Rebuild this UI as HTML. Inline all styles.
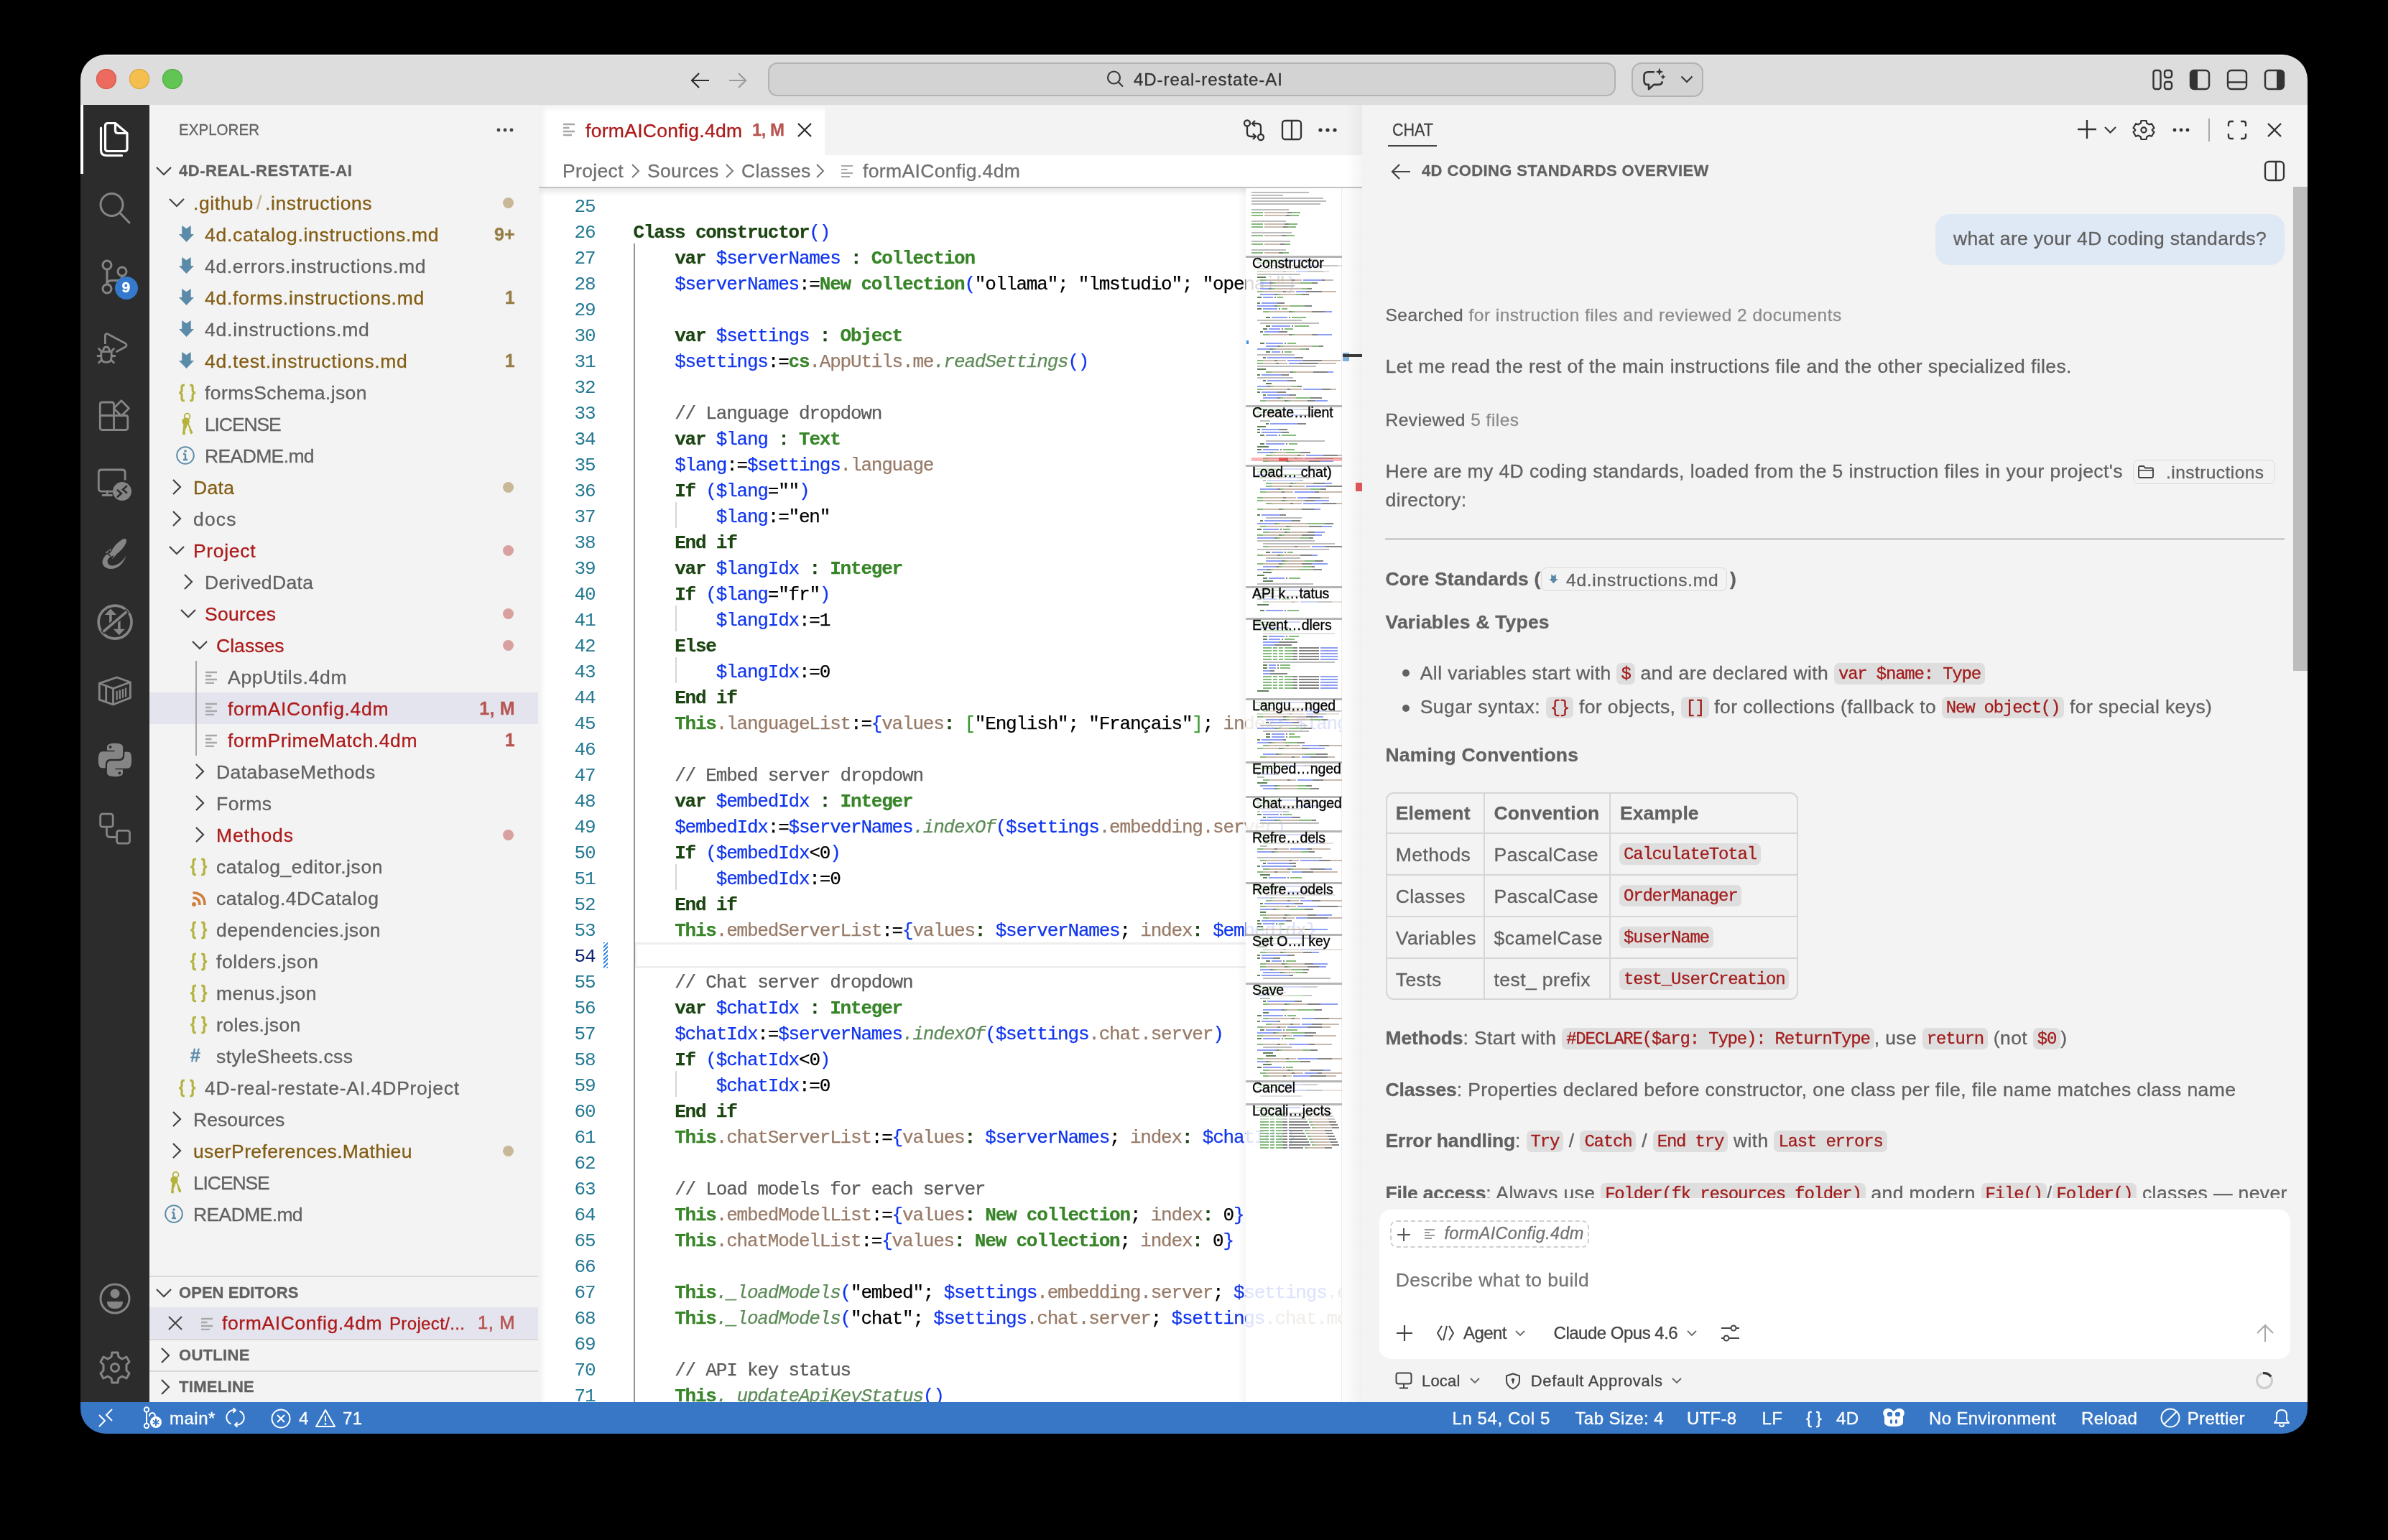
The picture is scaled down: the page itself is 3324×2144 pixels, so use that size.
<!DOCTYPE html><html><head><meta charset="utf-8"><style>
*{margin:0;padding:0}
html,body{width:3324px;height:2144px;overflow:hidden;background:#000}
body{position:relative;font-family:"Liberation Sans",sans-serif}
.a{position:absolute}
.t{position:absolute;white-space:pre;line-height:1;-webkit-text-stroke:0.3px currentColor}
#win{position:absolute;left:0;top:0;width:3324px;height:2144px;clip-path:inset(76px 112px 148px 112px round 35px);background:#f3f3f3;will-change:transform}
.ln{position:absolute;right:1039.6px;width:120px;text-align:right;font:26px/36px "Liberation Mono",monospace;letter-spacing:-1.2px;white-space:pre}
.cl{position:absolute;left:881.5px;font:26px/36px "Liberation Mono",monospace;letter-spacing:-1.2px;white-space:pre;color:#000;-webkit-text-stroke:0.25px currentColor}
.ck{color:#1b4511;font-weight:700}
.ct{color:#378528;font-weight:700}
.cv{color:#1035ef}
.cb{color:#1035ef}
.cp{color:#987a67}
.cm{color:#5d8b58;font-style:italic}
.cc{color:#5c5c5c}
.cq{color:#3f9a38}
.ch{display:inline-block;font-family:"Liberation Mono",monospace;font-size:24px;letter-spacing:-1.2px;color:#a31b1b;background:#dedede;border-radius:7px;padding:5px 6px 4px;line-height:21px;vertical-align:1px}
.sb .t{-webkit-text-stroke:0.35px #fff}
b{font-weight:700;letter-spacing:-0.15px}
</style></head><body><div id="win"><div class="a" style="left:0px;top:76px;width:3324px;height:70px;background:#dddddd;"></div><div class="a" style="left:0px;top:76px;width:3324px;height:2px;background:#ececec;"></div><div class="a" style="left:134px;top:96px;width:28px;height:28px;border-radius:50%;background:#ed6a5e;box-shadow:inset 0 0 0 1px #d4574b"></div><div class="a" style="left:180px;top:96px;width:28px;height:28px;border-radius:50%;background:#f4bf4f;box-shadow:inset 0 0 0 1px #d9a43b"></div><div class="a" style="left:226px;top:96px;width:28px;height:28px;border-radius:50%;background:#61c554;box-shadow:inset 0 0 0 1px #50a940"></div><svg class="a" style="left:960px;top:99px;" width="30" height="26" viewBox="0 0 30 26" fill="none"><path d="M27 13H4M13 3L3 13L13 23" stroke="#2b2b2b" stroke-width="2.2"/></svg><svg class="a" style="left:1012px;top:99px;" width="30" height="26" viewBox="0 0 30 26" fill="none"><path d="M3 13H26M16 3L26 13L16 23" stroke="#9a9a9a" stroke-width="2.2"/></svg><div class="a" style="left:1069px;top:87px;width:1180px;height:47px;box-sizing:border-box;border:2px solid #b2b2b2;border-radius:13px;background:#d3d3d3"></div><svg class="a" style="left:1538px;top:96px;" width="28" height="28" viewBox="0 0 28 28" fill="none"><circle cx="12.5" cy="12" r="8.5" stroke="#3a3a3a" stroke-width="2.2"/><path d="M18.5 18L25 24.5" stroke="#3a3a3a" stroke-width="2.2"/></svg><div class="t" style="left:1578.0px;top:99.0px;font-size:24px;color:#333333;letter-spacing:0.95px;">4D-real-restate-AI</div><div class="a" style="left:2271px;top:87px;width:100px;height:48px;box-sizing:border-box;border:2px solid #b2b2b2;border-radius:14px;background:#d3d3d3"></div><svg class="a" style="left:2284px;top:92px;" width="40" height="36" viewBox="0 0 40 36" fill="none"><path d="M18.8 8.2H10Q4.5 8.2 4.5 13.7V20.4Q4.5 25.9 10 25.9H11V32.2L18 25.9H24Q29.7 25.9 29.7 21.3" stroke="#333" stroke-width="2.6" stroke-linejoin="round"/><path d="M25.9 2.5L27.4 6.4L31.3 7.9L27.4 9.4L25.9 13.3L24.4 9.4L20.5 7.9L24.4 6.4Z" fill="#333"/><path d="M30.9 11.2L32 13.9L34.7 15L32 16.1L30.9 18.8L29.8 16.1L27.1 15L29.8 13.9Z" fill="#333"/></svg><svg class="a" style="left:2339px;top:105px;" width="18" height="11" viewBox="0 0 18 11" fill="none"><path d="M1.5 1.5L9 9L16.5 1.5" stroke="#333" stroke-width="2"/></svg><svg class="a" style="left:2994px;top:95px;" width="32" height="32" viewBox="0 0 32 32" fill="none"><rect x="3.5" y="3" width="10" height="26" rx="3" stroke="#333" stroke-width="2.4"/><rect x="19" y="3" width="10" height="10" rx="3" stroke="#333" stroke-width="2.4"/><rect x="19" y="19" width="10" height="10" rx="3" stroke="#333" stroke-width="2.4"/></svg><svg class="a" style="left:3046px;top:95px;" width="32" height="32" viewBox="0 0 32 32" fill="none"><rect x="3" y="3" width="26" height="26" rx="5" stroke="#333" stroke-width="2.4"/><path d="M3 8Q3 3 8 3H13V29H8Q3 29 3 24Z" fill="#333"/></svg><svg class="a" style="left:3098px;top:95px;" width="32" height="32" viewBox="0 0 32 32" fill="none"><rect x="3" y="3" width="26" height="26" rx="5" stroke="#333" stroke-width="2.4"/><path d="M3 19.5H29" stroke="#333" stroke-width="2.4"/></svg><svg class="a" style="left:3150px;top:95px;" width="32" height="32" viewBox="0 0 32 32" fill="none"><rect x="3" y="3" width="26" height="26" rx="5" stroke="#333" stroke-width="2.4"/><path d="M19 3H24Q29 3 29 8V24Q29 29 24 29H19Z" fill="#333"/></svg><div class="a" style="left:112px;top:146px;width:96px;height:1806px;background:#2c2c2c;"></div><div class="a" style="left:112px;top:146px;width:4px;height:96px;background:#ffffff;"></div><svg class="a" style="left:130px;top:164px" width="60" height="60" viewBox="130 164 60 60" fill="none"><path d="M150 171.5H160.5L177 185.5V207Q177 210.5 173.5 210.5H150Q146.5 210.5 146.5 207V175Q146.5 171.5 150 171.5Z" stroke="#fff" stroke-width="3.2" stroke-linejoin="round"/><path d="M160.5 171.5V181.5Q160.5 185.5 164.5 185.5H177" stroke="#fff" stroke-width="3.2"/><path d="M140.5 178V209Q140.5 216.5 148.5 216.5H169.5" stroke="#fff" stroke-width="3.2" stroke-linecap="round"/></svg><svg class="a" style="left:130px;top:259px" width="60" height="60" viewBox="-30 -30 60 60" fill="none"><circle cx="-4.5" cy="-4" r="15.5" stroke="#858585" stroke-width="3"/><path d="M6.5 7L20 21" stroke="#858585" stroke-width="3" stroke-linecap="round"/></svg><svg class="a" style="left:130px;top:356px" width="60" height="60" viewBox="-30 -30 60 60" fill="none"><circle cx="-11" cy="-17" r="6" stroke="#858585" stroke-width="3"/><circle cx="-11" cy="16" r="6" stroke="#858585" stroke-width="3"/><circle cx="10" cy="-8" r="6" stroke="#858585" stroke-width="3"/><path d="M-11 -11V10M10 -2Q10 4.5 3 4.5H-4Q-11 4.5 -11 10" stroke="#858585" stroke-width="3"/></svg><div class="a" style="left:160px;top:385px;width:32px;height:32px;border-radius:50%;background:#3579cd"></div><div class="t" style="left:169.5px;top:389.1px;font-size:21px;color:#ffffff;font-weight:700;">9</div><svg class="a" style="left:130px;top:453px" width="60" height="60" viewBox="130 453 60 60" fill="none"><path d="M146.4 479V467.5Q146.4 463.5 150 465L174.5 478Q177.8 480.5 174.5 483L161.4 490" stroke="#858585" stroke-width="2.8" stroke-linejoin="round"/><path d="M143.5 490.5Q143.5 483 148 483Q152.5 483 152.5 490.5" stroke="#858585" stroke-width="2.8"/><path d="M140.8 489.6H155.2V497Q155.2 504.3 148 504.3Q140.8 504.3 140.8 497Z" stroke="#858585" stroke-width="2.8" stroke-linejoin="round"/><path d="M137.5 485.5L141.5 489.5M158.5 485.5L154.5 489.5M136 495.5H140.5M155.5 495.5H160M137.5 505L141.5 501M158.5 505L154.5 501" stroke="#858585" stroke-width="2.8" stroke-linecap="round"/></svg><svg class="a" style="left:130px;top:548px" width="60" height="60" viewBox="130 548 60 60" fill="none"><path d="M142.3 560H155.5Q158.5 560 158.5 563V578.5H174.8Q177.8 578.5 177.8 581.5V595.5Q177.8 598.5 174.8 598.5H142.3Q139.3 598.5 139.3 595.5V563Q139.3 560 142.3 560ZM139.3 578.5H158.5V598.5" stroke="#858585" stroke-width="2.8"/><path d="M168.9 557.8L179.5 568.4L168.9 579L158.3 568.4Z" stroke="#858585" stroke-width="2.8" stroke-linejoin="round"/></svg><svg class="a" style="left:130px;top:644px" width="60" height="60" viewBox="130 644 60 60" fill="none"><path d="M159 684.1H141.3Q137.3 684.1 137.3 680.1V658Q137.3 654 141.3 654H170.1Q174.1 654 174.1 658V668.6" stroke="#858585" stroke-width="2.8"/><path d="M149.2 684V689.5M143 689.5H155.4" stroke="#858585" stroke-width="2.8" stroke-linecap="round"/><circle cx="170" cy="684.1" r="13" fill="#858585"/><path d="M163.7 682.6L168.9 686.9L163.7 691.4M176.2 676.9L171 681.5L176.2 685.9" stroke="#2c2c2c" stroke-width="2.6" stroke-linecap="round"/></svg><svg class="a" style="left:130px;top:740px" width="60" height="60" viewBox="130 740 60 60" fill="none"><ellipse cx="165.2" cy="761.8" rx="15" ry="5.3" transform="rotate(-48 165.2 761.8)" fill="#858585"/><path d="M154.5 763.5L146.4 769.6L153.5 770.5Z M160.5 769.5L155.7 778.8L162.5 771.5Z M152.5 766L158.5 772L155.5 775L149.5 769Z" fill="#858585"/><path d="M148.6 771.5Q139 781 144.5 788Q151 794.5 162 790.5Q171.5 786 175.8 773.2Q169 784.5 160 787Q151.5 789 149.8 783Q148.8 778 154 775Z" fill="#858585"/></svg><svg class="a" style="left:130px;top:836px" width="60" height="60" viewBox="130 836 60 60" fill="none"><circle cx="160.1" cy="866.1" r="23" stroke="#858585" stroke-width="3.6"/><path d="M153.9 869.5V855M165.8 863V877" stroke="#858585" stroke-width="3.6"/><path d="M153.9 847.5L162 856H145.8Z M165.8 884.3L157.7 875.8H173.9Z" fill="#858585"/><path d="M142.5 880.5L177.5 850.5" stroke="#2c2c2c" stroke-width="7"/><path d="M143.5 879.6L176.5 851.4" stroke="#858585" stroke-width="3.6"/></svg><svg class="a" style="left:130px;top:932px" width="60" height="60" viewBox="130 932 60 60" fill="none"><path d="M138.3 951.3L162.7 943L181.4 949.7V971.5L157.5 980.9L138.3 974.1Z" stroke="#858585" stroke-width="2.8" stroke-linejoin="round"/><path d="M138.3 951.3L157.5 958.5L181.4 949.7M157.5 958.5V980.9M147.7 954.5V977" stroke="#858585" stroke-width="2.8"/><path d="M162.7 962V974.5M166.9 960.5V973M171 959V971.5M175 957.5V970" stroke="#858585" stroke-width="2.2"/></svg><svg class="a" style="left:130px;top:1028px" width="60" height="60" viewBox="130 1028 60 60" fill="none"><path d="M171.8 1070.5V1076.5Q171.8 1082 160 1082Q148.1 1082 148.1 1076V1065Q148.1 1058.5 155 1058.5H166Q172.5 1058.5 172.5 1051V1046H179Q184 1046 184 1058Q184 1070.5 178 1070.5H160.5V1070.5Z" fill="#858585" stroke="#2c2c2c" stroke-width="1.6"/><path d="M148.2 1045.5V1039.5Q148.2 1034 160 1034Q171.9 1034 171.9 1040V1051Q171.9 1057.5 165 1057.5H154Q147.5 1057.5 147.5 1065V1070H141Q136 1070 136 1058Q136 1045.5 142 1045.5H159.5V1045.5Z" fill="#858585" stroke="#2c2c2c" stroke-width="1.6"/><circle cx="153.6" cy="1039.9" r="1.9" fill="#2c2c2c"/><circle cx="166.4" cy="1076.3" r="1.9" fill="#2c2c2c"/></svg><svg class="a" style="left:130px;top:1124px" width="60" height="60" viewBox="130 1124 60 60" fill="none"><rect x="139.7" y="1133.2" width="17.5" height="18" rx="3" stroke="#858585" stroke-width="2.8"/><rect x="162.6" y="1156.3" width="17.9" height="17.8" rx="3" stroke="#858585" stroke-width="2.8"/><path d="M148.5 1152.6V1160.5Q148.5 1165.5 153.5 1165.5H161.2" stroke="#858585" stroke-width="2.8"/></svg><svg class="a" style="left:130px;top:1778px" width="60" height="60" viewBox="-30 -30 60 60" fill="none"><circle cx="0" cy="0" r="20" stroke="#858585" stroke-width="3"/><circle cx="0" cy="-7" r="6.5" fill="#858585"/><path d="M-11 4H11Q11 14 0 14Q-11 14 -11 4Z" fill="#858585"/></svg><svg class="a" style="left:130px;top:1874px" width="60" height="60" viewBox="-30 -30 60 60" fill="none"><path d="M-4 -21H4L5 -15L10 -12L16 -15L20 -8L16 -4V4L20 8L16 15L10 12L5 15L4 21H-4L-5 15L-10 12L-16 15L-20 8L-16 4V-4L-20 -8L-16 -15L-10 -12L-5 -15Z" stroke="#858585" stroke-width="3" stroke-linejoin="round"/><circle cx="0" cy="0" r="5.5" stroke="#858585" stroke-width="3"/></svg><div class="a" style="left:208px;top:146px;width:542px;height:1806px;background:#f3f3f3;"></div><div class="t" style="left:249.0px;top:170.0px;font-size:22px;color:#616161;transform:scaleX(0.935);transform-origin:0 0;">EXPLORER</div><svg class="a" style="left:690px;top:174px;" width="28" height="14" viewBox="0 0 28 14" fill="none"><circle cx="4" cy="7" r="2.4" fill="#424242"/><circle cx="13" cy="7" r="2.4" fill="#424242"/><circle cx="22" cy="7" r="2.4" fill="#424242"/></svg><svg class="a" style="left:216px;top:230px;" width="24" height="16" viewBox="0 0 24 16" fill="none"><path d="M2 3L12 13L22 3" stroke="#424242" stroke-width="2.2"/></svg><div class="t" style="left:249.0px;top:227.0px;font-size:22px;color:#616161;font-weight:700;letter-spacing:0.55px;">4D-REAL-RESTATE-AI</div><svg class="a" style="left:234px;top:274px;" width="24" height="16" viewBox="0 0 24 16" fill="none"><path d="M2 3L12 13L22 3" stroke="#424242" stroke-width="2.2"/></svg><div class="t" style="left:269.0px;top:269.8px;font-size:26.5px;color:#835d13;letter-spacing:0.6px;">.github</div><div class="t" style="left:357.0px;top:268.8px;font-size:26.5px;color:#c2b48f;letter-spacing:0.6px;">/</div><div class="t" style="left:369.0px;top:269.8px;font-size:26.5px;color:#835d13;letter-spacing:0.6px;">.instructions</div><div class="a" style="left:700px;top:274.5px;width:15px;height:15px;border-radius:50%;background:#c8b898"></div><svg class="a" style="left:249px;top:314px;" width="22" height="24" viewBox="0 0 22 24" fill="none"><path d="M4.2 0L10.5 4.3L16.7 0V12H21L10.5 23L0 12H4.2Z" fill="#5b8ba9"/></svg><div class="t" style="left:285.0px;top:313.8px;font-size:26.5px;color:#835d13;letter-spacing:0.71px;">4d.catalog.instructions.md</div><div class="t" style="right:2607px;top:313.9px;font-size:25px;color:#967d46;font-weight:700;letter-spacing:0.3px">9+</div><svg class="a" style="left:249px;top:358px;" width="22" height="24" viewBox="0 0 22 24" fill="none"><path d="M4.2 0L10.5 4.3L16.7 0V12H21L10.5 23L0 12H4.2Z" fill="#5b8ba9"/></svg><div class="t" style="left:285.0px;top:357.8px;font-size:26.5px;color:#616161;letter-spacing:0.66px;">4d.errors.instructions.md</div><svg class="a" style="left:249px;top:402px;" width="22" height="24" viewBox="0 0 22 24" fill="none"><path d="M4.2 0L10.5 4.3L16.7 0V12H21L10.5 23L0 12H4.2Z" fill="#5b8ba9"/></svg><div class="t" style="left:285.0px;top:401.8px;font-size:26.5px;color:#835d13;letter-spacing:0.72px;">4d.forms.instructions.md</div><div class="t" style="right:2607px;top:401.9px;font-size:25px;color:#967d46;font-weight:700;letter-spacing:0.3px">1</div><svg class="a" style="left:249px;top:446px;" width="22" height="24" viewBox="0 0 22 24" fill="none"><path d="M4.2 0L10.5 4.3L16.7 0V12H21L10.5 23L0 12H4.2Z" fill="#5b8ba9"/></svg><div class="t" style="left:285.0px;top:445.8px;font-size:26.5px;color:#616161;letter-spacing:0.81px;">4d.instructions.md</div><svg class="a" style="left:249px;top:490px;" width="22" height="24" viewBox="0 0 22 24" fill="none"><path d="M4.2 0L10.5 4.3L16.7 0V12H21L10.5 23L0 12H4.2Z" fill="#5b8ba9"/></svg><div class="t" style="left:285.0px;top:489.8px;font-size:26.5px;color:#835d13;letter-spacing:0.76px;">4d.test.instructions.md</div><div class="t" style="right:2607px;top:489.9px;font-size:25px;color:#967d46;font-weight:700;letter-spacing:0.3px">1</div><div class="t" style="left:249.0px;top:533.0px;font-size:25px;color:#b2b23e;font-weight:700;letter-spacing:0.5px;transform:scaleX(0.85);transform-origin:0 0;">{ }</div><div class="t" style="left:285.0px;top:533.8px;font-size:26.5px;color:#616161;letter-spacing:0.4px;">formsSchema.json</div><svg class="a" style="left:251px;top:574px;" width="22" height="32" viewBox="0 0 22 32" fill="none"><circle cx="9.6" cy="5.6" r="3.9" stroke="#b3b33b" stroke-width="1.8"/><circle cx="7.6" cy="12.8" r="5.2" fill="#b3b33b"/><path d="M4.6 15L3 31L6.5 31.5L7.2 28L5.8 27L7.5 25.5L6.5 24L8.5 22L9.8 15Z" fill="#b3b33b"/><path d="M9.5 14.5L11 14L17.5 28.5L15 30.5L13 27.5L13.5 26L12 24.5L12.5 23Z" fill="#b3b33b"/></svg><div class="t" style="left:285.0px;top:577.8px;font-size:26.5px;color:#616161;letter-spacing:-1.12px;">LICENSE</div><svg class="a" style="left:245px;top:621px;" width="28" height="28" viewBox="0 0 28 28" fill="none"><circle cx="13" cy="13" r="11.8" stroke="#5b8ba9" stroke-width="2"/><path d="M13 11V19M10 19H16M10 11H13" stroke="#5b8ba9" stroke-width="2.4"/><circle cx="13" cy="7" r="1.8" fill="#5b8ba9"/></svg><div class="t" style="left:285.0px;top:621.8px;font-size:26.5px;color:#616161;letter-spacing:-0.62px;">README.md</div><svg class="a" style="left:238px;top:666px;" width="16" height="24" viewBox="0 0 16 24" fill="none"><path d="M3 2L13 12L3 22" stroke="#424242" stroke-width="2.2"/></svg><div class="t" style="left:269.0px;top:665.8px;font-size:26.5px;color:#835d13;letter-spacing:0.37px;">Data</div><div class="a" style="left:700px;top:670.5px;width:15px;height:15px;border-radius:50%;background:#c8b898"></div><svg class="a" style="left:238px;top:710px;" width="16" height="24" viewBox="0 0 16 24" fill="none"><path d="M3 2L13 12L3 22" stroke="#424242" stroke-width="2.2"/></svg><div class="t" style="left:269.0px;top:709.8px;font-size:26.5px;color:#616161;letter-spacing:1.17px;">docs</div><svg class="a" style="left:234px;top:758px;" width="24" height="16" viewBox="0 0 24 16" fill="none"><path d="M2 3L12 13L22 3" stroke="#424242" stroke-width="2.2"/></svg><div class="t" style="left:269.0px;top:753.8px;font-size:26.5px;color:#ad1a1a;letter-spacing:0.67px;">Project</div><div class="a" style="left:700px;top:758.5px;width:15px;height:15px;border-radius:50%;background:#d9a0a0"></div><svg class="a" style="left:254px;top:798px;" width="16" height="24" viewBox="0 0 16 24" fill="none"><path d="M3 2L13 12L3 22" stroke="#424242" stroke-width="2.2"/></svg><div class="t" style="left:285.0px;top:797.8px;font-size:26.5px;color:#616161;letter-spacing:0.37px;">DerivedData</div><svg class="a" style="left:250px;top:846px;" width="24" height="16" viewBox="0 0 24 16" fill="none"><path d="M2 3L12 13L22 3" stroke="#424242" stroke-width="2.2"/></svg><div class="t" style="left:285.0px;top:841.8px;font-size:26.5px;color:#ad1a1a;letter-spacing:0.3px;">Sources</div><div class="a" style="left:700px;top:846.5px;width:15px;height:15px;border-radius:50%;background:#d9a0a0"></div><svg class="a" style="left:266px;top:890px;" width="24" height="16" viewBox="0 0 24 16" fill="none"><path d="M2 3L12 13L22 3" stroke="#424242" stroke-width="2.2"/></svg><div class="t" style="left:301.0px;top:885.8px;font-size:26.5px;color:#ad1a1a;letter-spacing:0.04px;">Classes</div><div class="a" style="left:700px;top:890.5px;width:15px;height:15px;border-radius:50%;background:#d9a0a0"></div><svg class="a" style="left:285px;top:934px;" width="18" height="18" viewBox="0 0 18 18" fill="none"><path d="M1 2H17M1 7H9.5M1 12H17M1 17H13" stroke="#a8a8a8" stroke-width="2.4"/></svg><div class="t" style="left:317.0px;top:929.8px;font-size:26.5px;color:#616161;letter-spacing:0.72px;">AppUtils.4dm</div><div class="a" style="left:208px;top:964px;width:541px;height:44px;background:#e4e4ee;"></div><svg class="a" style="left:285px;top:978px;" width="18" height="18" viewBox="0 0 18 18" fill="none"><path d="M1 2H17M1 7H9.5M1 12H17M1 17H13" stroke="#a8a8a8" stroke-width="2.4"/></svg><div class="t" style="left:317.0px;top:973.8px;font-size:26.5px;color:#ad1a1a;letter-spacing:0.66px;">formAIConfig.4dm</div><div class="t" style="right:2607px;top:973.9px;font-size:25px;color:#b85550;font-weight:700;letter-spacing:0.3px">1, M</div><svg class="a" style="left:285px;top:1022px;" width="18" height="18" viewBox="0 0 18 18" fill="none"><path d="M1 2H17M1 7H9.5M1 12H17M1 17H13" stroke="#a8a8a8" stroke-width="2.4"/></svg><div class="t" style="left:317.0px;top:1017.8px;font-size:26.5px;color:#ad1a1a;letter-spacing:0.6px;">formPrimeMatch.4dm</div><div class="t" style="right:2607px;top:1017.9px;font-size:25px;color:#b85550;font-weight:700;letter-spacing:0.3px">1</div><svg class="a" style="left:270px;top:1062px;" width="16" height="24" viewBox="0 0 16 24" fill="none"><path d="M3 2L13 12L3 22" stroke="#424242" stroke-width="2.2"/></svg><div class="t" style="left:301.0px;top:1061.8px;font-size:26.5px;color:#616161;letter-spacing:0.44px;">DatabaseMethods</div><svg class="a" style="left:270px;top:1106px;" width="16" height="24" viewBox="0 0 16 24" fill="none"><path d="M3 2L13 12L3 22" stroke="#424242" stroke-width="2.2"/></svg><div class="t" style="left:301.0px;top:1105.8px;font-size:26.5px;color:#616161;letter-spacing:0.48px;">Forms</div><svg class="a" style="left:270px;top:1150px;" width="16" height="24" viewBox="0 0 16 24" fill="none"><path d="M3 2L13 12L3 22" stroke="#424242" stroke-width="2.2"/></svg><div class="t" style="left:301.0px;top:1149.8px;font-size:26.5px;color:#ad1a1a;letter-spacing:0.88px;">Methods</div><div class="a" style="left:700px;top:1154.5px;width:15px;height:15px;border-radius:50%;background:#d9a0a0"></div><div class="t" style="left:265.0px;top:1193.0px;font-size:25px;color:#b2b23e;font-weight:700;letter-spacing:0.5px;transform:scaleX(0.85);transform-origin:0 0;">{ }</div><div class="t" style="left:301.0px;top:1193.8px;font-size:26.5px;color:#616161;letter-spacing:0.58px;">catalog_editor.json</div><svg class="a" style="left:266px;top:1240px;" width="24" height="24" viewBox="0 0 24 24" fill="none"><circle cx="4" cy="19" r="3" fill="#d0803f"/><path d="M2.5 10Q12 10 12 20M2.5 3Q19 3 19 20" stroke="#d0803f" stroke-width="3.6"/></svg><div class="t" style="left:301.0px;top:1237.8px;font-size:26.5px;color:#616161;letter-spacing:0.49px;">catalog.4DCatalog</div><div class="t" style="left:265.0px;top:1281.0px;font-size:25px;color:#b2b23e;font-weight:700;letter-spacing:0.5px;transform:scaleX(0.85);transform-origin:0 0;">{ }</div><div class="t" style="left:301.0px;top:1281.8px;font-size:26.5px;color:#616161;letter-spacing:0.47px;">dependencies.json</div><div class="t" style="left:265.0px;top:1325.0px;font-size:25px;color:#b2b23e;font-weight:700;letter-spacing:0.5px;transform:scaleX(0.85);transform-origin:0 0;">{ }</div><div class="t" style="left:301.0px;top:1325.8px;font-size:26.5px;color:#616161;letter-spacing:0.59px;">folders.json</div><div class="t" style="left:265.0px;top:1369.0px;font-size:25px;color:#b2b23e;font-weight:700;letter-spacing:0.5px;transform:scaleX(0.85);transform-origin:0 0;">{ }</div><div class="t" style="left:301.0px;top:1369.8px;font-size:26.5px;color:#616161;letter-spacing:0.43px;">menus.json</div><div class="t" style="left:265.0px;top:1413.0px;font-size:25px;color:#b2b23e;font-weight:700;letter-spacing:0.5px;transform:scaleX(0.85);transform-origin:0 0;">{ }</div><div class="t" style="left:301.0px;top:1413.8px;font-size:26.5px;color:#616161;letter-spacing:0.43px;">roles.json</div><div class="t" style="left:265.0px;top:1457.0px;font-size:25px;color:#5b8ba9;font-weight:700;">#</div><div class="t" style="left:301.0px;top:1457.8px;font-size:26.5px;color:#616161;letter-spacing:0.42px;">styleSheets.css</div><div class="t" style="left:249.0px;top:1501.0px;font-size:25px;color:#b2b23e;font-weight:700;letter-spacing:0.5px;transform:scaleX(0.85);transform-origin:0 0;">{ }</div><div class="t" style="left:285.0px;top:1501.8px;font-size:26.5px;color:#616161;letter-spacing:0.73px;">4D-real-restate-AI.4DProject</div><svg class="a" style="left:238px;top:1546px;" width="16" height="24" viewBox="0 0 16 24" fill="none"><path d="M3 2L13 12L3 22" stroke="#424242" stroke-width="2.2"/></svg><div class="t" style="left:269.0px;top:1545.8px;font-size:26.5px;color:#616161;letter-spacing:0.07px;">Resources</div><svg class="a" style="left:238px;top:1590px;" width="16" height="24" viewBox="0 0 16 24" fill="none"><path d="M3 2L13 12L3 22" stroke="#424242" stroke-width="2.2"/></svg><div class="t" style="left:269.0px;top:1589.8px;font-size:26.5px;color:#835d13;letter-spacing:0.38px;">userPreferences.Mathieu</div><div class="a" style="left:700px;top:1594.5px;width:15px;height:15px;border-radius:50%;background:#c8b898"></div><svg class="a" style="left:235px;top:1630px;" width="22" height="32" viewBox="0 0 22 32" fill="none"><circle cx="9.6" cy="5.6" r="3.9" stroke="#b3b33b" stroke-width="1.8"/><circle cx="7.6" cy="12.8" r="5.2" fill="#b3b33b"/><path d="M4.6 15L3 31L6.5 31.5L7.2 28L5.8 27L7.5 25.5L6.5 24L8.5 22L9.8 15Z" fill="#b3b33b"/><path d="M9.5 14.5L11 14L17.5 28.5L15 30.5L13 27.5L13.5 26L12 24.5L12.5 23Z" fill="#b3b33b"/></svg><div class="t" style="left:269.0px;top:1633.8px;font-size:26.5px;color:#616161;letter-spacing:-1.12px;">LICENSE</div><svg class="a" style="left:229px;top:1677px;" width="28" height="28" viewBox="0 0 28 28" fill="none"><circle cx="13" cy="13" r="11.8" stroke="#5b8ba9" stroke-width="2"/><path d="M13 11V19M10 19H16M10 11H13" stroke="#5b8ba9" stroke-width="2.4"/><circle cx="13" cy="7" r="1.8" fill="#5b8ba9"/></svg><div class="t" style="left:269.0px;top:1677.8px;font-size:26.5px;color:#616161;letter-spacing:-0.62px;">README.md</div><div class="a" style="left:272px;top:920px;width:2px;height:132px;background:#a6a6a6;"></div><div class="a" style="left:208px;top:1776px;width:541px;height:2px;background:#d8d8d8;"></div><svg class="a" style="left:216px;top:1792px;" width="24" height="16" viewBox="0 0 24 16" fill="none"><path d="M2 3L12 13L22 3" stroke="#424242" stroke-width="2.2"/></svg><div class="t" style="left:249.0px;top:1789.0px;font-size:22px;color:#616161;font-weight:700;letter-spacing:0.05px;">OPEN EDITORS</div><div class="a" style="left:208px;top:1820px;width:541px;height:44px;background:#e4e4ee;"></div><svg class="a" style="left:233px;top:1831px;" width="22" height="22" viewBox="0 0 22 22" fill="none"><path d="M2 2L20 20M20 2L2 20" stroke="#424242" stroke-width="2"/></svg><svg class="a" style="left:279px;top:1834px;" width="18" height="18" viewBox="0 0 18 18" fill="none"><path d="M1 2H17M1 7H9.5M1 12H17M1 17H13" stroke="#a8a8a8" stroke-width="2.4"/></svg><div class="t" style="left:309.0px;top:1828.8px;font-size:26.5px;color:#ad1a1a;letter-spacing:0.6px;">formAIConfig.4dm</div><div class="t" style="left:542.0px;top:1831.2px;font-size:24px;color:#ad1a1a;letter-spacing:0.35px;">Project/...</div><div class="t" style="right:2607px;top:1828.9px;font-size:25.5px;color:#b85550;letter-spacing:0.6px;-webkit-text-stroke:0.6px #b85550">1, M</div><div class="a" style="left:208px;top:1864px;width:541px;height:2px;background:#d8d8d8;"></div><svg class="a" style="left:222px;top:1875px;" width="16" height="24" viewBox="0 0 16 24" fill="none"><path d="M3 2L13 12L3 22" stroke="#424242" stroke-width="2.2"/></svg><div class="t" style="left:249.0px;top:1876.0px;font-size:22px;color:#616161;font-weight:700;letter-spacing:0.3px;">OUTLINE</div><div class="a" style="left:208px;top:1908px;width:541px;height:2px;background:#d8d8d8;"></div><svg class="a" style="left:222px;top:1919px;" width="16" height="24" viewBox="0 0 16 24" fill="none"><path d="M3 2L13 12L3 22" stroke="#424242" stroke-width="2.2"/></svg><div class="t" style="left:249.0px;top:1920.0px;font-size:22px;color:#616161;font-weight:700;letter-spacing:0.3px;">TIMELINE</div><div class="a" style="left:750px;top:146px;width:1146px;height:1806px;background:#ffffff;"></div><div class="a" style="left:750px;top:146px;width:1146px;height:70px;background:#f3f3f3;"></div><div class="a" style="left:750px;top:146px;width:398px;height:70px;background:#ffffff;"></div><svg class="a" style="left:783px;top:171px;" width="20" height="20" viewBox="0 0 20 20" fill="none"><path d="M1 2H17M1 7H9.5M1 12H17M1 17H13" stroke="#a8a8a8" stroke-width="2.4"/></svg><div class="t" style="left:815.0px;top:168.6px;font-size:26.5px;color:#ad1a1a;letter-spacing:0.3px;">formAIConfig.4dm</div><div class="t" style="left:1047.0px;top:169.4px;font-size:24px;color:#b85550;font-weight:700;letter-spacing:-0.6px;">1, M</div><svg class="a" style="left:1109px;top:170px;" width="22" height="22" viewBox="0 0 22 22" fill="none"><path d="M2 2L20 20M20 2L2 20" stroke="#2b2b2b" stroke-width="2.2"/></svg><div class="a" style="left:750px;top:146px;width:12px;height:116px;background:linear-gradient(90deg,#efefef,rgba(255,255,255,0))"></div><div class="a" style="left:750px;top:146px;width:398px;height:10px;background:linear-gradient(#f1f1f1,rgba(255,255,255,0))"></div><svg class="a" style="left:1729px;top:165px;" width="34" height="34" viewBox="0 0 34 34" fill="none"><circle cx="7" cy="6.5" r="4" stroke="#333" stroke-width="2.3"/><circle cx="26" cy="26" r="4" stroke="#333" stroke-width="2.3"/><path d="M7 10.5V20Q7 25 12 25H19M15 21L19 25L15 29M26 22V12Q26 7 21 7H14M18 3L14 7L18 11" stroke="#333" stroke-width="2.3"/></svg><svg class="a" style="left:1782px;top:165px;" width="32" height="32" viewBox="0 0 32 32" fill="none"><rect x="3" y="3" width="26" height="26" rx="4" stroke="#333" stroke-width="2.3"/><path d="M16 3V29" stroke="#333" stroke-width="2.3"/></svg><svg class="a" style="left:1834px;top:175px;" width="28" height="12" viewBox="0 0 28 12" fill="none"><circle cx="4" cy="6" r="2.6" fill="#333"/><circle cx="14" cy="6" r="2.6" fill="#333"/><circle cx="24" cy="6" r="2.6" fill="#333"/></svg><div class="t" style="left:783.0px;top:225.3px;font-size:26.5px;color:#717171;letter-spacing:0.35px;">Project</div><svg class="a" style="left:878px;top:227px;" width="14" height="22" viewBox="0 0 14 22" fill="none"><path d="M2 2L11 11L2 20" stroke="#777" stroke-width="2"/></svg><div class="t" style="left:901.0px;top:225.3px;font-size:26.5px;color:#717171;letter-spacing:0.35px;">Sources</div><svg class="a" style="left:1009px;top:227px;" width="14" height="22" viewBox="0 0 14 22" fill="none"><path d="M2 2L11 11L2 20" stroke="#777" stroke-width="2"/></svg><div class="t" style="left:1032.0px;top:225.3px;font-size:26.5px;color:#717171;letter-spacing:0.35px;">Classes</div><svg class="a" style="left:1135px;top:227px;" width="14" height="22" viewBox="0 0 14 22" fill="none"><path d="M2 2L11 11L2 20" stroke="#777" stroke-width="2"/></svg><svg class="a" style="left:1170px;top:229px;" width="20" height="20" viewBox="0 0 20 20" fill="none"><path d="M1 2H17M1 7H9.5M1 12H17M1 17H13" stroke="#a8a8a8" stroke-width="2.2"/></svg><div class="t" style="left:1201.0px;top:225.3px;font-size:26.5px;color:#717171;letter-spacing:0.35px;">formAIConfig.4dm</div><div class="a" style="left:750px;top:260px;width:1146px;height:2px;background:#c2c2c2;"></div><div class="a" style="left:750px;top:262px;width:9px;height:1690px;background:linear-gradient(90deg,#f1f1f1,rgba(255,255,255,0))"></div><div class="a" style="left:750px;top:262px;width:1146px;height:11px;background:linear-gradient(#e9e9e9,rgba(255,255,255,0))"></div><div class="a" style="left:884px;top:1312px;width:850px;height:36px;box-sizing:border-box;border:3.5px solid #eeeeee;border-right:none;border-left-width:2px"></div><div class="a" style="left:882px;top:339px;width:2px;height:1613px;background:#939393;"></div><div class="a" style="left:940px;top:699px;width:2px;height:36px;background:#d6d6d6;"></div><div class="a" style="left:940px;top:843px;width:2px;height:36px;background:#d6d6d6;"></div><div class="a" style="left:940px;top:915px;width:2px;height:36px;background:#d6d6d6;"></div><div class="a" style="left:940px;top:1203px;width:2px;height:36px;background:#d6d6d6;"></div><div class="a" style="left:940px;top:1491px;width:2px;height:36px;background:#d6d6d6;"></div><div class="a" style="left:840px;top:1312px;width:6px;height:36px;background:repeating-linear-gradient(-45deg,#3a8ee6 0 2px,#ffffff 2px 4px)"></div><div class="a" style="left:0;top:0;width:1868px;height:1952px;overflow:hidden"><div class="ln" style="top:269.6px;color:#237893">25</div><div class="ln" style="top:305.6px;color:#237893">26</div><div class="cl" style="top:305.6px"><span class="ck">Class constructor</span><span class="cb">()</span></div><div class="ln" style="top:341.6px;color:#237893">27</div><div class="cl" style="top:341.6px">    <span class="ck">var</span> <span class="cv">$serverNames</span> <span class="ck">:</span> <span class="ct">Collection</span></div><div class="ln" style="top:377.6px;color:#237893">28</div><div class="cl" style="top:377.6px">    <span class="cv">$serverNames</span>:=<span class="ct">New collection</span><span class="cb">(</span>"ollama"; "lmstudio"; "openai"<span class="cb">)</span></div><div class="ln" style="top:413.6px;color:#237893">29</div><div class="ln" style="top:449.6px;color:#237893">30</div><div class="cl" style="top:449.6px">    <span class="ck">var</span> <span class="cv">$settings</span> <span class="ck">:</span> <span class="ct">Object</span></div><div class="ln" style="top:485.6px;color:#237893">31</div><div class="cl" style="top:485.6px">    <span class="cv">$settings</span>:=<span class="ct">cs</span><span class="cp">.AppUtils.me</span><span class="cm">.readSettings</span><span class="cb">()</span></div><div class="ln" style="top:521.6px;color:#237893">32</div><div class="ln" style="top:557.6px;color:#237893">33</div><div class="cl" style="top:557.6px">    <span class="cc">// Language dropdown</span></div><div class="ln" style="top:593.6px;color:#237893">34</div><div class="cl" style="top:593.6px">    <span class="ck">var</span> <span class="cv">$lang</span> <span class="ck">:</span> <span class="ct">Text</span></div><div class="ln" style="top:629.6px;color:#237893">35</div><div class="cl" style="top:629.6px">    <span class="cv">$lang</span>:=<span class="cv">$settings</span><span class="cp">.language</span></div><div class="ln" style="top:665.6px;color:#237893">36</div><div class="cl" style="top:665.6px">    <span class="ck">If</span> <span class="cb">(</span><span class="cv">$lang</span>=""<span class="cb">)</span></div><div class="ln" style="top:701.6px;color:#237893">37</div><div class="cl" style="top:701.6px">        <span class="cv">$lang</span>:="en"</div><div class="ln" style="top:737.6px;color:#237893">38</div><div class="cl" style="top:737.6px">    <span class="ck">End if</span></div><div class="ln" style="top:773.6px;color:#237893">39</div><div class="cl" style="top:773.6px">    <span class="ck">var</span> <span class="cv">$langIdx</span> <span class="ck">:</span> <span class="ct">Integer</span></div><div class="ln" style="top:809.6px;color:#237893">40</div><div class="cl" style="top:809.6px">    <span class="ck">If</span> <span class="cb">(</span><span class="cv">$lang</span>="fr"<span class="cb">)</span></div><div class="ln" style="top:845.6px;color:#237893">41</div><div class="cl" style="top:845.6px">        <span class="cv">$langIdx</span>:=1</div><div class="ln" style="top:881.6px;color:#237893">42</div><div class="cl" style="top:881.6px">    <span class="ck">Else</span></div><div class="ln" style="top:917.6px;color:#237893">43</div><div class="cl" style="top:917.6px">        <span class="cv">$langIdx</span>:=0</div><div class="ln" style="top:953.6px;color:#237893">44</div><div class="cl" style="top:953.6px">    <span class="ck">End if</span></div><div class="ln" style="top:989.6px;color:#237893">45</div><div class="cl" style="top:989.6px">    <span class="ct">This</span><span class="cp">.languageList</span>:=<span class="cb">{</span><span class="cp">values</span><span class="ck">:</span> <span class="cq">[</span>"English"; "Français"<span class="cq">]</span>; <span class="cp">index</span><span class="ck">:</span> <span class="cv">$langIdx</span><span class="cb">}</span></div><div class="ln" style="top:1025.6px;color:#237893">46</div><div class="ln" style="top:1061.6px;color:#237893">47</div><div class="cl" style="top:1061.6px">    <span class="cc">// Embed server dropdown</span></div><div class="ln" style="top:1097.6px;color:#237893">48</div><div class="cl" style="top:1097.6px">    <span class="ck">var</span> <span class="cv">$embedIdx</span> <span class="ck">:</span> <span class="ct">Integer</span></div><div class="ln" style="top:1133.6px;color:#237893">49</div><div class="cl" style="top:1133.6px">    <span class="cv">$embedIdx</span>:=<span class="cv">$serverNames</span><span class="cm">.indexOf</span><span class="cb">(</span><span class="cv">$settings</span><span class="cp">.embedding.server</span><span class="cb">)</span></div><div class="ln" style="top:1169.6px;color:#237893">50</div><div class="cl" style="top:1169.6px">    <span class="ck">If</span> <span class="cb">(</span><span class="cv">$embedIdx</span>&lt;0<span class="cb">)</span></div><div class="ln" style="top:1205.6px;color:#237893">51</div><div class="cl" style="top:1205.6px">        <span class="cv">$embedIdx</span>:=0</div><div class="ln" style="top:1241.6px;color:#237893">52</div><div class="cl" style="top:1241.6px">    <span class="ck">End if</span></div><div class="ln" style="top:1277.6px;color:#237893">53</div><div class="cl" style="top:1277.6px">    <span class="ct">This</span><span class="cp">.embedServerList</span>:=<span class="cb">{</span><span class="cp">values</span><span class="ck">:</span> <span class="cv">$serverNames</span>; <span class="cp">index</span><span class="ck">:</span> <span class="cv">$embedIdx</span><span class="cb">}</span></div><div class="ln" style="top:1313.6px;color:#0b216f">54</div><div class="ln" style="top:1349.6px;color:#237893">55</div><div class="cl" style="top:1349.6px">    <span class="cc">// Chat server dropdown</span></div><div class="ln" style="top:1385.6px;color:#237893">56</div><div class="cl" style="top:1385.6px">    <span class="ck">var</span> <span class="cv">$chatIdx</span> <span class="ck">:</span> <span class="ct">Integer</span></div><div class="ln" style="top:1421.6px;color:#237893">57</div><div class="cl" style="top:1421.6px">    <span class="cv">$chatIdx</span>:=<span class="cv">$serverNames</span><span class="cm">.indexOf</span><span class="cb">(</span><span class="cv">$settings</span><span class="cp">.chat.server</span><span class="cb">)</span></div><div class="ln" style="top:1457.6px;color:#237893">58</div><div class="cl" style="top:1457.6px">    <span class="ck">If</span> <span class="cb">(</span><span class="cv">$chatIdx</span>&lt;0<span class="cb">)</span></div><div class="ln" style="top:1493.6px;color:#237893">59</div><div class="cl" style="top:1493.6px">        <span class="cv">$chatIdx</span>:=0</div><div class="ln" style="top:1529.6px;color:#237893">60</div><div class="cl" style="top:1529.6px">    <span class="ck">End if</span></div><div class="ln" style="top:1565.6px;color:#237893">61</div><div class="cl" style="top:1565.6px">    <span class="ct">This</span><span class="cp">.chatServerList</span>:=<span class="cb">{</span><span class="cp">values</span><span class="ck">:</span> <span class="cv">$serverNames</span>; <span class="cp">index</span><span class="ck">:</span> <span class="cv">$chatIdx</span><span class="cb">}</span></div><div class="ln" style="top:1601.6px;color:#237893">62</div><div class="ln" style="top:1637.6px;color:#237893">63</div><div class="cl" style="top:1637.6px">    <span class="cc">// Load models for each server</span></div><div class="ln" style="top:1673.6px;color:#237893">64</div><div class="cl" style="top:1673.6px">    <span class="ct">This</span><span class="cp">.embedModelList</span>:=<span class="cb">{</span><span class="cp">values</span><span class="ck">:</span> <span class="ct">New collection</span>; <span class="cp">index</span><span class="ck">:</span> 0<span class="cb">}</span></div><div class="ln" style="top:1709.6px;color:#237893">65</div><div class="cl" style="top:1709.6px">    <span class="ct">This</span><span class="cp">.chatModelList</span>:=<span class="cb">{</span><span class="cp">values</span><span class="ck">:</span> <span class="ct">New collection</span>; <span class="cp">index</span><span class="ck">:</span> 0<span class="cb">}</span></div><div class="ln" style="top:1745.6px;color:#237893">66</div><div class="ln" style="top:1781.6px;color:#237893">67</div><div class="cl" style="top:1781.6px">    <span class="ct">This</span><span class="cm">._loadModels</span><span class="cb">(</span>"embed"; <span class="cv">$settings</span><span class="cp">.embedding.server</span>; <span class="cv">$settings</span><span class="cp">.embedding.model</span><span class="cb">)</span></div><div class="ln" style="top:1817.6px;color:#237893">68</div><div class="cl" style="top:1817.6px">    <span class="ct">This</span><span class="cm">._loadModels</span><span class="cb">(</span>"chat"; <span class="cv">$settings</span><span class="cp">.chat.server</span>; <span class="cv">$settings</span><span class="cp">.chat.model</span><span class="cb">)</span></div><div class="ln" style="top:1853.6px;color:#237893">69</div><div class="ln" style="top:1889.6px;color:#237893">70</div><div class="cl" style="top:1889.6px">    <span class="cc">// API key status</span></div><div class="ln" style="top:1925.6px;color:#237893">71</div><div class="cl" style="top:1925.6px">    <span class="ct">This</span><span class="cm">._updateApiKeyStatus</span><span class="cb">()</span></div></div><div class="a" style="left:1734px;top:262px;width:134px;height:1690px;background:rgba(255,255,255,0.86)"></div><div class="a" style="left:1722px;top:262px;width:12px;height:1690px;background:linear-gradient(90deg,rgba(0,0,0,0),rgba(0,0,0,0.035))"></div><div class="a" style="left:1868px;top:262px;width:28px;height:1690px;background:#fbfbfb;"></div><div class="a" style="left:1867px;top:262px;width:1px;height:1690px;background:#ececec;"></div><div class="a" style="left:1734px;top:356px;width:134px;height:2.5px;background:#b5b5b5;"></div><div class="a" style="left:1736px;top:359px;width:130px;height:20px;background:rgba(255,255,255,0.35)"></div><div class="a" style="left:1734px;top:564px;width:134px;height:2.5px;background:#b5b5b5;"></div><div class="a" style="left:1736px;top:567px;width:130px;height:20px;background:rgba(255,255,255,0.35)"></div><div class="a" style="left:1734px;top:647px;width:134px;height:2.5px;background:#b5b5b5;"></div><div class="a" style="left:1736px;top:650px;width:130px;height:20px;background:rgba(255,255,255,0.35)"></div><div class="a" style="left:1734px;top:816px;width:134px;height:2.5px;background:#b5b5b5;"></div><div class="a" style="left:1736px;top:819px;width:130px;height:20px;background:rgba(255,255,255,0.35)"></div><div class="a" style="left:1734px;top:860px;width:134px;height:2.5px;background:#b5b5b5;"></div><div class="a" style="left:1736px;top:863px;width:130px;height:20px;background:rgba(255,255,255,0.35)"></div><div class="a" style="left:1734px;top:972px;width:134px;height:2.5px;background:#b5b5b5;"></div><div class="a" style="left:1736px;top:975px;width:130px;height:20px;background:rgba(255,255,255,0.35)"></div><div class="a" style="left:1734px;top:1060px;width:134px;height:2.5px;background:#b5b5b5;"></div><div class="a" style="left:1736px;top:1063px;width:130px;height:20px;background:rgba(255,255,255,0.35)"></div><div class="a" style="left:1734px;top:1108px;width:134px;height:2.5px;background:#b5b5b5;"></div><div class="a" style="left:1736px;top:1111px;width:130px;height:20px;background:rgba(255,255,255,0.35)"></div><div class="a" style="left:1734px;top:1156px;width:134px;height:2.5px;background:#b5b5b5;"></div><div class="a" style="left:1736px;top:1159px;width:130px;height:20px;background:rgba(255,255,255,0.35)"></div><div class="a" style="left:1734px;top:1228px;width:134px;height:2.5px;background:#b5b5b5;"></div><div class="a" style="left:1736px;top:1231px;width:130px;height:20px;background:rgba(255,255,255,0.35)"></div><div class="a" style="left:1734px;top:1300px;width:134px;height:2.5px;background:#b5b5b5;"></div><div class="a" style="left:1736px;top:1303px;width:130px;height:20px;background:rgba(255,255,255,0.35)"></div><div class="a" style="left:1734px;top:1368px;width:134px;height:2.5px;background:#b5b5b5;"></div><div class="a" style="left:1736px;top:1371px;width:130px;height:20px;background:rgba(255,255,255,0.35)"></div><div class="a" style="left:1734px;top:1504px;width:134px;height:2.5px;background:#b5b5b5;"></div><div class="a" style="left:1736px;top:1507px;width:130px;height:20px;background:rgba(255,255,255,0.35)"></div><div class="a" style="left:1734px;top:1536px;width:134px;height:2.5px;background:#b5b5b5;"></div><div class="a" style="left:1736px;top:1539px;width:130px;height:20px;background:rgba(255,255,255,0.35)"></div><div class="a" style="left:1742px;top:267px;width:80px;height:1.7px;background:#bcbcbc"></div><div class="a" style="left:1742px;top:271px;width:44px;height:1.7px;background:#bcbcbc"></div><div class="a" style="left:1742px;top:275px;width:100px;height:1.7px;background:#bcbcbc"></div><div class="a" style="left:1742px;top:279px;width:104px;height:1.7px;background:#bcbcbc"></div><div class="a" style="left:1742px;top:283px;width:96px;height:1.7px;background:#bcbcbc"></div><div class="a" style="left:1742px;top:291px;width:52px;height:1.7px;background:#bcbcbc"></div><div class="a" style="left:1742px;top:295px;width:16px;height:1.7px;background:#86bb7d"></div><div class="a" style="left:1760px;top:295px;width:32px;height:1.7px;background:#c9b9ad"></div><div class="a" style="left:1792px;top:295px;width:6px;height:1.7px;background:#838383"></div><div class="a" style="left:1798px;top:295px;width:12px;height:1.7px;background:#86bb7d"></div><div class="a" style="left:1742px;top:299px;width:16px;height:1.7px;background:#86bb7d"></div><div class="a" style="left:1760px;top:299px;width:30px;height:1.7px;background:#c9b9ad"></div><div class="a" style="left:1790px;top:299px;width:6px;height:1.7px;background:#838383"></div><div class="a" style="left:1796px;top:299px;width:12px;height:1.7px;background:#86bb7d"></div><div class="a" style="left:1742px;top:307px;width:48px;height:1.7px;background:#bcbcbc"></div><div class="a" style="left:1742px;top:311px;width:16px;height:1.7px;background:#86bb7d"></div><div class="a" style="left:1760px;top:311px;width:28px;height:1.7px;background:#c9b9ad"></div><div class="a" style="left:1788px;top:311px;width:6px;height:1.7px;background:#838383"></div><div class="a" style="left:1794px;top:311px;width:12px;height:1.7px;background:#86bb7d"></div><div class="a" style="left:1742px;top:315px;width:16px;height:1.7px;background:#86bb7d"></div><div class="a" style="left:1760px;top:315px;width:26px;height:1.7px;background:#c9b9ad"></div><div class="a" style="left:1786px;top:315px;width:6px;height:1.7px;background:#838383"></div><div class="a" style="left:1792px;top:315px;width:12px;height:1.7px;background:#86bb7d"></div><div class="a" style="left:1742px;top:323px;width:56px;height:1.7px;background:#bcbcbc"></div><div class="a" style="left:1742px;top:327px;width:16px;height:1.7px;background:#86bb7d"></div><div class="a" style="left:1760px;top:327px;width:24px;height:1.7px;background:#c9b9ad"></div><div class="a" style="left:1784px;top:327px;width:6px;height:1.7px;background:#838383"></div><div class="a" style="left:1790px;top:327px;width:12px;height:1.7px;background:#86bb7d"></div><div class="a" style="left:1742px;top:335px;width:54px;height:1.7px;background:#bcbcbc"></div><div class="a" style="left:1742px;top:339px;width:16px;height:1.7px;background:#86bb7d"></div><div class="a" style="left:1760px;top:339px;width:22px;height:1.7px;background:#c9b9ad"></div><div class="a" style="left:1782px;top:339px;width:6px;height:1.7px;background:#838383"></div><div class="a" style="left:1788px;top:339px;width:8px;height:1.7px;background:#86bb7d"></div><div class="a" style="left:1742px;top:347px;width:48px;height:1.7px;background:#bcbcbc"></div><div class="a" style="left:1742px;top:351px;width:16px;height:1.7px;background:#86bb7d"></div><div class="a" style="left:1760px;top:351px;width:20px;height:1.7px;background:#c9b9ad"></div><div class="a" style="left:1780px;top:351px;width:6px;height:1.7px;background:#838383"></div><div class="a" style="left:1786px;top:351px;width:8px;height:1.7px;background:#86bb7d"></div><div class="a" style="left:1746px;top:361px;width:40px;height:1.7px;background:#86bb7d;opacity:0.4"></div><div class="a" style="left:1786px;top:361px;width:28px;height:1.7px;background:#8e9ff3;opacity:0.4"></div><div class="a" style="left:1814px;top:361px;width:20px;height:1.7px;background:#838383;opacity:0.4"></div><div class="a" style="left:1750px;top:365px;width:24px;height:1.7px;background:#86bb7d;opacity:0.4"></div><div class="a" style="left:1762px;top:369px;width:8px;height:1.7px;background:#86bb7d;opacity:0.45"></div><div class="a" style="left:1770px;top:369px;width:34px;height:1.7px;background:#c9b9ad;opacity:0.45"></div><div class="a" style="left:1804px;top:369px;width:4px;height:1.7px;background:#838383;opacity:0.45"></div><div class="a" style="left:1808px;top:369px;width:8px;height:1.7px;background:#c9b9ad;opacity:0.45"></div><div class="a" style="left:1818px;top:369px;width:16px;height:1.7px;background:#8e9ff3;opacity:0.45"></div><div class="a" style="left:1834px;top:369px;width:28px;height:1.7px;background:#838383;opacity:0.45"></div><div class="a" style="left:1862px;top:369px;width:6px;height:1.7px;background:#c9b9ad;opacity:0.45"></div><div class="a" style="left:1750px;top:373px;width:74px;height:1.7px;background:#bcbcbc;opacity:0.45"></div><div class="a" style="left:1750px;top:377px;width:8px;height:1.7px;background:#86bb7d;opacity:0.45"></div><div class="a" style="left:1758px;top:377px;width:28px;height:1.7px;background:#c9b9ad;opacity:0.45"></div><div class="a" style="left:1786px;top:377px;width:4px;height:1.7px;background:#838383;opacity:0.45"></div><div class="a" style="left:1790px;top:377px;width:12px;height:1.7px;background:#c9b9ad;opacity:0.45"></div><div class="a" style="left:1804px;top:377px;width:16px;height:1.7px;background:#8e9ff3;opacity:0.45"></div><div class="a" style="left:1820px;top:377px;width:22px;height:1.7px;background:#838383;opacity:0.45"></div><div class="a" style="left:1842px;top:377px;width:8px;height:1.7px;background:#c9b9ad;opacity:0.45"></div><div class="a" style="left:1750px;top:381px;width:60px;height:1.7px;background:#bcbcbc"></div><div class="a" style="left:1750px;top:385px;width:12px;height:1.7px;background:#5f8058"></div><div class="a" style="left:1754px;top:389px;width:8px;height:1.7px;background:#86bb7d"></div><div class="a" style="left:1762px;top:389px;width:36px;height:1.7px;background:#c9b9ad"></div><div class="a" style="left:1798px;top:389px;width:4px;height:1.7px;background:#838383"></div><div class="a" style="left:1802px;top:389px;width:10px;height:1.7px;background:#c9b9ad"></div><div class="a" style="left:1814px;top:389px;width:26px;height:1.7px;background:#8e9ff3"></div><div class="a" style="left:1840px;top:389px;width:4px;height:1.7px;background:#838383"></div><div class="a" style="left:1844px;top:389px;width:12px;height:1.7px;background:#c9b9ad"></div><div class="a" style="left:1754px;top:393px;width:14px;height:1.7px;background:#8e9ff3"></div><div class="a" style="left:1768px;top:393px;width:4px;height:1.7px;background:#838383"></div><div class="a" style="left:1772px;top:393px;width:4px;height:1.7px;background:#86bb7d"></div><div class="a" style="left:1776px;top:393px;width:34px;height:1.7px;background:#c9b9ad"></div><div class="a" style="left:1810px;top:393px;width:16px;height:1.7px;background:#86bb7d"></div><div class="a" style="left:1826px;top:393px;width:8px;height:1.7px;background:#838383"></div><div class="a" style="left:1754px;top:397px;width:48px;height:1.7px;background:#bcbcbc"></div><div class="a" style="left:1754px;top:401px;width:12px;height:1.7px;background:#8e9ff3"></div><div class="a" style="left:1766px;top:401px;width:4px;height:1.7px;background:#838383"></div><div class="a" style="left:1770px;top:401px;width:4px;height:1.7px;background:#86bb7d"></div><div class="a" style="left:1774px;top:401px;width:38px;height:1.7px;background:#c9b9ad"></div><div class="a" style="left:1812px;top:401px;width:8px;height:1.7px;background:#86bb7d"></div><div class="a" style="left:1820px;top:401px;width:6px;height:1.7px;background:#838383"></div><div class="a" style="left:1750px;top:405px;width:8px;height:1.7px;background:#86bb7d"></div><div class="a" style="left:1758px;top:405px;width:28px;height:1.7px;background:#c9b9ad"></div><div class="a" style="left:1786px;top:405px;width:4px;height:1.7px;background:#838383"></div><div class="a" style="left:1790px;top:405px;width:12px;height:1.7px;background:#c9b9ad"></div><div class="a" style="left:1804px;top:405px;width:14px;height:1.7px;background:#8e9ff3"></div><div class="a" style="left:1818px;top:405px;width:22px;height:1.7px;background:#838383"></div><div class="a" style="left:1840px;top:405px;width:20px;height:1.7px;background:#c9b9ad"></div><div class="a" style="left:1754px;top:409px;width:20px;height:1.7px;background:#8e9ff3"></div><div class="a" style="left:1774px;top:409px;width:4px;height:1.7px;background:#838383"></div><div class="a" style="left:1778px;top:409px;width:4px;height:1.7px;background:#86bb7d"></div><div class="a" style="left:1782px;top:409px;width:22px;height:1.7px;background:#c9b9ad"></div><div class="a" style="left:1804px;top:409px;width:8px;height:1.7px;background:#86bb7d"></div><div class="a" style="left:1812px;top:409px;width:10px;height:1.7px;background:#838383"></div><div class="a" style="left:1750px;top:413px;width:6px;height:1.7px;background:#5f8058"></div><div class="a" style="left:1758px;top:413px;width:14px;height:1.7px;background:#8e9ff3"></div><div class="a" style="left:1774px;top:413px;width:2px;height:1.7px;background:#838383"></div><div class="a" style="left:1778px;top:413px;width:8px;height:1.7px;background:#86bb7d"></div><div class="a" style="left:1750px;top:421px;width:4px;height:1.7px;background:#5f8058"></div><div class="a" style="left:1756px;top:421px;width:22px;height:1.7px;background:#8e9ff3"></div><div class="a" style="left:1778px;top:421px;width:10px;height:1.7px;background:#838383"></div><div class="a" style="left:1750px;top:425px;width:24px;height:1.7px;background:#8e9ff3"></div><div class="a" style="left:1774px;top:425px;width:4px;height:1.7px;background:#838383"></div><div class="a" style="left:1778px;top:425px;width:4px;height:1.7px;background:#86bb7d"></div><div class="a" style="left:1782px;top:425px;width:14px;height:1.7px;background:#c9b9ad"></div><div class="a" style="left:1796px;top:425px;width:20px;height:1.7px;background:#86bb7d"></div><div class="a" style="left:1816px;top:425px;width:10px;height:1.7px;background:#838383"></div><div class="a" style="left:1750px;top:429px;width:6px;height:1.7px;background:#5f8058"></div><div class="a" style="left:1758px;top:429px;width:20px;height:1.7px;background:#8e9ff3"></div><div class="a" style="left:1780px;top:429px;width:2px;height:1.7px;background:#838383"></div><div class="a" style="left:1784px;top:429px;width:8px;height:1.7px;background:#86bb7d"></div><div class="a" style="left:1758px;top:433px;width:8px;height:1.7px;background:#86bb7d"></div><div class="a" style="left:1766px;top:433px;width:28px;height:1.7px;background:#c9b9ad"></div><div class="a" style="left:1794px;top:433px;width:4px;height:1.7px;background:#838383"></div><div class="a" style="left:1798px;top:433px;width:4px;height:1.7px;background:#86bb7d"></div><div class="a" style="left:1802px;top:433px;width:24px;height:1.7px;background:#c9b9ad"></div><div class="a" style="left:1826px;top:433px;width:18px;height:1.7px;background:#838383"></div><div class="a" style="left:1844px;top:433px;width:10px;height:1.7px;background:#8e9ff3"></div><div class="a" style="left:1762px;top:441px;width:6px;height:1.7px;background:#5f8058"></div><div class="a" style="left:1770px;top:441px;width:22px;height:1.7px;background:#8e9ff3"></div><div class="a" style="left:1794px;top:441px;width:2px;height:1.7px;background:#838383"></div><div class="a" style="left:1798px;top:441px;width:20px;height:1.7px;background:#86bb7d"></div><div class="a" style="left:1750px;top:445px;width:62px;height:1.7px;background:#bcbcbc"></div><div class="a" style="left:1754px;top:449px;width:82px;height:1.7px;background:#bcbcbc"></div><div class="a" style="left:1762px;top:453px;width:6px;height:1.7px;background:#5f8058"></div><div class="a" style="left:1770px;top:453px;width:26px;height:1.7px;background:#8e9ff3"></div><div class="a" style="left:1798px;top:453px;width:2px;height:1.7px;background:#838383"></div><div class="a" style="left:1802px;top:453px;width:20px;height:1.7px;background:#86bb7d"></div><div class="a" style="left:1758px;top:457px;width:6px;height:1.7px;background:#5f8058"></div><div class="a" style="left:1766px;top:457px;width:16px;height:1.7px;background:#8e9ff3"></div><div class="a" style="left:1784px;top:457px;width:2px;height:1.7px;background:#838383"></div><div class="a" style="left:1788px;top:457px;width:12px;height:1.7px;background:#86bb7d"></div><div class="a" style="left:1754px;top:461px;width:4px;height:1.7px;background:#5f8058"></div><div class="a" style="left:1760px;top:461px;width:20px;height:1.7px;background:#8e9ff3"></div><div class="a" style="left:1780px;top:461px;width:12px;height:1.7px;background:#838383"></div><div class="a" style="left:1758px;top:465px;width:8px;height:1.7px;background:#86bb7d"></div><div class="a" style="left:1766px;top:465px;width:28px;height:1.7px;background:#c9b9ad"></div><div class="a" style="left:1794px;top:465px;width:4px;height:1.7px;background:#838383"></div><div class="a" style="left:1798px;top:465px;width:4px;height:1.7px;background:#86bb7d"></div><div class="a" style="left:1802px;top:465px;width:24px;height:1.7px;background:#c9b9ad"></div><div class="a" style="left:1826px;top:465px;width:8px;height:1.7px;background:#838383"></div><div class="a" style="left:1834px;top:465px;width:20px;height:1.7px;background:#8e9ff3"></div><div class="a" style="left:1754px;top:477px;width:6px;height:1.7px;background:#5f8058"></div><div class="a" style="left:1762px;top:477px;width:24px;height:1.7px;background:#8e9ff3"></div><div class="a" style="left:1788px;top:477px;width:2px;height:1.7px;background:#838383"></div><div class="a" style="left:1792px;top:477px;width:12px;height:1.7px;background:#86bb7d"></div><div class="a" style="left:1762px;top:481px;width:16px;height:1.7px;background:#8e9ff3"></div><div class="a" style="left:1778px;top:481px;width:4px;height:1.7px;background:#838383"></div><div class="a" style="left:1782px;top:481px;width:4px;height:1.7px;background:#86bb7d"></div><div class="a" style="left:1786px;top:481px;width:40px;height:1.7px;background:#c9b9ad"></div><div class="a" style="left:1826px;top:481px;width:10px;height:1.7px;background:#86bb7d"></div><div class="a" style="left:1836px;top:481px;width:6px;height:1.7px;background:#838383"></div><div class="a" style="left:1750px;top:485px;width:18px;height:1.7px;background:#8e9ff3"></div><div class="a" style="left:1768px;top:485px;width:4px;height:1.7px;background:#838383"></div><div class="a" style="left:1772px;top:485px;width:4px;height:1.7px;background:#86bb7d"></div><div class="a" style="left:1776px;top:485px;width:34px;height:1.7px;background:#c9b9ad"></div><div class="a" style="left:1810px;top:485px;width:8px;height:1.7px;background:#86bb7d"></div><div class="a" style="left:1818px;top:485px;width:4px;height:1.7px;background:#838383"></div><div class="a" style="left:1762px;top:489px;width:6px;height:1.7px;background:#5f8058"></div><div class="a" style="left:1770px;top:489px;width:12px;height:1.7px;background:#8e9ff3"></div><div class="a" style="left:1784px;top:489px;width:2px;height:1.7px;background:#838383"></div><div class="a" style="left:1788px;top:489px;width:10px;height:1.7px;background:#86bb7d"></div><div class="a" style="left:1750px;top:493px;width:52px;height:1.7px;background:#bcbcbc"></div><div class="a" style="left:1758px;top:497px;width:4px;height:1.7px;background:#5f8058"></div><div class="a" style="left:1764px;top:497px;width:38px;height:1.7px;background:#8e9ff3"></div><div class="a" style="left:1802px;top:497px;width:12px;height:1.7px;background:#838383"></div><div class="a" style="left:1750px;top:501px;width:8px;height:1.7px;background:#86bb7d"></div><div class="a" style="left:1758px;top:501px;width:16px;height:1.7px;background:#c9b9ad"></div><div class="a" style="left:1774px;top:501px;width:4px;height:1.7px;background:#838383"></div><div class="a" style="left:1778px;top:501px;width:12px;height:1.7px;background:#c9b9ad"></div><div class="a" style="left:1792px;top:501px;width:22px;height:1.7px;background:#8e9ff3"></div><div class="a" style="left:1814px;top:501px;width:26px;height:1.7px;background:#838383"></div><div class="a" style="left:1840px;top:501px;width:26px;height:1.7px;background:#c9b9ad"></div><div class="a" style="left:1750px;top:505px;width:8px;height:1.7px;background:#86bb7d"></div><div class="a" style="left:1758px;top:505px;width:18px;height:1.7px;background:#c9b9ad"></div><div class="a" style="left:1776px;top:505px;width:4px;height:1.7px;background:#838383"></div><div class="a" style="left:1780px;top:505px;width:12px;height:1.7px;background:#c9b9ad"></div><div class="a" style="left:1794px;top:505px;width:14px;height:1.7px;background:#8e9ff3"></div><div class="a" style="left:1808px;top:505px;width:26px;height:1.7px;background:#838383"></div><div class="a" style="left:1834px;top:505px;width:26px;height:1.7px;background:#c9b9ad"></div><div class="a" style="left:1750px;top:509px;width:82px;height:1.7px;background:#bcbcbc"></div><div class="a" style="left:1750px;top:513px;width:12px;height:1.7px;background:#5f8058"></div><div class="a" style="left:1762px;top:517px;width:8px;height:1.7px;background:#86bb7d"></div><div class="a" style="left:1770px;top:517px;width:26px;height:1.7px;background:#c9b9ad"></div><div class="a" style="left:1796px;top:517px;width:4px;height:1.7px;background:#838383"></div><div class="a" style="left:1800px;top:517px;width:4px;height:1.7px;background:#86bb7d"></div><div class="a" style="left:1804px;top:517px;width:24px;height:1.7px;background:#c9b9ad"></div><div class="a" style="left:1828px;top:517px;width:20px;height:1.7px;background:#838383"></div><div class="a" style="left:1848px;top:517px;width:8px;height:1.7px;background:#8e9ff3"></div><div class="a" style="left:1750px;top:521px;width:4px;height:1.7px;background:#5f8058"></div><div class="a" style="left:1756px;top:521px;width:28px;height:1.7px;background:#8e9ff3"></div><div class="a" style="left:1784px;top:521px;width:10px;height:1.7px;background:#838383"></div><div class="a" style="left:1750px;top:525px;width:50px;height:1.7px;background:#bcbcbc"></div><div class="a" style="left:1758px;top:529px;width:4px;height:1.7px;background:#5f8058"></div><div class="a" style="left:1764px;top:529px;width:28px;height:1.7px;background:#8e9ff3"></div><div class="a" style="left:1792px;top:529px;width:12px;height:1.7px;background:#838383"></div><div class="a" style="left:1762px;top:533px;width:8px;height:1.7px;background:#5f8058"></div><div class="a" style="left:1750px;top:537px;width:14px;height:1.7px;background:#8e9ff3"></div><div class="a" style="left:1764px;top:537px;width:4px;height:1.7px;background:#838383"></div><div class="a" style="left:1768px;top:537px;width:4px;height:1.7px;background:#86bb7d"></div><div class="a" style="left:1772px;top:537px;width:26px;height:1.7px;background:#c9b9ad"></div><div class="a" style="left:1798px;top:537px;width:8px;height:1.7px;background:#86bb7d"></div><div class="a" style="left:1806px;top:537px;width:6px;height:1.7px;background:#838383"></div><div class="a" style="left:1750px;top:541px;width:8px;height:1.7px;background:#86bb7d"></div><div class="a" style="left:1758px;top:541px;width:34px;height:1.7px;background:#c9b9ad"></div><div class="a" style="left:1792px;top:541px;width:4px;height:1.7px;background:#838383"></div><div class="a" style="left:1796px;top:541px;width:16px;height:1.7px;background:#c9b9ad"></div><div class="a" style="left:1814px;top:541px;width:26px;height:1.7px;background:#8e9ff3"></div><div class="a" style="left:1840px;top:541px;width:12px;height:1.7px;background:#838383"></div><div class="a" style="left:1852px;top:541px;width:8px;height:1.7px;background:#c9b9ad"></div><div class="a" style="left:1750px;top:545px;width:4px;height:1.7px;background:#5f8058"></div><div class="a" style="left:1756px;top:545px;width:22px;height:1.7px;background:#8e9ff3"></div><div class="a" style="left:1778px;top:545px;width:12px;height:1.7px;background:#838383"></div><div class="a" style="left:1758px;top:549px;width:4px;height:1.7px;background:#5f8058"></div><div class="a" style="left:1764px;top:549px;width:30px;height:1.7px;background:#8e9ff3"></div><div class="a" style="left:1794px;top:549px;width:10px;height:1.7px;background:#838383"></div><div class="a" style="left:1758px;top:553px;width:20px;height:1.7px;background:#8e9ff3"></div><div class="a" style="left:1778px;top:553px;width:4px;height:1.7px;background:#838383"></div><div class="a" style="left:1782px;top:553px;width:4px;height:1.7px;background:#86bb7d"></div><div class="a" style="left:1786px;top:553px;width:18px;height:1.7px;background:#c9b9ad"></div><div class="a" style="left:1804px;top:553px;width:20px;height:1.7px;background:#86bb7d"></div><div class="a" style="left:1824px;top:553px;width:16px;height:1.7px;background:#838383"></div><div class="a" style="left:1754px;top:557px;width:8px;height:1.7px;background:#86bb7d"></div><div class="a" style="left:1762px;top:557px;width:26px;height:1.7px;background:#c9b9ad"></div><div class="a" style="left:1788px;top:557px;width:4px;height:1.7px;background:#838383"></div><div class="a" style="left:1792px;top:557px;width:4px;height:1.7px;background:#86bb7d"></div><div class="a" style="left:1796px;top:557px;width:24px;height:1.7px;background:#c9b9ad"></div><div class="a" style="left:1820px;top:557px;width:10px;height:1.7px;background:#838383"></div><div class="a" style="left:1830px;top:557px;width:18px;height:1.7px;background:#8e9ff3"></div><div class="a" style="left:1746px;top:569px;width:40px;height:1.7px;background:#86bb7d;opacity:0.4"></div><div class="a" style="left:1786px;top:569px;width:28px;height:1.7px;background:#8e9ff3;opacity:0.4"></div><div class="a" style="left:1814px;top:569px;width:20px;height:1.7px;background:#838383;opacity:0.4"></div><div class="a" style="left:1750px;top:573px;width:24px;height:1.7px;background:#86bb7d;opacity:0.4"></div><div class="a" style="left:1750px;top:577px;width:8px;height:1.7px;background:#86bb7d;opacity:0.45"></div><div class="a" style="left:1758px;top:577px;width:16px;height:1.7px;background:#c9b9ad;opacity:0.45"></div><div class="a" style="left:1774px;top:577px;width:4px;height:1.7px;background:#838383;opacity:0.45"></div><div class="a" style="left:1778px;top:577px;width:16px;height:1.7px;background:#c9b9ad;opacity:0.45"></div><div class="a" style="left:1796px;top:577px;width:14px;height:1.7px;background:#8e9ff3;opacity:0.45"></div><div class="a" style="left:1810px;top:577px;width:12px;height:1.7px;background:#838383;opacity:0.45"></div><div class="a" style="left:1822px;top:577px;width:18px;height:1.7px;background:#c9b9ad;opacity:0.45"></div><div class="a" style="left:1754px;top:585px;width:14px;height:1.7px;background:#5f8058;opacity:0.45"></div><div class="a" style="left:1762px;top:589px;width:4px;height:1.7px;background:#5f8058"></div><div class="a" style="left:1768px;top:589px;width:38px;height:1.7px;background:#8e9ff3"></div><div class="a" style="left:1806px;top:589px;width:12px;height:1.7px;background:#838383"></div><div class="a" style="left:1750px;top:593px;width:12px;height:1.7px;background:#5f8058"></div><div class="a" style="left:1750px;top:597px;width:4px;height:1.7px;background:#5f8058"></div><div class="a" style="left:1756px;top:597px;width:24px;height:1.7px;background:#8e9ff3"></div><div class="a" style="left:1780px;top:597px;width:12px;height:1.7px;background:#838383"></div><div class="a" style="left:1750px;top:601px;width:4px;height:1.7px;background:#5f8058"></div><div class="a" style="left:1756px;top:601px;width:28px;height:1.7px;background:#8e9ff3"></div><div class="a" style="left:1784px;top:601px;width:10px;height:1.7px;background:#838383"></div><div class="a" style="left:1754px;top:605px;width:6px;height:1.7px;background:#5f8058"></div><div class="a" style="left:1762px;top:605px;width:16px;height:1.7px;background:#8e9ff3"></div><div class="a" style="left:1780px;top:605px;width:2px;height:1.7px;background:#838383"></div><div class="a" style="left:1784px;top:605px;width:20px;height:1.7px;background:#86bb7d"></div><div class="a" style="left:1762px;top:613px;width:82px;height:1.7px;background:#bcbcbc"></div><div class="a" style="left:1754px;top:617px;width:6px;height:1.7px;background:#5f8058"></div><div class="a" style="left:1762px;top:617px;width:26px;height:1.7px;background:#8e9ff3"></div><div class="a" style="left:1790px;top:617px;width:2px;height:1.7px;background:#838383"></div><div class="a" style="left:1794px;top:617px;width:12px;height:1.7px;background:#86bb7d"></div><div class="a" style="left:1750px;top:621px;width:16px;height:1.7px;background:#5f8058"></div><div class="a" style="left:1750px;top:625px;width:6px;height:1.7px;background:#5f8058"></div><div class="a" style="left:1758px;top:625px;width:22px;height:1.7px;background:#8e9ff3"></div><div class="a" style="left:1782px;top:625px;width:2px;height:1.7px;background:#838383"></div><div class="a" style="left:1786px;top:625px;width:16px;height:1.7px;background:#86bb7d"></div><div class="a" style="left:1750px;top:629px;width:18px;height:1.7px;background:#8e9ff3"></div><div class="a" style="left:1768px;top:629px;width:4px;height:1.7px;background:#838383"></div><div class="a" style="left:1772px;top:629px;width:4px;height:1.7px;background:#86bb7d"></div><div class="a" style="left:1776px;top:629px;width:14px;height:1.7px;background:#c9b9ad"></div><div class="a" style="left:1790px;top:629px;width:20px;height:1.7px;background:#86bb7d"></div><div class="a" style="left:1810px;top:629px;width:14px;height:1.7px;background:#838383"></div><div class="a" style="left:1762px;top:633px;width:8px;height:1.7px;background:#86bb7d"></div><div class="a" style="left:1770px;top:633px;width:36px;height:1.7px;background:#c9b9ad"></div><div class="a" style="left:1806px;top:633px;width:4px;height:1.7px;background:#838383"></div><div class="a" style="left:1810px;top:633px;width:6px;height:1.7px;background:#c9b9ad"></div><div class="a" style="left:1818px;top:633px;width:24px;height:1.7px;background:#8e9ff3"></div><div class="a" style="left:1842px;top:633px;width:20px;height:1.7px;background:#838383"></div><div class="a" style="left:1862px;top:633px;width:6px;height:1.7px;background:#c9b9ad"></div><div class="a" style="left:1758px;top:637px;width:8px;height:1.7px;background:#86bb7d"></div><div class="a" style="left:1766px;top:637px;width:36px;height:1.7px;background:#c9b9ad"></div><div class="a" style="left:1802px;top:637px;width:4px;height:1.7px;background:#838383"></div><div class="a" style="left:1806px;top:637px;width:8px;height:1.7px;background:#c9b9ad"></div><div class="a" style="left:1816px;top:637px;width:14px;height:1.7px;background:#8e9ff3"></div><div class="a" style="left:1830px;top:637px;width:26px;height:1.7px;background:#838383"></div><div class="a" style="left:1856px;top:637px;width:12px;height:1.7px;background:#c9b9ad"></div><div class="a" style="left:1758px;top:641px;width:8px;height:1.7px;background:#86bb7d"></div><div class="a" style="left:1766px;top:641px;width:24px;height:1.7px;background:#c9b9ad"></div><div class="a" style="left:1790px;top:641px;width:4px;height:1.7px;background:#838383"></div><div class="a" style="left:1794px;top:641px;width:4px;height:1.7px;background:#86bb7d"></div><div class="a" style="left:1798px;top:641px;width:24px;height:1.7px;background:#c9b9ad"></div><div class="a" style="left:1822px;top:641px;width:16px;height:1.7px;background:#838383"></div><div class="a" style="left:1838px;top:641px;width:18px;height:1.7px;background:#8e9ff3"></div><div class="a" style="left:1746px;top:652px;width:40px;height:1.7px;background:#86bb7d;opacity:0.4"></div><div class="a" style="left:1786px;top:652px;width:28px;height:1.7px;background:#8e9ff3;opacity:0.4"></div><div class="a" style="left:1814px;top:652px;width:20px;height:1.7px;background:#838383;opacity:0.4"></div><div class="a" style="left:1750px;top:656px;width:24px;height:1.7px;background:#86bb7d;opacity:0.4"></div><div class="a" style="left:1750px;top:660px;width:14px;height:1.7px;background:#8e9ff3;opacity:0.45"></div><div class="a" style="left:1764px;top:660px;width:4px;height:1.7px;background:#838383;opacity:0.45"></div><div class="a" style="left:1768px;top:660px;width:4px;height:1.7px;background:#86bb7d;opacity:0.45"></div><div class="a" style="left:1772px;top:660px;width:12px;height:1.7px;background:#c9b9ad;opacity:0.45"></div><div class="a" style="left:1784px;top:660px;width:22px;height:1.7px;background:#86bb7d;opacity:0.45"></div><div class="a" style="left:1806px;top:660px;width:8px;height:1.7px;background:#838383;opacity:0.45"></div><div class="a" style="left:1754px;top:664px;width:8px;height:1.7px;background:#86bb7d;opacity:0.45"></div><div class="a" style="left:1762px;top:664px;width:16px;height:1.7px;background:#c9b9ad;opacity:0.45"></div><div class="a" style="left:1778px;top:664px;width:4px;height:1.7px;background:#838383;opacity:0.45"></div><div class="a" style="left:1782px;top:664px;width:8px;height:1.7px;background:#c9b9ad;opacity:0.45"></div><div class="a" style="left:1792px;top:664px;width:14px;height:1.7px;background:#8e9ff3;opacity:0.45"></div><div class="a" style="left:1806px;top:664px;width:16px;height:1.7px;background:#838383;opacity:0.45"></div><div class="a" style="left:1822px;top:664px;width:10px;height:1.7px;background:#c9b9ad;opacity:0.45"></div><div class="a" style="left:1758px;top:668px;width:4px;height:1.7px;background:#5f8058;opacity:0.45"></div><div class="a" style="left:1764px;top:668px;width:44px;height:1.7px;background:#8e9ff3;opacity:0.45"></div><div class="a" style="left:1808px;top:668px;width:6px;height:1.7px;background:#838383;opacity:0.45"></div><div class="a" style="left:1762px;top:672px;width:8px;height:1.7px;background:#86bb7d"></div><div class="a" style="left:1770px;top:672px;width:26px;height:1.7px;background:#c9b9ad"></div><div class="a" style="left:1796px;top:672px;width:4px;height:1.7px;background:#838383"></div><div class="a" style="left:1800px;top:672px;width:4px;height:1.7px;background:#86bb7d"></div><div class="a" style="left:1804px;top:672px;width:24px;height:1.7px;background:#c9b9ad"></div><div class="a" style="left:1828px;top:672px;width:16px;height:1.7px;background:#838383"></div><div class="a" style="left:1844px;top:672px;width:10px;height:1.7px;background:#8e9ff3"></div><div class="a" style="left:1762px;top:676px;width:8px;height:1.7px;background:#86bb7d"></div><div class="a" style="left:1770px;top:676px;width:24px;height:1.7px;background:#c9b9ad"></div><div class="a" style="left:1794px;top:676px;width:4px;height:1.7px;background:#838383"></div><div class="a" style="left:1798px;top:676px;width:18px;height:1.7px;background:#c9b9ad"></div><div class="a" style="left:1818px;top:676px;width:28px;height:1.7px;background:#8e9ff3"></div><div class="a" style="left:1846px;top:676px;width:22px;height:1.7px;background:#838383"></div><div class="a" style="left:1754px;top:680px;width:24px;height:1.7px;background:#8e9ff3"></div><div class="a" style="left:1778px;top:680px;width:4px;height:1.7px;background:#838383"></div><div class="a" style="left:1782px;top:680px;width:4px;height:1.7px;background:#86bb7d"></div><div class="a" style="left:1786px;top:680px;width:38px;height:1.7px;background:#c9b9ad"></div><div class="a" style="left:1824px;top:680px;width:14px;height:1.7px;background:#86bb7d"></div><div class="a" style="left:1838px;top:680px;width:8px;height:1.7px;background:#838383"></div><div class="a" style="left:1754px;top:684px;width:8px;height:1.7px;background:#86bb7d"></div><div class="a" style="left:1762px;top:684px;width:22px;height:1.7px;background:#c9b9ad"></div><div class="a" style="left:1784px;top:684px;width:4px;height:1.7px;background:#838383"></div><div class="a" style="left:1788px;top:684px;width:12px;height:1.7px;background:#c9b9ad"></div><div class="a" style="left:1802px;top:684px;width:28px;height:1.7px;background:#8e9ff3"></div><div class="a" style="left:1830px;top:684px;width:6px;height:1.7px;background:#838383"></div><div class="a" style="left:1836px;top:684px;width:32px;height:1.7px;background:#c9b9ad"></div><div class="a" style="left:1750px;top:692px;width:8px;height:1.7px;background:#86bb7d"></div><div class="a" style="left:1758px;top:692px;width:28px;height:1.7px;background:#c9b9ad"></div><div class="a" style="left:1786px;top:692px;width:4px;height:1.7px;background:#838383"></div><div class="a" style="left:1790px;top:692px;width:14px;height:1.7px;background:#c9b9ad"></div><div class="a" style="left:1806px;top:692px;width:14px;height:1.7px;background:#8e9ff3"></div><div class="a" style="left:1820px;top:692px;width:18px;height:1.7px;background:#838383"></div><div class="a" style="left:1838px;top:692px;width:12px;height:1.7px;background:#c9b9ad"></div><div class="a" style="left:1750px;top:696px;width:8px;height:1.7px;background:#86bb7d"></div><div class="a" style="left:1758px;top:696px;width:26px;height:1.7px;background:#c9b9ad"></div><div class="a" style="left:1784px;top:696px;width:4px;height:1.7px;background:#838383"></div><div class="a" style="left:1788px;top:696px;width:4px;height:1.7px;background:#86bb7d"></div><div class="a" style="left:1792px;top:696px;width:24px;height:1.7px;background:#c9b9ad"></div><div class="a" style="left:1816px;top:696px;width:14px;height:1.7px;background:#838383"></div><div class="a" style="left:1830px;top:696px;width:20px;height:1.7px;background:#8e9ff3"></div><div class="a" style="left:1762px;top:700px;width:8px;height:1.7px;background:#86bb7d"></div><div class="a" style="left:1770px;top:700px;width:26px;height:1.7px;background:#c9b9ad"></div><div class="a" style="left:1796px;top:700px;width:4px;height:1.7px;background:#838383"></div><div class="a" style="left:1800px;top:700px;width:12px;height:1.7px;background:#c9b9ad"></div><div class="a" style="left:1814px;top:700px;width:26px;height:1.7px;background:#8e9ff3"></div><div class="a" style="left:1840px;top:700px;width:20px;height:1.7px;background:#838383"></div><div class="a" style="left:1860px;top:700px;width:8px;height:1.7px;background:#c9b9ad"></div><div class="a" style="left:1750px;top:708px;width:8px;height:1.7px;background:#86bb7d"></div><div class="a" style="left:1758px;top:708px;width:22px;height:1.7px;background:#c9b9ad"></div><div class="a" style="left:1780px;top:708px;width:4px;height:1.7px;background:#838383"></div><div class="a" style="left:1784px;top:708px;width:4px;height:1.7px;background:#86bb7d"></div><div class="a" style="left:1788px;top:708px;width:24px;height:1.7px;background:#c9b9ad"></div><div class="a" style="left:1812px;top:708px;width:18px;height:1.7px;background:#838383"></div><div class="a" style="left:1830px;top:708px;width:8px;height:1.7px;background:#8e9ff3"></div><div class="a" style="left:1750px;top:716px;width:4px;height:1.7px;background:#5f8058"></div><div class="a" style="left:1756px;top:716px;width:26px;height:1.7px;background:#8e9ff3"></div><div class="a" style="left:1782px;top:716px;width:8px;height:1.7px;background:#838383"></div><div class="a" style="left:1762px;top:720px;width:50px;height:1.7px;background:#bcbcbc"></div><div class="a" style="left:1754px;top:724px;width:4px;height:1.7px;background:#5f8058"></div><div class="a" style="left:1760px;top:724px;width:38px;height:1.7px;background:#8e9ff3"></div><div class="a" style="left:1798px;top:724px;width:12px;height:1.7px;background:#838383"></div><div class="a" style="left:1750px;top:728px;width:24px;height:1.7px;background:#8e9ff3"></div><div class="a" style="left:1774px;top:728px;width:4px;height:1.7px;background:#838383"></div><div class="a" style="left:1778px;top:728px;width:4px;height:1.7px;background:#86bb7d"></div><div class="a" style="left:1782px;top:728px;width:38px;height:1.7px;background:#c9b9ad"></div><div class="a" style="left:1820px;top:728px;width:24px;height:1.7px;background:#86bb7d"></div><div class="a" style="left:1844px;top:728px;width:12px;height:1.7px;background:#838383"></div><div class="a" style="left:1754px;top:732px;width:8px;height:1.7px;background:#86bb7d"></div><div class="a" style="left:1762px;top:732px;width:28px;height:1.7px;background:#c9b9ad"></div><div class="a" style="left:1790px;top:732px;width:4px;height:1.7px;background:#838383"></div><div class="a" style="left:1794px;top:732px;width:4px;height:1.7px;background:#86bb7d"></div><div class="a" style="left:1798px;top:732px;width:24px;height:1.7px;background:#c9b9ad"></div><div class="a" style="left:1822px;top:732px;width:18px;height:1.7px;background:#838383"></div><div class="a" style="left:1840px;top:732px;width:14px;height:1.7px;background:#8e9ff3"></div><div class="a" style="left:1750px;top:736px;width:6px;height:1.7px;background:#5f8058"></div><div class="a" style="left:1758px;top:736px;width:22px;height:1.7px;background:#8e9ff3"></div><div class="a" style="left:1782px;top:736px;width:2px;height:1.7px;background:#838383"></div><div class="a" style="left:1786px;top:736px;width:10px;height:1.7px;background:#86bb7d"></div><div class="a" style="left:1758px;top:740px;width:8px;height:1.7px;background:#86bb7d"></div><div class="a" style="left:1766px;top:740px;width:22px;height:1.7px;background:#c9b9ad"></div><div class="a" style="left:1788px;top:740px;width:4px;height:1.7px;background:#838383"></div><div class="a" style="left:1792px;top:740px;width:4px;height:1.7px;background:#86bb7d"></div><div class="a" style="left:1796px;top:740px;width:24px;height:1.7px;background:#c9b9ad"></div><div class="a" style="left:1820px;top:740px;width:10px;height:1.7px;background:#838383"></div><div class="a" style="left:1830px;top:740px;width:14px;height:1.7px;background:#8e9ff3"></div><div class="a" style="left:1750px;top:744px;width:8px;height:1.7px;background:#86bb7d"></div><div class="a" style="left:1758px;top:744px;width:22px;height:1.7px;background:#c9b9ad"></div><div class="a" style="left:1780px;top:744px;width:4px;height:1.7px;background:#838383"></div><div class="a" style="left:1784px;top:744px;width:4px;height:1.7px;background:#86bb7d"></div><div class="a" style="left:1788px;top:744px;width:24px;height:1.7px;background:#c9b9ad"></div><div class="a" style="left:1812px;top:744px;width:18px;height:1.7px;background:#838383"></div><div class="a" style="left:1830px;top:744px;width:10px;height:1.7px;background:#8e9ff3"></div><div class="a" style="left:1750px;top:748px;width:24px;height:1.7px;background:#8e9ff3"></div><div class="a" style="left:1774px;top:748px;width:4px;height:1.7px;background:#838383"></div><div class="a" style="left:1778px;top:748px;width:4px;height:1.7px;background:#86bb7d"></div><div class="a" style="left:1782px;top:748px;width:28px;height:1.7px;background:#c9b9ad"></div><div class="a" style="left:1810px;top:748px;width:12px;height:1.7px;background:#86bb7d"></div><div class="a" style="left:1822px;top:748px;width:6px;height:1.7px;background:#838383"></div><div class="a" style="left:1750px;top:752px;width:80px;height:1.7px;background:#bcbcbc"></div><div class="a" style="left:1758px;top:756px;width:100px;height:1.7px;background:#bcbcbc"></div><div class="a" style="left:1758px;top:760px;width:8px;height:1.7px;background:#86bb7d"></div><div class="a" style="left:1766px;top:760px;width:36px;height:1.7px;background:#c9b9ad"></div><div class="a" style="left:1802px;top:760px;width:4px;height:1.7px;background:#838383"></div><div class="a" style="left:1806px;top:760px;width:18px;height:1.7px;background:#c9b9ad"></div><div class="a" style="left:1826px;top:760px;width:18px;height:1.7px;background:#8e9ff3"></div><div class="a" style="left:1844px;top:760px;width:24px;height:1.7px;background:#838383"></div><div class="a" style="left:1750px;top:764px;width:100px;height:1.7px;background:#bcbcbc"></div><div class="a" style="left:1762px;top:768px;width:6px;height:1.7px;background:#5f8058"></div><div class="a" style="left:1770px;top:768px;width:16px;height:1.7px;background:#8e9ff3"></div><div class="a" style="left:1788px;top:768px;width:2px;height:1.7px;background:#838383"></div><div class="a" style="left:1792px;top:768px;width:8px;height:1.7px;background:#86bb7d"></div><div class="a" style="left:1750px;top:772px;width:8px;height:1.7px;background:#86bb7d"></div><div class="a" style="left:1758px;top:772px;width:20px;height:1.7px;background:#c9b9ad"></div><div class="a" style="left:1778px;top:772px;width:4px;height:1.7px;background:#838383"></div><div class="a" style="left:1782px;top:772px;width:4px;height:1.7px;background:#86bb7d"></div><div class="a" style="left:1786px;top:772px;width:24px;height:1.7px;background:#c9b9ad"></div><div class="a" style="left:1810px;top:772px;width:16px;height:1.7px;background:#838383"></div><div class="a" style="left:1826px;top:772px;width:8px;height:1.7px;background:#8e9ff3"></div><div class="a" style="left:1762px;top:776px;width:48px;height:1.7px;background:#bcbcbc"></div><div class="a" style="left:1762px;top:780px;width:22px;height:1.7px;background:#8e9ff3"></div><div class="a" style="left:1784px;top:780px;width:4px;height:1.7px;background:#838383"></div><div class="a" style="left:1788px;top:780px;width:4px;height:1.7px;background:#86bb7d"></div><div class="a" style="left:1792px;top:780px;width:24px;height:1.7px;background:#c9b9ad"></div><div class="a" style="left:1816px;top:780px;width:14px;height:1.7px;background:#86bb7d"></div><div class="a" style="left:1830px;top:780px;width:12px;height:1.7px;background:#838383"></div><div class="a" style="left:1750px;top:784px;width:8px;height:1.7px;background:#86bb7d"></div><div class="a" style="left:1758px;top:784px;width:22px;height:1.7px;background:#c9b9ad"></div><div class="a" style="left:1780px;top:784px;width:4px;height:1.7px;background:#838383"></div><div class="a" style="left:1784px;top:784px;width:4px;height:1.7px;background:#86bb7d"></div><div class="a" style="left:1788px;top:784px;width:24px;height:1.7px;background:#c9b9ad"></div><div class="a" style="left:1812px;top:784px;width:14px;height:1.7px;background:#838383"></div><div class="a" style="left:1826px;top:784px;width:22px;height:1.7px;background:#8e9ff3"></div><div class="a" style="left:1758px;top:788px;width:18px;height:1.7px;background:#8e9ff3"></div><div class="a" style="left:1776px;top:788px;width:4px;height:1.7px;background:#838383"></div><div class="a" style="left:1780px;top:788px;width:4px;height:1.7px;background:#86bb7d"></div><div class="a" style="left:1784px;top:788px;width:30px;height:1.7px;background:#c9b9ad"></div><div class="a" style="left:1814px;top:788px;width:12px;height:1.7px;background:#86bb7d"></div><div class="a" style="left:1826px;top:788px;width:4px;height:1.7px;background:#838383"></div><div class="a" style="left:1750px;top:792px;width:14px;height:1.7px;background:#8e9ff3"></div><div class="a" style="left:1764px;top:792px;width:4px;height:1.7px;background:#838383"></div><div class="a" style="left:1768px;top:792px;width:4px;height:1.7px;background:#86bb7d"></div><div class="a" style="left:1772px;top:792px;width:36px;height:1.7px;background:#c9b9ad"></div><div class="a" style="left:1808px;top:792px;width:20px;height:1.7px;background:#86bb7d"></div><div class="a" style="left:1828px;top:792px;width:12px;height:1.7px;background:#838383"></div><div class="a" style="left:1758px;top:796px;width:12px;height:1.7px;background:#5f8058"></div><div class="a" style="left:1750px;top:800px;width:10px;height:1.7px;background:#5f8058"></div><div class="a" style="left:1758px;top:804px;width:6px;height:1.7px;background:#5f8058"></div><div class="a" style="left:1766px;top:804px;width:22px;height:1.7px;background:#8e9ff3"></div><div class="a" style="left:1790px;top:804px;width:2px;height:1.7px;background:#838383"></div><div class="a" style="left:1794px;top:804px;width:16px;height:1.7px;background:#86bb7d"></div><div class="a" style="left:1758px;top:808px;width:14px;height:1.7px;background:#5f8058"></div><div class="a" style="left:1750px;top:812px;width:78px;height:1.7px;background:#bcbcbc"></div><div class="a" style="left:1746px;top:821px;width:40px;height:1.7px;background:#86bb7d;opacity:0.4"></div><div class="a" style="left:1786px;top:821px;width:28px;height:1.7px;background:#8e9ff3;opacity:0.4"></div><div class="a" style="left:1814px;top:821px;width:20px;height:1.7px;background:#838383;opacity:0.4"></div><div class="a" style="left:1750px;top:825px;width:24px;height:1.7px;background:#86bb7d;opacity:0.4"></div><div class="a" style="left:1750px;top:829px;width:80px;height:1.7px;background:#bcbcbc;opacity:0.45"></div><div class="a" style="left:1750px;top:833px;width:6px;height:1.7px;background:#5f8058;opacity:0.45"></div><div class="a" style="left:1758px;top:833px;width:20px;height:1.7px;background:#8e9ff3;opacity:0.45"></div><div class="a" style="left:1780px;top:833px;width:2px;height:1.7px;background:#838383;opacity:0.45"></div><div class="a" style="left:1784px;top:833px;width:12px;height:1.7px;background:#86bb7d;opacity:0.45"></div><div class="a" style="left:1758px;top:837px;width:8px;height:1.7px;background:#86bb7d;opacity:0.45"></div><div class="a" style="left:1766px;top:837px;width:32px;height:1.7px;background:#c9b9ad;opacity:0.45"></div><div class="a" style="left:1798px;top:837px;width:4px;height:1.7px;background:#838383;opacity:0.45"></div><div class="a" style="left:1802px;top:837px;width:6px;height:1.7px;background:#c9b9ad;opacity:0.45"></div><div class="a" style="left:1810px;top:837px;width:24px;height:1.7px;background:#8e9ff3;opacity:0.45"></div><div class="a" style="left:1834px;top:837px;width:20px;height:1.7px;background:#838383;opacity:0.45"></div><div class="a" style="left:1854px;top:837px;width:14px;height:1.7px;background:#c9b9ad;opacity:0.45"></div><div class="a" style="left:1750px;top:841px;width:16px;height:1.7px;background:#5f8058"></div><div class="a" style="left:1754px;top:849px;width:6px;height:1.7px;background:#5f8058"></div><div class="a" style="left:1762px;top:849px;width:24px;height:1.7px;background:#8e9ff3"></div><div class="a" style="left:1788px;top:849px;width:2px;height:1.7px;background:#838383"></div><div class="a" style="left:1792px;top:849px;width:16px;height:1.7px;background:#86bb7d"></div><div class="a" style="left:1746px;top:865px;width:40px;height:1.7px;background:#86bb7d;opacity:0.45"></div><div class="a" style="left:1786px;top:865px;width:24px;height:1.7px;background:#8e9ff3;opacity:0.45"></div><div class="a" style="left:1750px;top:869px;width:20px;height:1.7px;background:#86bb7d;opacity:0.45"></div><div class="a" style="left:1754px;top:873px;width:32px;height:1.7px;background:#8e9ff3;opacity:0.45"></div><div class="a" style="left:1786px;top:873px;width:8px;height:1.7px;background:#838383;opacity:0.45"></div><div class="a" style="left:1758px;top:877px;width:44px;height:1.7px;background:#86bb7d;opacity:0.45"></div><div class="a" style="left:1758px;top:881px;width:100px;height:1.7px;background:#bcbcbc;opacity:0.45"></div><div class="a" style="left:1758px;top:885px;width:6px;height:1.7px;background:#5f8058"></div><div class="a" style="left:1766px;top:885px;width:22px;height:1.7px;background:#8e9ff3"></div><div class="a" style="left:1790px;top:885px;width:2px;height:1.7px;background:#838383"></div><div class="a" style="left:1794px;top:885px;width:14px;height:1.7px;background:#86bb7d"></div><div class="a" style="left:1758px;top:889px;width:6px;height:1.7px;background:#5f8058"></div><div class="a" style="left:1766px;top:889px;width:16px;height:1.7px;background:#8e9ff3"></div><div class="a" style="left:1784px;top:889px;width:2px;height:1.7px;background:#838383"></div><div class="a" style="left:1788px;top:889px;width:14px;height:1.7px;background:#86bb7d"></div><div class="a" style="left:1758px;top:893px;width:22px;height:1.7px;background:#8e9ff3"></div><div class="a" style="left:1780px;top:893px;width:26px;height:1.7px;background:#838383"></div><div class="a" style="left:1758px;top:897px;width:16px;height:1.7px;background:#8e9ff3"></div><div class="a" style="left:1774px;top:897px;width:24px;height:1.7px;background:#838383"></div><div class="a" style="left:1758px;top:901px;width:12px;height:1.7px;background:#86bb7d"></div><div class="a" style="left:1772px;top:901px;width:6px;height:1.7px;background:#86bb7d"></div><div class="a" style="left:1780px;top:901px;width:6px;height:1.7px;background:#86bb7d"></div><div class="a" style="left:1788px;top:901px;width:12px;height:1.7px;background:#86bb7d"></div><div class="a" style="left:1800px;top:901px;width:6px;height:1.7px;background:#838383"></div><div class="a" style="left:1808px;top:901px;width:28px;height:1.7px;background:#838383"></div><div class="a" style="left:1838px;top:901px;width:24px;height:1.7px;background:#8e9ff3"></div><div class="a" style="left:1758px;top:905px;width:12px;height:1.7px;background:#86bb7d"></div><div class="a" style="left:1772px;top:905px;width:6px;height:1.7px;background:#86bb7d"></div><div class="a" style="left:1780px;top:905px;width:6px;height:1.7px;background:#86bb7d"></div><div class="a" style="left:1788px;top:905px;width:12px;height:1.7px;background:#86bb7d"></div><div class="a" style="left:1800px;top:905px;width:6px;height:1.7px;background:#838383"></div><div class="a" style="left:1808px;top:905px;width:28px;height:1.7px;background:#838383"></div><div class="a" style="left:1838px;top:905px;width:24px;height:1.7px;background:#8e9ff3"></div><div class="a" style="left:1758px;top:909px;width:12px;height:1.7px;background:#86bb7d"></div><div class="a" style="left:1772px;top:909px;width:6px;height:1.7px;background:#86bb7d"></div><div class="a" style="left:1780px;top:909px;width:6px;height:1.7px;background:#86bb7d"></div><div class="a" style="left:1788px;top:909px;width:12px;height:1.7px;background:#86bb7d"></div><div class="a" style="left:1800px;top:909px;width:6px;height:1.7px;background:#838383"></div><div class="a" style="left:1808px;top:909px;width:28px;height:1.7px;background:#838383"></div><div class="a" style="left:1838px;top:909px;width:24px;height:1.7px;background:#8e9ff3"></div><div class="a" style="left:1758px;top:913px;width:12px;height:1.7px;background:#86bb7d"></div><div class="a" style="left:1772px;top:913px;width:6px;height:1.7px;background:#86bb7d"></div><div class="a" style="left:1780px;top:913px;width:6px;height:1.7px;background:#86bb7d"></div><div class="a" style="left:1788px;top:913px;width:12px;height:1.7px;background:#86bb7d"></div><div class="a" style="left:1800px;top:913px;width:6px;height:1.7px;background:#838383"></div><div class="a" style="left:1808px;top:913px;width:28px;height:1.7px;background:#838383"></div><div class="a" style="left:1838px;top:913px;width:24px;height:1.7px;background:#8e9ff3"></div><div class="a" style="left:1758px;top:917px;width:12px;height:1.7px;background:#86bb7d"></div><div class="a" style="left:1772px;top:917px;width:6px;height:1.7px;background:#86bb7d"></div><div class="a" style="left:1780px;top:917px;width:6px;height:1.7px;background:#86bb7d"></div><div class="a" style="left:1788px;top:917px;width:12px;height:1.7px;background:#86bb7d"></div><div class="a" style="left:1800px;top:917px;width:6px;height:1.7px;background:#838383"></div><div class="a" style="left:1808px;top:917px;width:28px;height:1.7px;background:#838383"></div><div class="a" style="left:1838px;top:917px;width:24px;height:1.7px;background:#8e9ff3"></div><div class="a" style="left:1758px;top:921px;width:100px;height:1.7px;background:#bcbcbc"></div><div class="a" style="left:1758px;top:925px;width:6px;height:1.7px;background:#5f8058"></div><div class="a" style="left:1766px;top:925px;width:10px;height:1.7px;background:#8e9ff3"></div><div class="a" style="left:1778px;top:925px;width:2px;height:1.7px;background:#838383"></div><div class="a" style="left:1782px;top:925px;width:14px;height:1.7px;background:#86bb7d"></div><div class="a" style="left:1758px;top:929px;width:6px;height:1.7px;background:#5f8058"></div><div class="a" style="left:1766px;top:929px;width:10px;height:1.7px;background:#8e9ff3"></div><div class="a" style="left:1778px;top:929px;width:2px;height:1.7px;background:#838383"></div><div class="a" style="left:1782px;top:929px;width:14px;height:1.7px;background:#86bb7d"></div><div class="a" style="left:1758px;top:933px;width:10px;height:1.7px;background:#8e9ff3"></div><div class="a" style="left:1768px;top:933px;width:6px;height:1.7px;background:#838383"></div><div class="a" style="left:1758px;top:937px;width:10px;height:1.7px;background:#8e9ff3"></div><div class="a" style="left:1768px;top:937px;width:24px;height:1.7px;background:#838383"></div><div class="a" style="left:1758px;top:941px;width:12px;height:1.7px;background:#86bb7d"></div><div class="a" style="left:1772px;top:941px;width:6px;height:1.7px;background:#86bb7d"></div><div class="a" style="left:1780px;top:941px;width:6px;height:1.7px;background:#86bb7d"></div><div class="a" style="left:1788px;top:941px;width:12px;height:1.7px;background:#86bb7d"></div><div class="a" style="left:1800px;top:941px;width:6px;height:1.7px;background:#838383"></div><div class="a" style="left:1808px;top:941px;width:28px;height:1.7px;background:#838383"></div><div class="a" style="left:1838px;top:941px;width:24px;height:1.7px;background:#8e9ff3"></div><div class="a" style="left:1758px;top:945px;width:12px;height:1.7px;background:#86bb7d"></div><div class="a" style="left:1772px;top:945px;width:6px;height:1.7px;background:#86bb7d"></div><div class="a" style="left:1780px;top:945px;width:6px;height:1.7px;background:#86bb7d"></div><div class="a" style="left:1788px;top:945px;width:12px;height:1.7px;background:#86bb7d"></div><div class="a" style="left:1800px;top:945px;width:6px;height:1.7px;background:#838383"></div><div class="a" style="left:1808px;top:945px;width:28px;height:1.7px;background:#838383"></div><div class="a" style="left:1838px;top:945px;width:24px;height:1.7px;background:#8e9ff3"></div><div class="a" style="left:1758px;top:949px;width:12px;height:1.7px;background:#86bb7d"></div><div class="a" style="left:1772px;top:949px;width:6px;height:1.7px;background:#86bb7d"></div><div class="a" style="left:1780px;top:949px;width:6px;height:1.7px;background:#86bb7d"></div><div class="a" style="left:1788px;top:949px;width:12px;height:1.7px;background:#86bb7d"></div><div class="a" style="left:1800px;top:949px;width:6px;height:1.7px;background:#838383"></div><div class="a" style="left:1808px;top:949px;width:28px;height:1.7px;background:#838383"></div><div class="a" style="left:1838px;top:949px;width:24px;height:1.7px;background:#8e9ff3"></div><div class="a" style="left:1758px;top:953px;width:12px;height:1.7px;background:#86bb7d"></div><div class="a" style="left:1772px;top:953px;width:6px;height:1.7px;background:#86bb7d"></div><div class="a" style="left:1780px;top:953px;width:6px;height:1.7px;background:#86bb7d"></div><div class="a" style="left:1788px;top:953px;width:12px;height:1.7px;background:#86bb7d"></div><div class="a" style="left:1800px;top:953px;width:6px;height:1.7px;background:#838383"></div><div class="a" style="left:1808px;top:953px;width:28px;height:1.7px;background:#838383"></div><div class="a" style="left:1838px;top:953px;width:24px;height:1.7px;background:#8e9ff3"></div><div class="a" style="left:1758px;top:957px;width:12px;height:1.7px;background:#86bb7d"></div><div class="a" style="left:1772px;top:957px;width:6px;height:1.7px;background:#86bb7d"></div><div class="a" style="left:1780px;top:957px;width:6px;height:1.7px;background:#86bb7d"></div><div class="a" style="left:1788px;top:957px;width:12px;height:1.7px;background:#86bb7d"></div><div class="a" style="left:1800px;top:957px;width:6px;height:1.7px;background:#838383"></div><div class="a" style="left:1808px;top:957px;width:28px;height:1.7px;background:#838383"></div><div class="a" style="left:1838px;top:957px;width:24px;height:1.7px;background:#8e9ff3"></div><div class="a" style="left:1750px;top:961px;width:16px;height:1.7px;background:#5f8058"></div><div class="a" style="left:1746px;top:977px;width:40px;height:1.7px;background:#86bb7d;opacity:0.4"></div><div class="a" style="left:1786px;top:977px;width:28px;height:1.7px;background:#8e9ff3;opacity:0.4"></div><div class="a" style="left:1814px;top:977px;width:20px;height:1.7px;background:#838383;opacity:0.4"></div><div class="a" style="left:1750px;top:981px;width:24px;height:1.7px;background:#86bb7d;opacity:0.4"></div><div class="a" style="left:1758px;top:985px;width:68px;height:1.7px;background:#bcbcbc;opacity:0.45"></div><div class="a" style="left:1758px;top:989px;width:8px;height:1.7px;background:#86bb7d;opacity:0.45"></div><div class="a" style="left:1766px;top:989px;width:32px;height:1.7px;background:#c9b9ad;opacity:0.45"></div><div class="a" style="left:1798px;top:989px;width:4px;height:1.7px;background:#838383;opacity:0.45"></div><div class="a" style="left:1802px;top:989px;width:12px;height:1.7px;background:#c9b9ad;opacity:0.45"></div><div class="a" style="left:1816px;top:989px;width:28px;height:1.7px;background:#8e9ff3;opacity:0.45"></div><div class="a" style="left:1844px;top:989px;width:22px;height:1.7px;background:#838383;opacity:0.45"></div><div class="a" style="left:1866px;top:989px;width:2px;height:1.7px;background:#c9b9ad;opacity:0.45"></div><div class="a" style="left:1750px;top:993px;width:8px;height:1.7px;background:#86bb7d;opacity:0.45"></div><div class="a" style="left:1758px;top:993px;width:36px;height:1.7px;background:#c9b9ad;opacity:0.45"></div><div class="a" style="left:1794px;top:993px;width:4px;height:1.7px;background:#838383;opacity:0.45"></div><div class="a" style="left:1798px;top:993px;width:18px;height:1.7px;background:#c9b9ad;opacity:0.45"></div><div class="a" style="left:1818px;top:993px;width:12px;height:1.7px;background:#8e9ff3;opacity:0.45"></div><div class="a" style="left:1830px;top:993px;width:16px;height:1.7px;background:#838383;opacity:0.45"></div><div class="a" style="left:1846px;top:993px;width:18px;height:1.7px;background:#c9b9ad;opacity:0.45"></div><div class="a" style="left:1750px;top:997px;width:8px;height:1.7px;background:#86bb7d"></div><div class="a" style="left:1758px;top:997px;width:28px;height:1.7px;background:#c9b9ad"></div><div class="a" style="left:1786px;top:997px;width:4px;height:1.7px;background:#838383"></div><div class="a" style="left:1790px;top:997px;width:4px;height:1.7px;background:#86bb7d"></div><div class="a" style="left:1794px;top:997px;width:24px;height:1.7px;background:#c9b9ad"></div><div class="a" style="left:1818px;top:997px;width:16px;height:1.7px;background:#838383"></div><div class="a" style="left:1834px;top:997px;width:8px;height:1.7px;background:#8e9ff3"></div><div class="a" style="left:1762px;top:1001px;width:24px;height:1.7px;background:#8e9ff3"></div><div class="a" style="left:1786px;top:1001px;width:4px;height:1.7px;background:#838383"></div><div class="a" style="left:1790px;top:1001px;width:4px;height:1.7px;background:#86bb7d"></div><div class="a" style="left:1794px;top:1001px;width:30px;height:1.7px;background:#c9b9ad"></div><div class="a" style="left:1824px;top:1001px;width:16px;height:1.7px;background:#86bb7d"></div><div class="a" style="left:1840px;top:1001px;width:8px;height:1.7px;background:#838383"></div><div class="a" style="left:1762px;top:1005px;width:4px;height:1.7px;background:#5f8058"></div><div class="a" style="left:1768px;top:1005px;width:32px;height:1.7px;background:#8e9ff3"></div><div class="a" style="left:1800px;top:1005px;width:8px;height:1.7px;background:#838383"></div><div class="a" style="left:1754px;top:1009px;width:66px;height:1.7px;background:#bcbcbc"></div><div class="a" style="left:1750px;top:1013px;width:24px;height:1.7px;background:#8e9ff3"></div><div class="a" style="left:1774px;top:1013px;width:4px;height:1.7px;background:#838383"></div><div class="a" style="left:1778px;top:1013px;width:4px;height:1.7px;background:#86bb7d"></div><div class="a" style="left:1782px;top:1013px;width:12px;height:1.7px;background:#c9b9ad"></div><div class="a" style="left:1794px;top:1013px;width:18px;height:1.7px;background:#86bb7d"></div><div class="a" style="left:1812px;top:1013px;width:14px;height:1.7px;background:#838383"></div><div class="a" style="left:1758px;top:1017px;width:64px;height:1.7px;background:#bcbcbc"></div><div class="a" style="left:1762px;top:1021px;width:6px;height:1.7px;background:#5f8058"></div><div class="a" style="left:1770px;top:1021px;width:18px;height:1.7px;background:#8e9ff3"></div><div class="a" style="left:1790px;top:1021px;width:2px;height:1.7px;background:#838383"></div><div class="a" style="left:1794px;top:1021px;width:8px;height:1.7px;background:#86bb7d"></div><div class="a" style="left:1762px;top:1025px;width:6px;height:1.7px;background:#5f8058"></div><div class="a" style="left:1770px;top:1025px;width:18px;height:1.7px;background:#8e9ff3"></div><div class="a" style="left:1790px;top:1025px;width:2px;height:1.7px;background:#838383"></div><div class="a" style="left:1794px;top:1025px;width:16px;height:1.7px;background:#86bb7d"></div><div class="a" style="left:1750px;top:1029px;width:4px;height:1.7px;background:#5f8058"></div><div class="a" style="left:1756px;top:1029px;width:30px;height:1.7px;background:#8e9ff3"></div><div class="a" style="left:1786px;top:1029px;width:4px;height:1.7px;background:#838383"></div><div class="a" style="left:1750px;top:1033px;width:16px;height:1.7px;background:#8e9ff3"></div><div class="a" style="left:1766px;top:1033px;width:4px;height:1.7px;background:#838383"></div><div class="a" style="left:1770px;top:1033px;width:4px;height:1.7px;background:#86bb7d"></div><div class="a" style="left:1774px;top:1033px;width:14px;height:1.7px;background:#c9b9ad"></div><div class="a" style="left:1788px;top:1033px;width:18px;height:1.7px;background:#86bb7d"></div><div class="a" style="left:1806px;top:1033px;width:10px;height:1.7px;background:#838383"></div><div class="a" style="left:1758px;top:1037px;width:8px;height:1.7px;background:#86bb7d"></div><div class="a" style="left:1766px;top:1037px;width:24px;height:1.7px;background:#c9b9ad"></div><div class="a" style="left:1790px;top:1037px;width:4px;height:1.7px;background:#838383"></div><div class="a" style="left:1794px;top:1037px;width:16px;height:1.7px;background:#c9b9ad"></div><div class="a" style="left:1812px;top:1037px;width:24px;height:1.7px;background:#8e9ff3"></div><div class="a" style="left:1836px;top:1037px;width:14px;height:1.7px;background:#838383"></div><div class="a" style="left:1850px;top:1037px;width:18px;height:1.7px;background:#c9b9ad"></div><div class="a" style="left:1750px;top:1041px;width:8px;height:1.7px;background:#86bb7d"></div><div class="a" style="left:1758px;top:1041px;width:22px;height:1.7px;background:#c9b9ad"></div><div class="a" style="left:1780px;top:1041px;width:4px;height:1.7px;background:#838383"></div><div class="a" style="left:1784px;top:1041px;width:4px;height:1.7px;background:#86bb7d"></div><div class="a" style="left:1788px;top:1041px;width:24px;height:1.7px;background:#c9b9ad"></div><div class="a" style="left:1812px;top:1041px;width:10px;height:1.7px;background:#838383"></div><div class="a" style="left:1822px;top:1041px;width:22px;height:1.7px;background:#8e9ff3"></div><div class="a" style="left:1758px;top:1049px;width:18px;height:1.7px;background:#8e9ff3"></div><div class="a" style="left:1776px;top:1049px;width:4px;height:1.7px;background:#838383"></div><div class="a" style="left:1780px;top:1049px;width:4px;height:1.7px;background:#86bb7d"></div><div class="a" style="left:1784px;top:1049px;width:32px;height:1.7px;background:#c9b9ad"></div><div class="a" style="left:1816px;top:1049px;width:16px;height:1.7px;background:#86bb7d"></div><div class="a" style="left:1832px;top:1049px;width:16px;height:1.7px;background:#838383"></div><div class="a" style="left:1754px;top:1053px;width:8px;height:1.7px;background:#86bb7d"></div><div class="a" style="left:1762px;top:1053px;width:36px;height:1.7px;background:#c9b9ad"></div><div class="a" style="left:1798px;top:1053px;width:4px;height:1.7px;background:#838383"></div><div class="a" style="left:1802px;top:1053px;width:8px;height:1.7px;background:#c9b9ad"></div><div class="a" style="left:1812px;top:1053px;width:12px;height:1.7px;background:#8e9ff3"></div><div class="a" style="left:1824px;top:1053px;width:24px;height:1.7px;background:#838383"></div><div class="a" style="left:1848px;top:1053px;width:10px;height:1.7px;background:#c9b9ad"></div><div class="a" style="left:1746px;top:1065px;width:40px;height:1.7px;background:#86bb7d;opacity:0.4"></div><div class="a" style="left:1786px;top:1065px;width:28px;height:1.7px;background:#8e9ff3;opacity:0.4"></div><div class="a" style="left:1814px;top:1065px;width:20px;height:1.7px;background:#838383;opacity:0.4"></div><div class="a" style="left:1750px;top:1069px;width:24px;height:1.7px;background:#86bb7d;opacity:0.4"></div><div class="a" style="left:1750px;top:1077px;width:4px;height:1.7px;background:#5f8058;opacity:0.45"></div><div class="a" style="left:1756px;top:1077px;width:18px;height:1.7px;background:#8e9ff3;opacity:0.45"></div><div class="a" style="left:1774px;top:1077px;width:6px;height:1.7px;background:#838383;opacity:0.45"></div><div class="a" style="left:1750px;top:1081px;width:10px;height:1.7px;background:#5f8058;opacity:0.45"></div><div class="a" style="left:1758px;top:1085px;width:8px;height:1.7px;background:#86bb7d"></div><div class="a" style="left:1766px;top:1085px;width:26px;height:1.7px;background:#c9b9ad"></div><div class="a" style="left:1792px;top:1085px;width:4px;height:1.7px;background:#838383"></div><div class="a" style="left:1796px;top:1085px;width:8px;height:1.7px;background:#c9b9ad"></div><div class="a" style="left:1806px;top:1085px;width:22px;height:1.7px;background:#8e9ff3"></div><div class="a" style="left:1828px;top:1085px;width:14px;height:1.7px;background:#838383"></div><div class="a" style="left:1842px;top:1085px;width:26px;height:1.7px;background:#c9b9ad"></div><div class="a" style="left:1750px;top:1089px;width:14px;height:1.7px;background:#5f8058"></div><div class="a" style="left:1754px;top:1093px;width:20px;height:1.7px;background:#8e9ff3"></div><div class="a" style="left:1774px;top:1093px;width:4px;height:1.7px;background:#838383"></div><div class="a" style="left:1778px;top:1093px;width:4px;height:1.7px;background:#86bb7d"></div><div class="a" style="left:1782px;top:1093px;width:24px;height:1.7px;background:#c9b9ad"></div><div class="a" style="left:1806px;top:1093px;width:12px;height:1.7px;background:#86bb7d"></div><div class="a" style="left:1818px;top:1093px;width:8px;height:1.7px;background:#838383"></div><div class="a" style="left:1758px;top:1097px;width:16px;height:1.7px;background:#8e9ff3"></div><div class="a" style="left:1774px;top:1097px;width:4px;height:1.7px;background:#838383"></div><div class="a" style="left:1778px;top:1097px;width:4px;height:1.7px;background:#86bb7d"></div><div class="a" style="left:1782px;top:1097px;width:24px;height:1.7px;background:#c9b9ad"></div><div class="a" style="left:1806px;top:1097px;width:18px;height:1.7px;background:#86bb7d"></div><div class="a" style="left:1824px;top:1097px;width:12px;height:1.7px;background:#838383"></div><div class="a" style="left:1746px;top:1113px;width:40px;height:1.7px;background:#86bb7d;opacity:0.4"></div><div class="a" style="left:1786px;top:1113px;width:28px;height:1.7px;background:#8e9ff3;opacity:0.4"></div><div class="a" style="left:1814px;top:1113px;width:20px;height:1.7px;background:#838383;opacity:0.4"></div><div class="a" style="left:1750px;top:1117px;width:24px;height:1.7px;background:#86bb7d;opacity:0.4"></div><div class="a" style="left:1750px;top:1121px;width:8px;height:1.7px;background:#86bb7d;opacity:0.45"></div><div class="a" style="left:1758px;top:1121px;width:28px;height:1.7px;background:#c9b9ad;opacity:0.45"></div><div class="a" style="left:1786px;top:1121px;width:4px;height:1.7px;background:#838383;opacity:0.45"></div><div class="a" style="left:1790px;top:1121px;width:14px;height:1.7px;background:#c9b9ad;opacity:0.45"></div><div class="a" style="left:1806px;top:1121px;width:26px;height:1.7px;background:#8e9ff3;opacity:0.45"></div><div class="a" style="left:1832px;top:1121px;width:24px;height:1.7px;background:#838383;opacity:0.45"></div><div class="a" style="left:1856px;top:1121px;width:12px;height:1.7px;background:#c9b9ad;opacity:0.45"></div><div class="a" style="left:1750px;top:1125px;width:62px;height:1.7px;background:#bcbcbc;opacity:0.45"></div><div class="a" style="left:1750px;top:1129px;width:4px;height:1.7px;background:#5f8058;opacity:0.45"></div><div class="a" style="left:1756px;top:1129px;width:30px;height:1.7px;background:#8e9ff3;opacity:0.45"></div><div class="a" style="left:1786px;top:1129px;width:8px;height:1.7px;background:#838383;opacity:0.45"></div><div class="a" style="left:1750px;top:1133px;width:6px;height:1.7px;background:#5f8058"></div><div class="a" style="left:1758px;top:1133px;width:22px;height:1.7px;background:#8e9ff3"></div><div class="a" style="left:1782px;top:1133px;width:2px;height:1.7px;background:#838383"></div><div class="a" style="left:1786px;top:1133px;width:12px;height:1.7px;background:#86bb7d"></div><div class="a" style="left:1758px;top:1137px;width:4px;height:1.7px;background:#5f8058"></div><div class="a" style="left:1764px;top:1137px;width:34px;height:1.7px;background:#8e9ff3"></div><div class="a" style="left:1798px;top:1137px;width:12px;height:1.7px;background:#838383"></div><div class="a" style="left:1754px;top:1141px;width:20px;height:1.7px;background:#8e9ff3"></div><div class="a" style="left:1774px;top:1141px;width:4px;height:1.7px;background:#838383"></div><div class="a" style="left:1778px;top:1141px;width:4px;height:1.7px;background:#86bb7d"></div><div class="a" style="left:1782px;top:1141px;width:26px;height:1.7px;background:#c9b9ad"></div><div class="a" style="left:1808px;top:1141px;width:18px;height:1.7px;background:#86bb7d"></div><div class="a" style="left:1826px;top:1141px;width:6px;height:1.7px;background:#838383"></div><div class="a" style="left:1754px;top:1145px;width:82px;height:1.7px;background:#bcbcbc"></div><div class="a" style="left:1746px;top:1161px;width:40px;height:1.7px;background:#86bb7d;opacity:0.4"></div><div class="a" style="left:1786px;top:1161px;width:28px;height:1.7px;background:#8e9ff3;opacity:0.4"></div><div class="a" style="left:1814px;top:1161px;width:20px;height:1.7px;background:#838383;opacity:0.4"></div><div class="a" style="left:1750px;top:1165px;width:24px;height:1.7px;background:#86bb7d;opacity:0.4"></div><div class="a" style="left:1758px;top:1169px;width:16px;height:1.7px;background:#5f8058;opacity:0.45"></div><div class="a" style="left:1758px;top:1173px;width:8px;height:1.7px;background:#86bb7d;opacity:0.45"></div><div class="a" style="left:1766px;top:1173px;width:34px;height:1.7px;background:#c9b9ad;opacity:0.45"></div><div class="a" style="left:1800px;top:1173px;width:4px;height:1.7px;background:#838383;opacity:0.45"></div><div class="a" style="left:1804px;top:1173px;width:14px;height:1.7px;background:#c9b9ad;opacity:0.45"></div><div class="a" style="left:1820px;top:1173px;width:16px;height:1.7px;background:#8e9ff3;opacity:0.45"></div><div class="a" style="left:1836px;top:1173px;width:8px;height:1.7px;background:#838383;opacity:0.45"></div><div class="a" style="left:1844px;top:1173px;width:12px;height:1.7px;background:#c9b9ad;opacity:0.45"></div><div class="a" style="left:1754px;top:1177px;width:10px;height:1.7px;background:#5f8058;opacity:0.45"></div><div class="a" style="left:1750px;top:1181px;width:8px;height:1.7px;background:#86bb7d"></div><div class="a" style="left:1758px;top:1181px;width:16px;height:1.7px;background:#c9b9ad"></div><div class="a" style="left:1774px;top:1181px;width:4px;height:1.7px;background:#838383"></div><div class="a" style="left:1778px;top:1181px;width:16px;height:1.7px;background:#c9b9ad"></div><div class="a" style="left:1796px;top:1181px;width:24px;height:1.7px;background:#8e9ff3"></div><div class="a" style="left:1820px;top:1181px;width:6px;height:1.7px;background:#838383"></div><div class="a" style="left:1826px;top:1181px;width:26px;height:1.7px;background:#c9b9ad"></div><div class="a" style="left:1750px;top:1185px;width:20px;height:1.7px;background:#8e9ff3"></div><div class="a" style="left:1770px;top:1185px;width:4px;height:1.7px;background:#838383"></div><div class="a" style="left:1774px;top:1185px;width:4px;height:1.7px;background:#86bb7d"></div><div class="a" style="left:1778px;top:1185px;width:34px;height:1.7px;background:#c9b9ad"></div><div class="a" style="left:1812px;top:1185px;width:10px;height:1.7px;background:#86bb7d"></div><div class="a" style="left:1822px;top:1185px;width:8px;height:1.7px;background:#838383"></div><div class="a" style="left:1750px;top:1193px;width:90px;height:1.7px;background:#bcbcbc"></div><div class="a" style="left:1754px;top:1197px;width:8px;height:1.7px;background:#86bb7d"></div><div class="a" style="left:1762px;top:1197px;width:32px;height:1.7px;background:#c9b9ad"></div><div class="a" style="left:1794px;top:1197px;width:4px;height:1.7px;background:#838383"></div><div class="a" style="left:1798px;top:1197px;width:10px;height:1.7px;background:#c9b9ad"></div><div class="a" style="left:1810px;top:1197px;width:26px;height:1.7px;background:#8e9ff3"></div><div class="a" style="left:1836px;top:1197px;width:16px;height:1.7px;background:#838383"></div><div class="a" style="left:1852px;top:1197px;width:16px;height:1.7px;background:#c9b9ad"></div><div class="a" style="left:1758px;top:1201px;width:4px;height:1.7px;background:#5f8058"></div><div class="a" style="left:1764px;top:1201px;width:30px;height:1.7px;background:#8e9ff3"></div><div class="a" style="left:1794px;top:1201px;width:10px;height:1.7px;background:#838383"></div><div class="a" style="left:1750px;top:1205px;width:4px;height:1.7px;background:#5f8058"></div><div class="a" style="left:1756px;top:1205px;width:44px;height:1.7px;background:#8e9ff3"></div><div class="a" style="left:1800px;top:1205px;width:4px;height:1.7px;background:#838383"></div><div class="a" style="left:1758px;top:1209px;width:8px;height:1.7px;background:#86bb7d"></div><div class="a" style="left:1766px;top:1209px;width:26px;height:1.7px;background:#c9b9ad"></div><div class="a" style="left:1792px;top:1209px;width:4px;height:1.7px;background:#838383"></div><div class="a" style="left:1796px;top:1209px;width:4px;height:1.7px;background:#86bb7d"></div><div class="a" style="left:1800px;top:1209px;width:24px;height:1.7px;background:#c9b9ad"></div><div class="a" style="left:1824px;top:1209px;width:20px;height:1.7px;background:#838383"></div><div class="a" style="left:1844px;top:1209px;width:10px;height:1.7px;background:#8e9ff3"></div><div class="a" style="left:1750px;top:1213px;width:8px;height:1.7px;background:#86bb7d"></div><div class="a" style="left:1758px;top:1213px;width:16px;height:1.7px;background:#c9b9ad"></div><div class="a" style="left:1774px;top:1213px;width:4px;height:1.7px;background:#838383"></div><div class="a" style="left:1778px;top:1213px;width:18px;height:1.7px;background:#c9b9ad"></div><div class="a" style="left:1798px;top:1213px;width:14px;height:1.7px;background:#8e9ff3"></div><div class="a" style="left:1812px;top:1213px;width:16px;height:1.7px;background:#838383"></div><div class="a" style="left:1828px;top:1213px;width:34px;height:1.7px;background:#c9b9ad"></div><div class="a" style="left:1754px;top:1217px;width:14px;height:1.7px;background:#5f8058"></div><div class="a" style="left:1758px;top:1221px;width:6px;height:1.7px;background:#5f8058"></div><div class="a" style="left:1766px;top:1221px;width:24px;height:1.7px;background:#8e9ff3"></div><div class="a" style="left:1792px;top:1221px;width:2px;height:1.7px;background:#838383"></div><div class="a" style="left:1796px;top:1221px;width:16px;height:1.7px;background:#86bb7d"></div><div class="a" style="left:1746px;top:1233px;width:40px;height:1.7px;background:#86bb7d;opacity:0.4"></div><div class="a" style="left:1786px;top:1233px;width:28px;height:1.7px;background:#8e9ff3;opacity:0.4"></div><div class="a" style="left:1814px;top:1233px;width:20px;height:1.7px;background:#838383;opacity:0.4"></div><div class="a" style="left:1750px;top:1237px;width:24px;height:1.7px;background:#86bb7d;opacity:0.4"></div><div class="a" style="left:1750px;top:1241px;width:8px;height:1.7px;background:#86bb7d;opacity:0.45"></div><div class="a" style="left:1758px;top:1241px;width:18px;height:1.7px;background:#c9b9ad;opacity:0.45"></div><div class="a" style="left:1776px;top:1241px;width:4px;height:1.7px;background:#838383;opacity:0.45"></div><div class="a" style="left:1780px;top:1241px;width:10px;height:1.7px;background:#c9b9ad;opacity:0.45"></div><div class="a" style="left:1792px;top:1241px;width:16px;height:1.7px;background:#8e9ff3;opacity:0.45"></div><div class="a" style="left:1808px;top:1241px;width:28px;height:1.7px;background:#838383;opacity:0.45"></div><div class="a" style="left:1836px;top:1241px;width:18px;height:1.7px;background:#c9b9ad;opacity:0.45"></div><div class="a" style="left:1762px;top:1245px;width:96px;height:1.7px;background:#bcbcbc;opacity:0.45"></div><div class="a" style="left:1750px;top:1249px;width:18px;height:1.7px;background:#8e9ff3;opacity:0.45"></div><div class="a" style="left:1768px;top:1249px;width:4px;height:1.7px;background:#838383;opacity:0.45"></div><div class="a" style="left:1772px;top:1249px;width:4px;height:1.7px;background:#86bb7d;opacity:0.45"></div><div class="a" style="left:1776px;top:1249px;width:16px;height:1.7px;background:#c9b9ad;opacity:0.45"></div><div class="a" style="left:1792px;top:1249px;width:18px;height:1.7px;background:#86bb7d;opacity:0.45"></div><div class="a" style="left:1810px;top:1249px;width:6px;height:1.7px;background:#838383;opacity:0.45"></div><div class="a" style="left:1762px;top:1253px;width:8px;height:1.7px;background:#86bb7d"></div><div class="a" style="left:1770px;top:1253px;width:22px;height:1.7px;background:#c9b9ad"></div><div class="a" style="left:1792px;top:1253px;width:4px;height:1.7px;background:#838383"></div><div class="a" style="left:1796px;top:1253px;width:12px;height:1.7px;background:#c9b9ad"></div><div class="a" style="left:1810px;top:1253px;width:16px;height:1.7px;background:#8e9ff3"></div><div class="a" style="left:1826px;top:1253px;width:12px;height:1.7px;background:#838383"></div><div class="a" style="left:1838px;top:1253px;width:30px;height:1.7px;background:#c9b9ad"></div><div class="a" style="left:1754px;top:1257px;width:4px;height:1.7px;background:#5f8058"></div><div class="a" style="left:1760px;top:1257px;width:42px;height:1.7px;background:#8e9ff3"></div><div class="a" style="left:1802px;top:1257px;width:12px;height:1.7px;background:#838383"></div><div class="a" style="left:1754px;top:1261px;width:8px;height:1.7px;background:#86bb7d"></div><div class="a" style="left:1762px;top:1261px;width:28px;height:1.7px;background:#c9b9ad"></div><div class="a" style="left:1790px;top:1261px;width:4px;height:1.7px;background:#838383"></div><div class="a" style="left:1794px;top:1261px;width:10px;height:1.7px;background:#c9b9ad"></div><div class="a" style="left:1806px;top:1261px;width:28px;height:1.7px;background:#8e9ff3"></div><div class="a" style="left:1834px;top:1261px;width:28px;height:1.7px;background:#838383"></div><div class="a" style="left:1862px;top:1261px;width:6px;height:1.7px;background:#c9b9ad"></div><div class="a" style="left:1754px;top:1265px;width:18px;height:1.7px;background:#8e9ff3"></div><div class="a" style="left:1772px;top:1265px;width:4px;height:1.7px;background:#838383"></div><div class="a" style="left:1776px;top:1265px;width:4px;height:1.7px;background:#86bb7d"></div><div class="a" style="left:1780px;top:1265px;width:16px;height:1.7px;background:#c9b9ad"></div><div class="a" style="left:1796px;top:1265px;width:20px;height:1.7px;background:#86bb7d"></div><div class="a" style="left:1816px;top:1265px;width:12px;height:1.7px;background:#838383"></div><div class="a" style="left:1754px;top:1269px;width:8px;height:1.7px;background:#5f8058"></div><div class="a" style="left:1754px;top:1273px;width:8px;height:1.7px;background:#86bb7d"></div><div class="a" style="left:1762px;top:1273px;width:26px;height:1.7px;background:#c9b9ad"></div><div class="a" style="left:1788px;top:1273px;width:4px;height:1.7px;background:#838383"></div><div class="a" style="left:1792px;top:1273px;width:4px;height:1.7px;background:#86bb7d"></div><div class="a" style="left:1796px;top:1273px;width:24px;height:1.7px;background:#c9b9ad"></div><div class="a" style="left:1820px;top:1273px;width:12px;height:1.7px;background:#838383"></div><div class="a" style="left:1832px;top:1273px;width:22px;height:1.7px;background:#8e9ff3"></div><div class="a" style="left:1758px;top:1277px;width:8px;height:1.7px;background:#86bb7d"></div><div class="a" style="left:1766px;top:1277px;width:20px;height:1.7px;background:#c9b9ad"></div><div class="a" style="left:1786px;top:1277px;width:4px;height:1.7px;background:#838383"></div><div class="a" style="left:1790px;top:1277px;width:12px;height:1.7px;background:#c9b9ad"></div><div class="a" style="left:1804px;top:1277px;width:16px;height:1.7px;background:#8e9ff3"></div><div class="a" style="left:1820px;top:1277px;width:28px;height:1.7px;background:#838383"></div><div class="a" style="left:1848px;top:1277px;width:20px;height:1.7px;background:#c9b9ad"></div><div class="a" style="left:1750px;top:1281px;width:4px;height:1.7px;background:#5f8058"></div><div class="a" style="left:1756px;top:1281px;width:34px;height:1.7px;background:#8e9ff3"></div><div class="a" style="left:1790px;top:1281px;width:8px;height:1.7px;background:#838383"></div><div class="a" style="left:1750px;top:1285px;width:6px;height:1.7px;background:#5f8058"></div><div class="a" style="left:1758px;top:1285px;width:16px;height:1.7px;background:#8e9ff3"></div><div class="a" style="left:1776px;top:1285px;width:2px;height:1.7px;background:#838383"></div><div class="a" style="left:1780px;top:1285px;width:8px;height:1.7px;background:#86bb7d"></div><div class="a" style="left:1750px;top:1289px;width:8px;height:1.7px;background:#5f8058"></div><div class="a" style="left:1750px;top:1293px;width:8px;height:1.7px;background:#86bb7d"></div><div class="a" style="left:1758px;top:1293px;width:26px;height:1.7px;background:#c9b9ad"></div><div class="a" style="left:1784px;top:1293px;width:4px;height:1.7px;background:#838383"></div><div class="a" style="left:1788px;top:1293px;width:4px;height:1.7px;background:#86bb7d"></div><div class="a" style="left:1792px;top:1293px;width:24px;height:1.7px;background:#c9b9ad"></div><div class="a" style="left:1816px;top:1293px;width:8px;height:1.7px;background:#838383"></div><div class="a" style="left:1824px;top:1293px;width:24px;height:1.7px;background:#8e9ff3"></div><div class="a" style="left:1746px;top:1305px;width:40px;height:1.7px;background:#86bb7d;opacity:0.4"></div><div class="a" style="left:1786px;top:1305px;width:28px;height:1.7px;background:#8e9ff3;opacity:0.4"></div><div class="a" style="left:1814px;top:1305px;width:20px;height:1.7px;background:#838383;opacity:0.4"></div><div class="a" style="left:1750px;top:1309px;width:24px;height:1.7px;background:#86bb7d;opacity:0.4"></div><div class="a" style="left:1754px;top:1313px;width:60px;height:1.7px;background:#bcbcbc;opacity:0.45"></div><div class="a" style="left:1750px;top:1317px;width:14px;height:1.7px;background:#5f8058;opacity:0.45"></div><div class="a" style="left:1758px;top:1321px;width:8px;height:1.7px;background:#86bb7d;opacity:0.45"></div><div class="a" style="left:1766px;top:1321px;width:20px;height:1.7px;background:#c9b9ad;opacity:0.45"></div><div class="a" style="left:1786px;top:1321px;width:4px;height:1.7px;background:#838383;opacity:0.45"></div><div class="a" style="left:1790px;top:1321px;width:18px;height:1.7px;background:#c9b9ad;opacity:0.45"></div><div class="a" style="left:1810px;top:1321px;width:20px;height:1.7px;background:#8e9ff3;opacity:0.45"></div><div class="a" style="left:1830px;top:1321px;width:14px;height:1.7px;background:#838383;opacity:0.45"></div><div class="a" style="left:1844px;top:1321px;width:24px;height:1.7px;background:#c9b9ad;opacity:0.45"></div><div class="a" style="left:1754px;top:1325px;width:8px;height:1.7px;background:#86bb7d"></div><div class="a" style="left:1762px;top:1325px;width:20px;height:1.7px;background:#c9b9ad"></div><div class="a" style="left:1782px;top:1325px;width:4px;height:1.7px;background:#838383"></div><div class="a" style="left:1786px;top:1325px;width:4px;height:1.7px;background:#86bb7d"></div><div class="a" style="left:1790px;top:1325px;width:24px;height:1.7px;background:#c9b9ad"></div><div class="a" style="left:1814px;top:1325px;width:12px;height:1.7px;background:#838383"></div><div class="a" style="left:1826px;top:1325px;width:10px;height:1.7px;background:#8e9ff3"></div><div class="a" style="left:1750px;top:1329px;width:4px;height:1.7px;background:#5f8058"></div><div class="a" style="left:1756px;top:1329px;width:36px;height:1.7px;background:#8e9ff3"></div><div class="a" style="left:1792px;top:1329px;width:10px;height:1.7px;background:#838383"></div><div class="a" style="left:1750px;top:1333px;width:4px;height:1.7px;background:#5f8058"></div><div class="a" style="left:1756px;top:1333px;width:16px;height:1.7px;background:#8e9ff3"></div><div class="a" style="left:1772px;top:1333px;width:10px;height:1.7px;background:#838383"></div><div class="a" style="left:1762px;top:1337px;width:6px;height:1.7px;background:#5f8058"></div><div class="a" style="left:1770px;top:1337px;width:14px;height:1.7px;background:#8e9ff3"></div><div class="a" style="left:1786px;top:1337px;width:2px;height:1.7px;background:#838383"></div><div class="a" style="left:1790px;top:1337px;width:14px;height:1.7px;background:#86bb7d"></div><div class="a" style="left:1754px;top:1341px;width:8px;height:1.7px;background:#86bb7d"></div><div class="a" style="left:1762px;top:1341px;width:22px;height:1.7px;background:#c9b9ad"></div><div class="a" style="left:1784px;top:1341px;width:4px;height:1.7px;background:#838383"></div><div class="a" style="left:1788px;top:1341px;width:4px;height:1.7px;background:#86bb7d"></div><div class="a" style="left:1792px;top:1341px;width:24px;height:1.7px;background:#c9b9ad"></div><div class="a" style="left:1816px;top:1341px;width:12px;height:1.7px;background:#838383"></div><div class="a" style="left:1828px;top:1341px;width:20px;height:1.7px;background:#8e9ff3"></div><div class="a" style="left:1754px;top:1345px;width:8px;height:1.7px;background:#86bb7d"></div><div class="a" style="left:1762px;top:1345px;width:26px;height:1.7px;background:#c9b9ad"></div><div class="a" style="left:1788px;top:1345px;width:4px;height:1.7px;background:#838383"></div><div class="a" style="left:1792px;top:1345px;width:4px;height:1.7px;background:#86bb7d"></div><div class="a" style="left:1796px;top:1345px;width:24px;height:1.7px;background:#c9b9ad"></div><div class="a" style="left:1820px;top:1345px;width:16px;height:1.7px;background:#838383"></div><div class="a" style="left:1836px;top:1345px;width:10px;height:1.7px;background:#8e9ff3"></div><div class="a" style="left:1754px;top:1349px;width:14px;height:1.7px;background:#8e9ff3"></div><div class="a" style="left:1768px;top:1349px;width:4px;height:1.7px;background:#838383"></div><div class="a" style="left:1772px;top:1349px;width:4px;height:1.7px;background:#86bb7d"></div><div class="a" style="left:1776px;top:1349px;width:22px;height:1.7px;background:#c9b9ad"></div><div class="a" style="left:1798px;top:1349px;width:16px;height:1.7px;background:#86bb7d"></div><div class="a" style="left:1814px;top:1349px;width:8px;height:1.7px;background:#838383"></div><div class="a" style="left:1758px;top:1353px;width:24px;height:1.7px;background:#8e9ff3"></div><div class="a" style="left:1782px;top:1353px;width:4px;height:1.7px;background:#838383"></div><div class="a" style="left:1786px;top:1353px;width:4px;height:1.7px;background:#86bb7d"></div><div class="a" style="left:1790px;top:1353px;width:14px;height:1.7px;background:#c9b9ad"></div><div class="a" style="left:1804px;top:1353px;width:10px;height:1.7px;background:#86bb7d"></div><div class="a" style="left:1814px;top:1353px;width:6px;height:1.7px;background:#838383"></div><div class="a" style="left:1750px;top:1357px;width:4px;height:1.7px;background:#5f8058"></div><div class="a" style="left:1756px;top:1357px;width:38px;height:1.7px;background:#8e9ff3"></div><div class="a" style="left:1794px;top:1357px;width:6px;height:1.7px;background:#838383"></div><div class="a" style="left:1758px;top:1361px;width:94px;height:1.7px;background:#bcbcbc"></div><div class="a" style="left:1746px;top:1373px;width:40px;height:1.7px;background:#86bb7d;opacity:0.4"></div><div class="a" style="left:1786px;top:1373px;width:28px;height:1.7px;background:#8e9ff3;opacity:0.4"></div><div class="a" style="left:1814px;top:1373px;width:20px;height:1.7px;background:#838383;opacity:0.4"></div><div class="a" style="left:1750px;top:1377px;width:24px;height:1.7px;background:#86bb7d;opacity:0.4"></div><div class="a" style="left:1750px;top:1381px;width:40px;height:1.7px;background:#bcbcbc;opacity:0.45"></div><div class="a" style="left:1750px;top:1385px;width:14px;height:1.7px;background:#8e9ff3;opacity:0.45"></div><div class="a" style="left:1764px;top:1385px;width:4px;height:1.7px;background:#838383;opacity:0.45"></div><div class="a" style="left:1768px;top:1385px;width:4px;height:1.7px;background:#86bb7d;opacity:0.45"></div><div class="a" style="left:1772px;top:1385px;width:22px;height:1.7px;background:#c9b9ad;opacity:0.45"></div><div class="a" style="left:1794px;top:1385px;width:20px;height:1.7px;background:#86bb7d;opacity:0.45"></div><div class="a" style="left:1814px;top:1385px;width:12px;height:1.7px;background:#838383;opacity:0.45"></div><div class="a" style="left:1754px;top:1389px;width:14px;height:1.7px;background:#5f8058;opacity:0.45"></div><div class="a" style="left:1758px;top:1393px;width:4px;height:1.7px;background:#5f8058"></div><div class="a" style="left:1764px;top:1393px;width:38px;height:1.7px;background:#8e9ff3"></div><div class="a" style="left:1802px;top:1393px;width:10px;height:1.7px;background:#838383"></div><div class="a" style="left:1758px;top:1397px;width:8px;height:1.7px;background:#86bb7d"></div><div class="a" style="left:1766px;top:1397px;width:22px;height:1.7px;background:#c9b9ad"></div><div class="a" style="left:1788px;top:1397px;width:4px;height:1.7px;background:#838383"></div><div class="a" style="left:1792px;top:1397px;width:4px;height:1.7px;background:#86bb7d"></div><div class="a" style="left:1796px;top:1397px;width:24px;height:1.7px;background:#c9b9ad"></div><div class="a" style="left:1820px;top:1397px;width:18px;height:1.7px;background:#838383"></div><div class="a" style="left:1838px;top:1397px;width:24px;height:1.7px;background:#8e9ff3"></div><div class="a" style="left:1758px;top:1405px;width:26px;height:1.7px;background:#8e9ff3"></div><div class="a" style="left:1784px;top:1405px;width:4px;height:1.7px;background:#838383"></div><div class="a" style="left:1788px;top:1405px;width:4px;height:1.7px;background:#86bb7d"></div><div class="a" style="left:1792px;top:1405px;width:14px;height:1.7px;background:#c9b9ad"></div><div class="a" style="left:1806px;top:1405px;width:24px;height:1.7px;background:#86bb7d"></div><div class="a" style="left:1830px;top:1405px;width:10px;height:1.7px;background:#838383"></div><div class="a" style="left:1758px;top:1409px;width:8px;height:1.7px;background:#5f8058"></div><div class="a" style="left:1750px;top:1413px;width:6px;height:1.7px;background:#5f8058"></div><div class="a" style="left:1758px;top:1413px;width:28px;height:1.7px;background:#8e9ff3"></div><div class="a" style="left:1788px;top:1413px;width:2px;height:1.7px;background:#838383"></div><div class="a" style="left:1792px;top:1413px;width:12px;height:1.7px;background:#86bb7d"></div><div class="a" style="left:1758px;top:1417px;width:8px;height:1.7px;background:#86bb7d"></div><div class="a" style="left:1766px;top:1417px;width:32px;height:1.7px;background:#c9b9ad"></div><div class="a" style="left:1798px;top:1417px;width:4px;height:1.7px;background:#838383"></div><div class="a" style="left:1802px;top:1417px;width:8px;height:1.7px;background:#c9b9ad"></div><div class="a" style="left:1812px;top:1417px;width:18px;height:1.7px;background:#8e9ff3"></div><div class="a" style="left:1830px;top:1417px;width:20px;height:1.7px;background:#838383"></div><div class="a" style="left:1850px;top:1417px;width:18px;height:1.7px;background:#c9b9ad"></div><div class="a" style="left:1750px;top:1421px;width:4px;height:1.7px;background:#5f8058"></div><div class="a" style="left:1756px;top:1421px;width:22px;height:1.7px;background:#8e9ff3"></div><div class="a" style="left:1778px;top:1421px;width:4px;height:1.7px;background:#838383"></div><div class="a" style="left:1762px;top:1425px;width:8px;height:1.7px;background:#86bb7d"></div><div class="a" style="left:1770px;top:1425px;width:26px;height:1.7px;background:#c9b9ad"></div><div class="a" style="left:1796px;top:1425px;width:4px;height:1.7px;background:#838383"></div><div class="a" style="left:1800px;top:1425px;width:10px;height:1.7px;background:#c9b9ad"></div><div class="a" style="left:1812px;top:1425px;width:14px;height:1.7px;background:#8e9ff3"></div><div class="a" style="left:1826px;top:1425px;width:14px;height:1.7px;background:#838383"></div><div class="a" style="left:1840px;top:1425px;width:24px;height:1.7px;background:#c9b9ad"></div><div class="a" style="left:1750px;top:1429px;width:8px;height:1.7px;background:#86bb7d"></div><div class="a" style="left:1758px;top:1429px;width:20px;height:1.7px;background:#c9b9ad"></div><div class="a" style="left:1778px;top:1429px;width:4px;height:1.7px;background:#838383"></div><div class="a" style="left:1782px;top:1429px;width:8px;height:1.7px;background:#c9b9ad"></div><div class="a" style="left:1792px;top:1429px;width:28px;height:1.7px;background:#8e9ff3"></div><div class="a" style="left:1820px;top:1429px;width:20px;height:1.7px;background:#838383"></div><div class="a" style="left:1840px;top:1429px;width:12px;height:1.7px;background:#c9b9ad"></div><div class="a" style="left:1754px;top:1433px;width:6px;height:1.7px;background:#5f8058"></div><div class="a" style="left:1762px;top:1433px;width:22px;height:1.7px;background:#8e9ff3"></div><div class="a" style="left:1786px;top:1433px;width:2px;height:1.7px;background:#838383"></div><div class="a" style="left:1790px;top:1433px;width:16px;height:1.7px;background:#86bb7d"></div><div class="a" style="left:1750px;top:1437px;width:22px;height:1.7px;background:#8e9ff3"></div><div class="a" style="left:1772px;top:1437px;width:4px;height:1.7px;background:#838383"></div><div class="a" style="left:1776px;top:1437px;width:4px;height:1.7px;background:#86bb7d"></div><div class="a" style="left:1780px;top:1437px;width:18px;height:1.7px;background:#c9b9ad"></div><div class="a" style="left:1798px;top:1437px;width:18px;height:1.7px;background:#86bb7d"></div><div class="a" style="left:1816px;top:1437px;width:16px;height:1.7px;background:#838383"></div><div class="a" style="left:1750px;top:1441px;width:8px;height:1.7px;background:#86bb7d"></div><div class="a" style="left:1758px;top:1441px;width:28px;height:1.7px;background:#c9b9ad"></div><div class="a" style="left:1786px;top:1441px;width:4px;height:1.7px;background:#838383"></div><div class="a" style="left:1790px;top:1441px;width:8px;height:1.7px;background:#c9b9ad"></div><div class="a" style="left:1800px;top:1441px;width:16px;height:1.7px;background:#8e9ff3"></div><div class="a" style="left:1816px;top:1441px;width:12px;height:1.7px;background:#838383"></div><div class="a" style="left:1828px;top:1441px;width:32px;height:1.7px;background:#c9b9ad"></div><div class="a" style="left:1750px;top:1445px;width:6px;height:1.7px;background:#5f8058"></div><div class="a" style="left:1758px;top:1445px;width:24px;height:1.7px;background:#8e9ff3"></div><div class="a" style="left:1784px;top:1445px;width:2px;height:1.7px;background:#838383"></div><div class="a" style="left:1788px;top:1445px;width:14px;height:1.7px;background:#86bb7d"></div><div class="a" style="left:1750px;top:1453px;width:8px;height:1.7px;background:#86bb7d"></div><div class="a" style="left:1758px;top:1453px;width:20px;height:1.7px;background:#c9b9ad"></div><div class="a" style="left:1778px;top:1453px;width:4px;height:1.7px;background:#838383"></div><div class="a" style="left:1782px;top:1453px;width:10px;height:1.7px;background:#c9b9ad"></div><div class="a" style="left:1794px;top:1453px;width:28px;height:1.7px;background:#8e9ff3"></div><div class="a" style="left:1822px;top:1453px;width:8px;height:1.7px;background:#838383"></div><div class="a" style="left:1830px;top:1453px;width:24px;height:1.7px;background:#c9b9ad"></div><div class="a" style="left:1758px;top:1457px;width:40px;height:1.7px;background:#bcbcbc"></div><div class="a" style="left:1750px;top:1461px;width:26px;height:1.7px;background:#8e9ff3"></div><div class="a" style="left:1776px;top:1461px;width:4px;height:1.7px;background:#838383"></div><div class="a" style="left:1780px;top:1461px;width:4px;height:1.7px;background:#86bb7d"></div><div class="a" style="left:1784px;top:1461px;width:30px;height:1.7px;background:#c9b9ad"></div><div class="a" style="left:1814px;top:1461px;width:10px;height:1.7px;background:#86bb7d"></div><div class="a" style="left:1824px;top:1461px;width:10px;height:1.7px;background:#838383"></div><div class="a" style="left:1758px;top:1465px;width:14px;height:1.7px;background:#5f8058"></div><div class="a" style="left:1762px;top:1469px;width:14px;height:1.7px;background:#5f8058"></div><div class="a" style="left:1750px;top:1473px;width:8px;height:1.7px;background:#86bb7d"></div><div class="a" style="left:1758px;top:1473px;width:32px;height:1.7px;background:#c9b9ad"></div><div class="a" style="left:1790px;top:1473px;width:4px;height:1.7px;background:#838383"></div><div class="a" style="left:1794px;top:1473px;width:10px;height:1.7px;background:#c9b9ad"></div><div class="a" style="left:1806px;top:1473px;width:28px;height:1.7px;background:#8e9ff3"></div><div class="a" style="left:1834px;top:1473px;width:20px;height:1.7px;background:#838383"></div><div class="a" style="left:1854px;top:1473px;width:14px;height:1.7px;background:#c9b9ad"></div><div class="a" style="left:1750px;top:1477px;width:12px;height:1.7px;background:#8e9ff3"></div><div class="a" style="left:1762px;top:1477px;width:4px;height:1.7px;background:#838383"></div><div class="a" style="left:1766px;top:1477px;width:4px;height:1.7px;background:#86bb7d"></div><div class="a" style="left:1770px;top:1477px;width:20px;height:1.7px;background:#c9b9ad"></div><div class="a" style="left:1790px;top:1477px;width:20px;height:1.7px;background:#86bb7d"></div><div class="a" style="left:1810px;top:1477px;width:14px;height:1.7px;background:#838383"></div><div class="a" style="left:1758px;top:1481px;width:12px;height:1.7px;background:#5f8058"></div><div class="a" style="left:1750px;top:1485px;width:6px;height:1.7px;background:#5f8058"></div><div class="a" style="left:1758px;top:1485px;width:26px;height:1.7px;background:#8e9ff3"></div><div class="a" style="left:1786px;top:1485px;width:2px;height:1.7px;background:#838383"></div><div class="a" style="left:1790px;top:1485px;width:10px;height:1.7px;background:#86bb7d"></div><div class="a" style="left:1758px;top:1489px;width:8px;height:1.7px;background:#86bb7d"></div><div class="a" style="left:1766px;top:1489px;width:26px;height:1.7px;background:#c9b9ad"></div><div class="a" style="left:1792px;top:1489px;width:4px;height:1.7px;background:#838383"></div><div class="a" style="left:1796px;top:1489px;width:4px;height:1.7px;background:#86bb7d"></div><div class="a" style="left:1800px;top:1489px;width:24px;height:1.7px;background:#c9b9ad"></div><div class="a" style="left:1824px;top:1489px;width:18px;height:1.7px;background:#838383"></div><div class="a" style="left:1842px;top:1489px;width:10px;height:1.7px;background:#8e9ff3"></div><div class="a" style="left:1754px;top:1493px;width:8px;height:1.7px;background:#86bb7d"></div><div class="a" style="left:1762px;top:1493px;width:36px;height:1.7px;background:#c9b9ad"></div><div class="a" style="left:1798px;top:1493px;width:4px;height:1.7px;background:#838383"></div><div class="a" style="left:1802px;top:1493px;width:12px;height:1.7px;background:#c9b9ad"></div><div class="a" style="left:1816px;top:1493px;width:18px;height:1.7px;background:#8e9ff3"></div><div class="a" style="left:1834px;top:1493px;width:6px;height:1.7px;background:#838383"></div><div class="a" style="left:1840px;top:1493px;width:28px;height:1.7px;background:#c9b9ad"></div><div class="a" style="left:1758px;top:1497px;width:8px;height:1.7px;background:#86bb7d"></div><div class="a" style="left:1766px;top:1497px;width:20px;height:1.7px;background:#c9b9ad"></div><div class="a" style="left:1786px;top:1497px;width:4px;height:1.7px;background:#838383"></div><div class="a" style="left:1790px;top:1497px;width:8px;height:1.7px;background:#c9b9ad"></div><div class="a" style="left:1800px;top:1497px;width:24px;height:1.7px;background:#8e9ff3"></div><div class="a" style="left:1824px;top:1497px;width:22px;height:1.7px;background:#838383"></div><div class="a" style="left:1846px;top:1497px;width:14px;height:1.7px;background:#c9b9ad"></div><div class="a" style="left:1746px;top:1509px;width:40px;height:1.7px;background:#86bb7d;opacity:0.4"></div><div class="a" style="left:1786px;top:1509px;width:28px;height:1.7px;background:#8e9ff3;opacity:0.4"></div><div class="a" style="left:1814px;top:1509px;width:20px;height:1.7px;background:#838383;opacity:0.4"></div><div class="a" style="left:1750px;top:1513px;width:24px;height:1.7px;background:#86bb7d;opacity:0.4"></div><div class="a" style="left:1750px;top:1517px;width:8px;height:1.7px;background:#86bb7d;opacity:0.45"></div><div class="a" style="left:1758px;top:1517px;width:20px;height:1.7px;background:#c9b9ad;opacity:0.45"></div><div class="a" style="left:1778px;top:1517px;width:4px;height:1.7px;background:#838383;opacity:0.45"></div><div class="a" style="left:1782px;top:1517px;width:6px;height:1.7px;background:#c9b9ad;opacity:0.45"></div><div class="a" style="left:1790px;top:1517px;width:28px;height:1.7px;background:#8e9ff3;opacity:0.45"></div><div class="a" style="left:1818px;top:1517px;width:22px;height:1.7px;background:#838383;opacity:0.45"></div><div class="a" style="left:1840px;top:1517px;width:28px;height:1.7px;background:#c9b9ad;opacity:0.45"></div><div class="a" style="left:1754px;top:1525px;width:58px;height:1.7px;background:#bcbcbc;opacity:0.45"></div><div class="a" style="left:1746px;top:1541px;width:40px;height:1.7px;background:#86bb7d;opacity:0.45"></div><div class="a" style="left:1786px;top:1541px;width:24px;height:1.7px;background:#8e9ff3;opacity:0.45"></div><div class="a" style="left:1750px;top:1545px;width:20px;height:1.7px;background:#86bb7d;opacity:0.45"></div><div class="a" style="left:1754px;top:1549px;width:12px;height:1.7px;background:#86bb7d;opacity:0.45"></div><div class="a" style="left:1768px;top:1549px;width:6px;height:1.7px;background:#86bb7d;opacity:0.45"></div><div class="a" style="left:1776px;top:1549px;width:10px;height:1.7px;background:#86bb7d;opacity:0.45"></div><div class="a" style="left:1786px;top:1549px;width:6px;height:1.7px;background:#838383;opacity:0.45"></div><div class="a" style="left:1794px;top:1549px;width:20px;height:1.7px;background:#838383;opacity:0.45"></div><div class="a" style="left:1816px;top:1549px;width:4px;height:1.7px;background:#86bb7d;opacity:0.45"></div><div class="a" style="left:1820px;top:1549px;width:24px;height:1.7px;background:#c9b9ad;opacity:0.45"></div><div class="a" style="left:1844px;top:1549px;width:10px;height:1.7px;background:#838383;opacity:0.45"></div><div class="a" style="left:1754px;top:1553px;width:12px;height:1.7px;background:#86bb7d;opacity:0.45"></div><div class="a" style="left:1768px;top:1553px;width:6px;height:1.7px;background:#86bb7d;opacity:0.45"></div><div class="a" style="left:1776px;top:1553px;width:10px;height:1.7px;background:#86bb7d;opacity:0.45"></div><div class="a" style="left:1786px;top:1553px;width:6px;height:1.7px;background:#838383;opacity:0.45"></div><div class="a" style="left:1794px;top:1553px;width:22px;height:1.7px;background:#838383;opacity:0.45"></div><div class="a" style="left:1818px;top:1553px;width:4px;height:1.7px;background:#86bb7d;opacity:0.45"></div><div class="a" style="left:1822px;top:1553px;width:24px;height:1.7px;background:#c9b9ad;opacity:0.45"></div><div class="a" style="left:1846px;top:1553px;width:10px;height:1.7px;background:#838383;opacity:0.45"></div><div class="a" style="left:1754px;top:1557px;width:12px;height:1.7px;background:#86bb7d;opacity:0.45"></div><div class="a" style="left:1768px;top:1557px;width:6px;height:1.7px;background:#86bb7d;opacity:0.45"></div><div class="a" style="left:1776px;top:1557px;width:10px;height:1.7px;background:#86bb7d;opacity:0.45"></div><div class="a" style="left:1786px;top:1557px;width:6px;height:1.7px;background:#838383;opacity:0.45"></div><div class="a" style="left:1794px;top:1557px;width:24px;height:1.7px;background:#838383;opacity:0.45"></div><div class="a" style="left:1820px;top:1557px;width:4px;height:1.7px;background:#86bb7d;opacity:0.45"></div><div class="a" style="left:1824px;top:1557px;width:24px;height:1.7px;background:#c9b9ad;opacity:0.45"></div><div class="a" style="left:1848px;top:1557px;width:10px;height:1.7px;background:#838383;opacity:0.45"></div><div class="a" style="left:1754px;top:1561px;width:12px;height:1.7px;background:#86bb7d"></div><div class="a" style="left:1768px;top:1561px;width:6px;height:1.7px;background:#86bb7d"></div><div class="a" style="left:1776px;top:1561px;width:10px;height:1.7px;background:#86bb7d"></div><div class="a" style="left:1786px;top:1561px;width:6px;height:1.7px;background:#838383"></div><div class="a" style="left:1794px;top:1561px;width:26px;height:1.7px;background:#838383"></div><div class="a" style="left:1822px;top:1561px;width:4px;height:1.7px;background:#86bb7d"></div><div class="a" style="left:1826px;top:1561px;width:24px;height:1.7px;background:#c9b9ad"></div><div class="a" style="left:1850px;top:1561px;width:10px;height:1.7px;background:#838383"></div><div class="a" style="left:1754px;top:1565px;width:12px;height:1.7px;background:#86bb7d"></div><div class="a" style="left:1768px;top:1565px;width:6px;height:1.7px;background:#86bb7d"></div><div class="a" style="left:1776px;top:1565px;width:10px;height:1.7px;background:#86bb7d"></div><div class="a" style="left:1786px;top:1565px;width:6px;height:1.7px;background:#838383"></div><div class="a" style="left:1794px;top:1565px;width:28px;height:1.7px;background:#838383"></div><div class="a" style="left:1824px;top:1565px;width:4px;height:1.7px;background:#86bb7d"></div><div class="a" style="left:1828px;top:1565px;width:24px;height:1.7px;background:#c9b9ad"></div><div class="a" style="left:1852px;top:1565px;width:10px;height:1.7px;background:#838383"></div><div class="a" style="left:1754px;top:1569px;width:12px;height:1.7px;background:#86bb7d"></div><div class="a" style="left:1768px;top:1569px;width:6px;height:1.7px;background:#86bb7d"></div><div class="a" style="left:1776px;top:1569px;width:10px;height:1.7px;background:#86bb7d"></div><div class="a" style="left:1786px;top:1569px;width:6px;height:1.7px;background:#838383"></div><div class="a" style="left:1794px;top:1569px;width:30px;height:1.7px;background:#838383"></div><div class="a" style="left:1826px;top:1569px;width:4px;height:1.7px;background:#86bb7d"></div><div class="a" style="left:1830px;top:1569px;width:24px;height:1.7px;background:#c9b9ad"></div><div class="a" style="left:1854px;top:1569px;width:10px;height:1.7px;background:#838383"></div><div class="a" style="left:1754px;top:1573px;width:12px;height:1.7px;background:#86bb7d"></div><div class="a" style="left:1768px;top:1573px;width:6px;height:1.7px;background:#86bb7d"></div><div class="a" style="left:1776px;top:1573px;width:10px;height:1.7px;background:#86bb7d"></div><div class="a" style="left:1786px;top:1573px;width:6px;height:1.7px;background:#838383"></div><div class="a" style="left:1794px;top:1573px;width:20px;height:1.7px;background:#838383"></div><div class="a" style="left:1816px;top:1573px;width:4px;height:1.7px;background:#86bb7d"></div><div class="a" style="left:1820px;top:1573px;width:24px;height:1.7px;background:#c9b9ad"></div><div class="a" style="left:1844px;top:1573px;width:10px;height:1.7px;background:#838383"></div><div class="a" style="left:1754px;top:1577px;width:12px;height:1.7px;background:#86bb7d"></div><div class="a" style="left:1768px;top:1577px;width:6px;height:1.7px;background:#86bb7d"></div><div class="a" style="left:1776px;top:1577px;width:10px;height:1.7px;background:#86bb7d"></div><div class="a" style="left:1786px;top:1577px;width:6px;height:1.7px;background:#838383"></div><div class="a" style="left:1794px;top:1577px;width:22px;height:1.7px;background:#838383"></div><div class="a" style="left:1818px;top:1577px;width:4px;height:1.7px;background:#86bb7d"></div><div class="a" style="left:1822px;top:1577px;width:24px;height:1.7px;background:#c9b9ad"></div><div class="a" style="left:1846px;top:1577px;width:10px;height:1.7px;background:#838383"></div><div class="a" style="left:1754px;top:1581px;width:12px;height:1.7px;background:#86bb7d"></div><div class="a" style="left:1768px;top:1581px;width:6px;height:1.7px;background:#86bb7d"></div><div class="a" style="left:1776px;top:1581px;width:10px;height:1.7px;background:#86bb7d"></div><div class="a" style="left:1786px;top:1581px;width:6px;height:1.7px;background:#838383"></div><div class="a" style="left:1794px;top:1581px;width:24px;height:1.7px;background:#838383"></div><div class="a" style="left:1820px;top:1581px;width:4px;height:1.7px;background:#86bb7d"></div><div class="a" style="left:1824px;top:1581px;width:24px;height:1.7px;background:#c9b9ad"></div><div class="a" style="left:1848px;top:1581px;width:10px;height:1.7px;background:#838383"></div><div class="a" style="left:1754px;top:1585px;width:12px;height:1.7px;background:#86bb7d"></div><div class="a" style="left:1768px;top:1585px;width:6px;height:1.7px;background:#86bb7d"></div><div class="a" style="left:1776px;top:1585px;width:10px;height:1.7px;background:#86bb7d"></div><div class="a" style="left:1786px;top:1585px;width:6px;height:1.7px;background:#838383"></div><div class="a" style="left:1794px;top:1585px;width:26px;height:1.7px;background:#838383"></div><div class="a" style="left:1822px;top:1585px;width:4px;height:1.7px;background:#86bb7d"></div><div class="a" style="left:1826px;top:1585px;width:24px;height:1.7px;background:#c9b9ad"></div><div class="a" style="left:1850px;top:1585px;width:10px;height:1.7px;background:#838383"></div><div class="a" style="left:1754px;top:1589px;width:12px;height:1.7px;background:#86bb7d"></div><div class="a" style="left:1768px;top:1589px;width:6px;height:1.7px;background:#86bb7d"></div><div class="a" style="left:1776px;top:1589px;width:10px;height:1.7px;background:#86bb7d"></div><div class="a" style="left:1786px;top:1589px;width:6px;height:1.7px;background:#838383"></div><div class="a" style="left:1794px;top:1589px;width:28px;height:1.7px;background:#838383"></div><div class="a" style="left:1824px;top:1589px;width:4px;height:1.7px;background:#86bb7d"></div><div class="a" style="left:1828px;top:1589px;width:24px;height:1.7px;background:#c9b9ad"></div><div class="a" style="left:1852px;top:1589px;width:10px;height:1.7px;background:#838383"></div><div class="a" style="left:1754px;top:1593px;width:12px;height:1.7px;background:#86bb7d"></div><div class="a" style="left:1768px;top:1593px;width:6px;height:1.7px;background:#86bb7d"></div><div class="a" style="left:1776px;top:1593px;width:10px;height:1.7px;background:#86bb7d"></div><div class="a" style="left:1786px;top:1593px;width:6px;height:1.7px;background:#838383"></div><div class="a" style="left:1794px;top:1593px;width:30px;height:1.7px;background:#838383"></div><div class="a" style="left:1826px;top:1593px;width:4px;height:1.7px;background:#86bb7d"></div><div class="a" style="left:1830px;top:1593px;width:24px;height:1.7px;background:#c9b9ad"></div><div class="a" style="left:1854px;top:1593px;width:10px;height:1.7px;background:#838383"></div><div class="a" style="left:1754px;top:1597px;width:12px;height:1.7px;background:#86bb7d"></div><div class="a" style="left:1768px;top:1597px;width:6px;height:1.7px;background:#86bb7d"></div><div class="a" style="left:1776px;top:1597px;width:10px;height:1.7px;background:#86bb7d"></div><div class="a" style="left:1786px;top:1597px;width:6px;height:1.7px;background:#838383"></div><div class="a" style="left:1794px;top:1597px;width:20px;height:1.7px;background:#838383"></div><div class="a" style="left:1816px;top:1597px;width:4px;height:1.7px;background:#86bb7d"></div><div class="a" style="left:1820px;top:1597px;width:24px;height:1.7px;background:#c9b9ad"></div><div class="a" style="left:1844px;top:1597px;width:10px;height:1.7px;background:#838383"></div><div class="t" style="left:1743.0px;top:357.4px;font-size:19.5px;color:#000000;letter-spacing:-0.1px;">Constructor</div><div class="t" style="left:1743.0px;top:565.4px;font-size:19.5px;color:#000000;letter-spacing:-0.1px;">Create…lient</div><div class="t" style="left:1743.0px;top:648.4px;font-size:19.5px;color:#000000;letter-spacing:-0.1px;">Load… chat)</div><div class="t" style="left:1743.0px;top:817.4px;font-size:19.5px;color:#000000;letter-spacing:-0.1px;">API k…tatus</div><div class="t" style="left:1743.0px;top:861.4px;font-size:19.5px;color:#000000;letter-spacing:-0.1px;">Event…dlers</div><div class="t" style="left:1743.0px;top:973.4px;font-size:19.5px;color:#000000;letter-spacing:-0.1px;">Langu…nged</div><div class="t" style="left:1743.0px;top:1061.4px;font-size:19.5px;color:#000000;letter-spacing:-0.1px;">Embed…nged</div><div class="t" style="left:1743.0px;top:1109.4px;font-size:19.5px;color:#000000;letter-spacing:-0.1px;">Chat…hanged</div><div class="t" style="left:1743.0px;top:1157.4px;font-size:19.5px;color:#000000;letter-spacing:-0.1px;">Refre…dels</div><div class="t" style="left:1743.0px;top:1229.4px;font-size:19.5px;color:#000000;letter-spacing:-0.1px;">Refre…odels</div><div class="t" style="left:1743.0px;top:1301.4px;font-size:19.5px;color:#000000;letter-spacing:-0.1px;">Set O…l key</div><div class="t" style="left:1743.0px;top:1369.4px;font-size:19.5px;color:#000000;letter-spacing:-0.1px;">Save</div><div class="t" style="left:1743.0px;top:1505.4px;font-size:19.5px;color:#000000;letter-spacing:-0.1px;">Cancel</div><div class="t" style="left:1743.0px;top:1537.4px;font-size:19.5px;color:#000000;letter-spacing:-0.1px;">Locali…jects</div><div class="a" style="left:1742px;top:637px;width:126px;height:5px;background:rgba(240,120,120,0.55);"></div><div class="a" style="left:1780px;top:637px;width:13px;height:5px;background:#e25555;"></div><div class="a" style="left:1735px;top:474px;width:3px;height:5px;background:#3a8ee6;"></div><div class="a" style="left:1869px;top:491px;width:9px;height:12px;background:#80b1de;"></div><div class="a" style="left:1869px;top:493px;width:27px;height:4px;background:#3c3c3c;"></div><div class="a" style="left:1887px;top:671.5px;width:9px;height:12px;background:#e25a5a;"></div><div class="a" style="left:1896px;top:146px;width:1316px;height:1806px;background:#f3f3f3;"></div><div class="a" style="left:1874px;top:146px;width:22px;height:1806px;background:linear-gradient(90deg,rgba(0,0,0,0),rgba(0,0,0,0.045))"></div><div class="t" style="left:1937.5px;top:169.2px;font-size:24px;color:#424242;transform:scaleX(0.895);transform-origin:0 0;">CHAT</div><div class="a" style="left:1932px;top:201.5px;width:68px;height:2px;background:#424242;"></div><svg class="a" style="left:2888px;top:164px;" width="34" height="34" viewBox="0 0 34 34" fill="none"><path d="M17 3V29M4 16H30" stroke="#333" stroke-width="2.3"/></svg><svg class="a" style="left:2928px;top:174px;" width="20" height="14" viewBox="0 0 20 14" fill="none"><path d="M2 3L9.5 10.5L17 3" stroke="#333" stroke-width="2"/></svg><svg class="a" style="left:2966px;top:164px" width="36" height="34" viewBox="-18 -17 36 34" fill="none"><path d="M-3.5 -13H3.5L4.3 -9.5L7.5 -7.6L11 -8.8L14.5 -2.8L11.8 -0.5V0.5L14.5 2.8L11 8.8L7.5 7.6L4.3 9.5L3.5 13H-3.5L-4.3 9.5L-7.5 7.6L-11 8.8L-14.5 2.8L-11.8 0.5V-0.5L-14.5 -2.8L-11 -8.8L-7.5 -7.6L-4.3 -9.5Z" stroke="#333" stroke-width="2.2" stroke-linejoin="round"/><circle r="3.6" stroke="#333" stroke-width="2.2"/></svg><svg class="a" style="left:3023px;top:175px;" width="26" height="12" viewBox="0 0 26 12" fill="none"><circle cx="4" cy="6" r="2.4" fill="#333"/><circle cx="13" cy="6" r="2.4" fill="#333"/><circle cx="22" cy="6" r="2.4" fill="#333"/></svg><div class="a" style="left:3073.5px;top:165px;width:2px;height:32px;background:#a8a8a8;"></div><svg class="a" style="left:3100px;top:167px;" width="28" height="28" viewBox="0 0 28 28" fill="none"><path d="M2 9V5Q2 2 5 2H9M19 2H23Q26 2 26 5V9M26 19V23Q26 26 23 26H19M9 26H5Q2 26 2 23V19" stroke="#333" stroke-width="2.3"/></svg><svg class="a" style="left:3155px;top:170px;" width="22" height="22" viewBox="0 0 22 22" fill="none"><path d="M2 2L20 20M20 2L2 20" stroke="#333" stroke-width="2.3"/></svg><svg class="a" style="left:1935px;top:226px;" width="30" height="26" viewBox="0 0 30 26" fill="none"><path d="M28 13H4M13 3L3 13L13 23" stroke="#424242" stroke-width="2.2"/></svg><div class="t" style="left:1979.0px;top:227.0px;font-size:22px;color:#616161;font-weight:700;letter-spacing:0.38px;">4D CODING STANDARDS OVERVIEW</div><svg class="a" style="left:3150px;top:222px;" width="32" height="32" viewBox="0 0 32 32" fill="none"><rect x="3" y="3" width="26" height="26" rx="5" stroke="#333" stroke-width="2.3"/><path d="M18 3V29" stroke="#333" stroke-width="2.3"/></svg><div class="a" style="left:3192px;top:260px;width:20px;height:674px;background:#bdbdbd;"></div><div class="a" style="left:1896px;top:262px;width:1296px;height:1406px;overflow:hidden"><div class="a" style="left:798px;top:36px;width:486px;height:71px;border-radius:20px;background:#dfe9f5"></div></div><div class="a" style="left:0;top:0;width:3212px;height:1667.5px;overflow:hidden"><div class="t" style="left:2719.0px;top:318.8px;font-size:26.5px;color:#616161;letter-spacing:0.3px;">what are your 4D coding standards?</div><div class="t" style="left:1928.5px;top:426.6px;font-size:24.5px;letter-spacing:0.48px;color:#616161;">Searched <span style="color:#8b8b8b">for instruction files and reviewed 2 documents</span></div><div class="t" style="left:1928.5px;top:496.8px;font-size:26.5px;letter-spacing:0.4px;color:#616161;">Let me read the rest of the main instructions file and the other specialized files.</div><div class="t" style="left:1928.5px;top:572.6px;font-size:24.5px;letter-spacing:0.48px;color:#616161;">Reviewed <span style="color:#8b8b8b">5 files</span></div><div class="t" style="left:1928.5px;top:643.3px;font-size:26.5px;letter-spacing:0.4px;color:#616161;">Here are my 4D coding standards, loaded from the 5 instruction files in your project's</div><div class="a" style="left:2969px;top:640px;width:198px;height:34px;box-sizing:border-box;border:1.5px solid #dadada;border-radius:8px"></div><svg class="a" style="left:2975px;top:647px;" width="24" height="20" viewBox="0 0 24 20" fill="none"><path d="M2 4Q2 2 4 2H9L11 4.5H20Q22 4.5 22 6.5V16Q22 18 20 18H4Q2 18 2 16Z" stroke="#444" stroke-width="1.9"/><path d="M2 8H22" stroke="#444" stroke-width="1.6"/></svg><div class="t" style="left:3015.0px;top:646.1px;font-size:24.5px;color:#616161;letter-spacing:0.45px;">.instructions</div><div class="t" style="left:1928.5px;top:683.3px;font-size:26.5px;letter-spacing:0.4px;color:#616161;">directory:</div><div class="a" style="left:1928px;top:749px;width:1252px;height:2.5px;background:#cdcdcd;"></div><div class="t" style="left:1928.5px;top:793.3px;font-size:26.5px;color:#616161;font-weight:700;letter-spacing:0.15px;">Core Standards (</div><div class="a" style="left:2145px;top:790px;width:259px;height:33px;box-sizing:border-box;border:1.5px solid #dadada;border-radius:8px"></div><svg class="a" style="left:2156px;top:799px;" width="13" height="14" viewBox="0 0 13 14" fill="none"><path d="M3.2 0.5L6.5 3L9.8 0.5V7H12.5L6.5 13.3L0.5 7H3.2Z" fill="#5b8ba9"/></svg><div class="t" style="left:2180.0px;top:796.1px;font-size:24.5px;color:#616161;letter-spacing:0.75px;">4d.instructions.md</div><div class="t" style="left:2408.0px;top:793.3px;font-size:26.5px;color:#616161;font-weight:700;">)</div><div class="t" style="left:1928.5px;top:852.8px;font-size:26.5px;color:#616161;font-weight:700;letter-spacing:0.2px;">Variables &amp; Types</div><div class="a" style="left:1952px;top:932px;width:10px;height:10px;border-radius:50%;background:#616161"></div><div class="a" style="left:1952px;top:981px;width:10px;height:10px;border-radius:50%;background:#616161"></div><div class="t" style="left:1976.8px;top:923.3px;font-size:26.5px;letter-spacing:0.4px;color:#616161;">All variables start with <span class="ch">$</span> and are declared with <span class="ch">var $name: Type</span></div><div class="t" style="left:1976.8px;top:970.3px;font-size:26.5px;letter-spacing:0.4px;color:#616161;">Sugar syntax: <span class="ch">{}</span> for objects, <span class="ch">[]</span> for collections (fallback to <span class="ch">New object()</span> for special keys)</div><div class="t" style="left:1928.5px;top:1037.8px;font-size:26.5px;color:#616161;font-weight:700;letter-spacing:0.2px;">Naming Conventions</div><div class="a" style="left:1929px;top:1103px;width:574px;height:289px;box-sizing:border-box;border:2px solid #d6d6d6;border-radius:11px"></div><div class="a" style="left:2064.5px;top:1105px;width:2px;height:285px;background:#d6d6d6;"></div><div class="a" style="left:2239.5px;top:1105px;width:2px;height:285px;background:#d6d6d6;"></div><div class="a" style="left:1931px;top:1158.5px;width:570px;height:2px;background:#d6d6d6;"></div><div class="a" style="left:1931px;top:1216.5px;width:570px;height:2px;background:#d6d6d6;"></div><div class="a" style="left:1931px;top:1274.5px;width:570px;height:2px;background:#d6d6d6;"></div><div class="a" style="left:1931px;top:1332.5px;width:570px;height:2px;background:#d6d6d6;"></div><div class="t" style="left:1942.8px;top:1118.8px;font-size:26.5px;color:#616161;font-weight:700;letter-spacing:0.1px;">Element</div><div class="t" style="left:2079.6px;top:1118.8px;font-size:26.5px;color:#616161;font-weight:700;letter-spacing:0.1px;">Convention</div><div class="t" style="left:2255.0px;top:1118.8px;font-size:26.5px;color:#616161;font-weight:700;letter-spacing:0.1px;">Example</div><div class="t" style="left:1942.8px;top:1176.8px;font-size:26.5px;color:#616161;letter-spacing:0.4px;">Methods</div><div class="t" style="left:2079.6px;top:1176.8px;font-size:26.5px;color:#616161;letter-spacing:0.4px;">PascalCase</div><div class="t" style="left:2254px;top:1174.0px;font-size:26.5px;letter-spacing:0.4px;color:#616161;"><span class="ch">CalculateTotal</span></div><div class="t" style="left:1942.8px;top:1234.8px;font-size:26.5px;color:#616161;letter-spacing:0.4px;">Classes</div><div class="t" style="left:2079.6px;top:1234.8px;font-size:26.5px;color:#616161;letter-spacing:0.4px;">PascalCase</div><div class="t" style="left:2254px;top:1232.0px;font-size:26.5px;letter-spacing:0.4px;color:#616161;"><span class="ch">OrderManager</span></div><div class="t" style="left:1942.8px;top:1292.8px;font-size:26.5px;color:#616161;letter-spacing:0.4px;">Variables</div><div class="t" style="left:2079.6px;top:1292.8px;font-size:26.5px;color:#616161;letter-spacing:0.4px;">$camelCase</div><div class="t" style="left:2254px;top:1290.0px;font-size:26.5px;letter-spacing:0.4px;color:#616161;"><span class="ch">$userName</span></div><div class="t" style="left:1942.8px;top:1350.8px;font-size:26.5px;color:#616161;letter-spacing:0.4px;">Tests</div><div class="t" style="left:2079.6px;top:1350.8px;font-size:26.5px;color:#616161;letter-spacing:0.4px;">test_ prefix</div><div class="t" style="left:2254px;top:1348.0px;font-size:26.5px;letter-spacing:0.4px;color:#616161;"><span class="ch">test_UserCreation</span></div><div class="t" style="left:1928.5px;top:1431.3px;font-size:26.5px;letter-spacing:0.4px;color:#616161;"><b>Methods</b>: Start with <span class="ch">#DECLARE($arg: Type): ReturnType</span>, use <span class="ch">return</span> (not <span class="ch">$0</span>)</div><div class="t" style="left:1928.5px;top:1503.8px;font-size:26.5px;letter-spacing:0.4px;color:#616161;"><b>Classes</b>: Properties declared before constructor, one class per file, file name matches class name</div><div class="t" style="left:1928.5px;top:1574.3px;font-size:26.5px;letter-spacing:0.4px;color:#616161;"><b>Error handling</b>: <span class="ch">Try</span> / <span class="ch">Catch</span> / <span class="ch">End try</span> with <span class="ch">Last errors</span></div><div class="t" style="left:1928.5px;top:1646.8px;font-size:26.5px;letter-spacing:0.4px;color:#616161;"><b>File access</b>: Always use <span class="ch">Folder(fk resources folder)</span> and modern <span class="ch">File()</span>/<span class="ch">Folder()</span> classes — never</div></div><div class="a" style="left:1920px;top:1684px;width:1268px;height:208px;border-radius:16px;background:#ffffff"></div><div class="a" style="left:1935px;top:1699px;width:277px;height:38px;box-sizing:border-box;border:2px dashed #cfcfcf;border-radius:9px"></div><svg class="a" style="left:1943px;top:1708px;" width="22" height="22" viewBox="0 0 22 22" fill="none"><path d="M11 2V20M2 11H20" stroke="#555" stroke-width="2"/></svg><svg class="a" style="left:1982px;top:1710px;" width="16" height="16" viewBox="0 0 16 16" fill="none"><path d="M1 2H15M1 6H8M1 10H15M1 14H11" stroke="#9a9a9a" stroke-width="2"/></svg><div class="t" style="left:2010.5px;top:1706.2px;font-size:23.5px;color:#737373;letter-spacing:0.3px;font-style:italic;">formAIConfig.4dm</div><div class="t" style="left:1942.7px;top:1769.3px;font-size:26.5px;color:#767676;letter-spacing:0.4px;">Describe what to build</div><svg class="a" style="left:1942px;top:1843px;" width="26" height="26" viewBox="0 0 26 26" fill="none"><path d="M13 2V24M2 13H24" stroke="#444" stroke-width="2.2"/></svg><svg class="a" style="left:1998px;top:1843px;" width="28" height="26" viewBox="0 0 28 26" fill="none"><path d="M9 3L3 13L9 23M19 3L25 13L19 23M16 3L11 23" stroke="#444" stroke-width="2" stroke-linejoin="round"/></svg><div class="t" style="left:2037.0px;top:1844.2px;font-size:24px;color:#444444;letter-spacing:-0.55px;">Agent</div><svg class="a" style="left:2108px;top:1851px;" width="16" height="10" viewBox="0 0 16 10" fill="none"><path d="M2 2L8 8L14 2" stroke="#666" stroke-width="1.8"/></svg><div class="t" style="left:2162.6px;top:1844.2px;font-size:24px;color:#444444;letter-spacing:-0.5px;">Claude Opus 4.6</div><svg class="a" style="left:2347px;top:1851px;" width="16" height="10" viewBox="0 0 16 10" fill="none"><path d="M2 2L8 8L14 2" stroke="#666" stroke-width="1.8"/></svg><svg class="a" style="left:2394px;top:1842px;" width="30" height="28" viewBox="0 0 30 28" fill="none"><path d="M2 7H27M2 21H27" stroke="#444" stroke-width="2"/><circle cx="19" cy="7" r="3.5" fill="#fff" stroke="#444" stroke-width="2"/><circle cx="9" cy="21" r="3.5" fill="#fff" stroke="#444" stroke-width="2"/></svg><svg class="a" style="left:3140px;top:1842px;" width="26" height="28" viewBox="0 0 26 28" fill="none"><path d="M13 26V3M2 14L13 3L24 14" stroke="#a9a9a9" stroke-width="2"/></svg><svg class="a" style="left:1942px;top:1910px;" width="24" height="25" viewBox="0 0 24 25" fill="none"><rect x="1.5" y="1.5" width="21" height="15" rx="3" stroke="#444" stroke-width="2"/><path d="M12 17V22M6 22.5H18" stroke="#444" stroke-width="2"/></svg><div class="t" style="left:1979.0px;top:1912.0px;font-size:22px;color:#444444;letter-spacing:0.2px;">Local</div><svg class="a" style="left:2045px;top:1917px;" width="16" height="10" viewBox="0 0 16 10" fill="none"><path d="M2 2L8 8L14 2" stroke="#666" stroke-width="1.8"/></svg><svg class="a" style="left:2095px;top:1911px;" width="22" height="24" viewBox="0 0 22 24" fill="none"><path d="M11 1.5L20 4.5V11Q20 19 11 22.5Q2 19 2 11V4.5Z" stroke="#444" stroke-width="2" stroke-linejoin="round"/><circle cx="11" cy="10" r="2.2" fill="#444"/><path d="M11 11V15" stroke="#444" stroke-width="2"/></svg><div class="t" style="left:2130.7px;top:1912.0px;font-size:22px;color:#444444;letter-spacing:0.68px;">Default Approvals</div><svg class="a" style="left:2326px;top:1917px;" width="16" height="10" viewBox="0 0 16 10" fill="none"><path d="M2 2L8 8L14 2" stroke="#666" stroke-width="1.8"/></svg><svg class="a" style="left:3138px;top:1908px;" width="28" height="28" viewBox="0 0 28 28" fill="none"><circle cx="14" cy="14" r="10.5" stroke="#cccccc" stroke-width="3"/><path d="M12 3.6Q19.5 3.3 23 8.5" stroke="#333" stroke-width="3.2"/></svg><div class="sb"><div class="a" style="left:112px;top:1952px;width:3100px;height:44px;background:#3777c6;"></div><svg class="a" style="left:136px;top:1960px;" width="24" height="28" viewBox="0 0 24 28" fill="none"><path d="M2 26L10 18L2 10" stroke="#fff" stroke-width="2"/><path d="M20 2L12 10L20 18" stroke="#fff" stroke-width="2"/></svg><svg class="a" style="left:198px;top:1958px;" width="32" height="32" viewBox="0 0 32 32" fill="none"><circle cx="6" cy="4.5" r="3.2" stroke="#fff" stroke-width="2"/><circle cx="6" cy="27" r="3.2" stroke="#fff" stroke-width="2"/><path d="M6 8V24" stroke="#fff" stroke-width="2"/><path d="M10 14Q10 9 14 9Q18 9 18 14" stroke="#fff" stroke-width="2"/><circle cx="19" cy="22" r="8" fill="#fff"/><path d="M19 17V27M14.7 19.5L23.3 24.5M14.7 24.5L23.3 19.5" stroke="#3777c6" stroke-width="2"/></svg><div class="t" style="left:236.0px;top:1962.7px;font-size:24px;color:#ffffff;letter-spacing:0.5px;">main*</div><svg class="a" style="left:314px;top:1958px;" width="28" height="32" viewBox="0 0 28 32" fill="none"><path d="M7.5 24.5A10 10 0 0 1 13.5 5.5M19.5 6.5A10 10 0 0 1 13.5 25.5" stroke="#fff" stroke-width="2"/><path d="M10.5 2.2L14 5.5L10.5 8.8M16.5 22.2L13 25.5L16.5 28.8" stroke="#fff" stroke-width="2" stroke-linejoin="round"/></svg><svg class="a" style="left:376px;top:1960px;" width="30" height="30" viewBox="0 0 30 30" fill="none"><circle cx="15" cy="15" r="12.5" stroke="#fff" stroke-width="2"/><path d="M10 10L20 20M20 10L10 20" stroke="#fff" stroke-width="2"/></svg><div class="t" style="left:416.0px;top:1962.7px;font-size:24px;color:#ffffff;letter-spacing:0.5px;">4</div><svg class="a" style="left:437px;top:1960px;" width="32" height="30" viewBox="0 0 32 30" fill="none"><path d="M16 3L29 26H3Z" stroke="#fff" stroke-width="2" stroke-linejoin="round"/><path d="M16 11V19" stroke="#fff" stroke-width="2"/><circle cx="16" cy="22.5" r="1.4" fill="#fff"/></svg><div class="t" style="left:477.0px;top:1962.7px;font-size:24px;color:#ffffff;letter-spacing:0.5px;">71</div><div class="t" style="left:2021.5px;top:1962.7px;font-size:24px;color:#ffffff;letter-spacing:0.58px;">Ln 54, Col 5</div><div class="t" style="left:2192.4px;top:1962.7px;font-size:24px;color:#ffffff;letter-spacing:0.45px;">Tab Size: 4</div><div class="t" style="left:2348.0px;top:1962.7px;font-size:24px;color:#ffffff;letter-spacing:0.3px;">UTF-8</div><div class="t" style="left:2452.5px;top:1962.7px;font-size:24px;color:#ffffff;letter-spacing:0.3px;">LF</div><div class="t" style="left:2514.0px;top:1961.7px;font-size:24px;color:#ffffff;letter-spacing:-0.5px;">{ }</div><div class="t" style="left:2556.0px;top:1962.7px;font-size:24px;color:#ffffff;letter-spacing:0.3px;">4D</div><svg class="a" style="left:2618px;top:1958px;" width="36" height="32" viewBox="0 0 36 32" fill="none"><path d="M5 14Q2 10 4 6Q7 2 12 3Q15 4 18 7Q21 4 24 3Q29 2 32 6Q34 10 31 14V22Q31 28 18 28Q5 28 5 22Z" fill="#fff"/><rect x="9" y="8" width="7" height="6" rx="2" fill="#3777c6"/><rect x="20" y="8" width="7" height="6" rx="2" fill="#3777c6"/><rect x="13" y="18" width="3" height="6" rx="1.5" fill="#3777c6"/><rect x="20" y="18" width="3" height="6" rx="1.5" fill="#3777c6"/></svg><div class="t" style="left:2685.0px;top:1962.7px;font-size:24px;color:#ffffff;letter-spacing:0.35px;">No Environment</div><div class="t" style="left:2897.0px;top:1962.7px;font-size:24px;color:#ffffff;letter-spacing:0.35px;">Reload</div><svg class="a" style="left:3005px;top:1959px;" width="32" height="30" viewBox="0 0 32 30" fill="none"><circle cx="16" cy="15" r="12.5" stroke="#fff" stroke-width="2"/><path d="M7 24L25 6" stroke="#fff" stroke-width="2"/></svg><div class="t" style="left:3044.7px;top:1962.7px;font-size:24px;color:#ffffff;letter-spacing:0.35px;">Prettier</div><svg class="a" style="left:3162px;top:1958px;" width="28" height="32" viewBox="0 0 28 32" fill="none"><path d="M4 23H24L21 19V12Q21 5 14 5Q7 5 7 12V19Z" stroke="#fff" stroke-width="2" stroke-linejoin="round"/><path d="M11 25Q11 28 14 28Q17 28 17 25" stroke="#fff" stroke-width="2"/></svg></div></div></body></html>
